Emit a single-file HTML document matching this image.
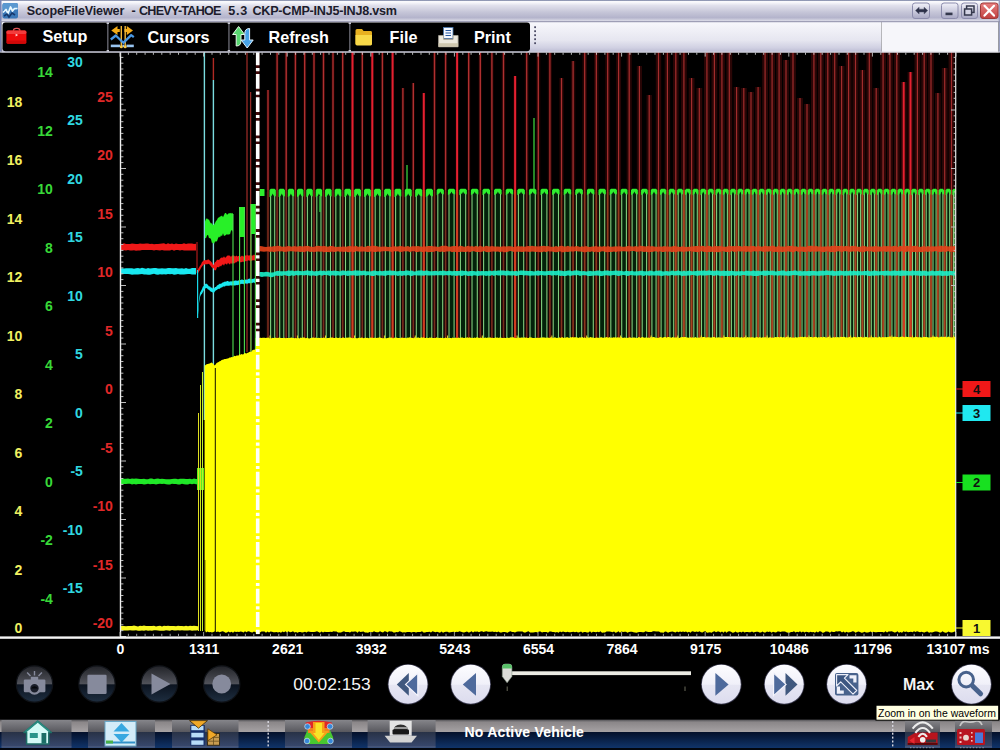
<!DOCTYPE html>
<html><head><meta charset="utf-8"><title>ScopeFileViewer</title>
<style>
html,body{margin:0;padding:0;background:#000;}
body{width:1000px;height:750px;overflow:hidden;position:relative;font-family:"Liberation Sans",sans-serif;}
svg{position:absolute;left:0;top:0;display:block}
text{font-family:"Liberation Sans",sans-serif;}
.b{font-weight:bold}
.ax{font-weight:bold;font-size:14px;text-anchor:end}
.tl{font-weight:bold;font-size:14px;fill:#fff;text-anchor:middle}
.tb{font-weight:bold;font-size:16.2px;fill:#fff}
.mk{font-weight:bold;font-size:13px;fill:#111;text-anchor:middle}
</style></head><body>
<svg width="1000" height="750" viewBox="0 0 1000 750">
<defs>
<linearGradient id="gTitle" x1="0" y1="0" x2="0" y2="1">
<stop offset="0" stop-color="#5c6890"/><stop offset="0.07" stop-color="#fdfdff"/><stop offset="0.25" stop-color="#e0e0ec"/><stop offset="0.55" stop-color="#c6c6d8"/><stop offset="0.8" stop-color="#b4b4cc"/><stop offset="0.9" stop-color="#ccccdc"/><stop offset="1" stop-color="#ececf4"/>
</linearGradient>
<linearGradient id="gTool" x1="0" y1="0" x2="0" y2="1">
<stop offset="0" stop-color="#f8f8fc"/><stop offset="0.6" stop-color="#e6e6f0"/><stop offset="0.85" stop-color="#d0d0e2"/><stop offset="1" stop-color="#babad2"/>
</linearGradient>
<linearGradient id="gBtn" x1="0" y1="0" x2="0" y2="1">
<stop offset="0" stop-color="#f2f2fa"/><stop offset="1" stop-color="#a8a8c4"/>
</linearGradient>
<linearGradient id="gClose" x1="0" y1="0" x2="0" y2="1">
<stop offset="0" stop-color="#e88080"/><stop offset="1" stop-color="#c04040"/>
</linearGradient>
<linearGradient id="gRound" x1="0" y1="0" x2="0" y2="1">
<stop offset="0" stop-color="#fdfdff"/><stop offset="0.5" stop-color="#f0f0f9"/><stop offset="0.52" stop-color="#e6e6f3"/><stop offset="1" stop-color="#dcdcee"/>
</linearGradient>
<linearGradient id="gDis" x1="0" y1="0" x2="0" y2="1">
<stop offset="0" stop-color="#222328"/><stop offset="0.5" stop-color="#50525a"/><stop offset="0.52" stop-color="#0c1420"/><stop offset="1" stop-color="#1e2e40"/>
</linearGradient>
<linearGradient id="gTaskTop" x1="0" y1="0" x2="0" y2="1">
<stop offset="0" stop-color="#505054"/><stop offset="0.2" stop-color="#8a8688"/><stop offset="1" stop-color="#a6a2a4"/>
</linearGradient>
<linearGradient id="gTaskBot" x1="0" y1="0" x2="0" y2="1">
<stop offset="0" stop-color="#04102a"/><stop offset="1" stop-color="#10346a"/>
</linearGradient>
<linearGradient id="gTaskBotB" x1="0" y1="0" x2="0" y2="1">
<stop offset="0" stop-color="#283246"/><stop offset="1" stop-color="#38486e"/>
</linearGradient>
<linearGradient id="gTaskTopD" x1="0" y1="0" x2="0" y2="1">
<stop offset="0" stop-color="#85858a"/><stop offset="1" stop-color="#58585e"/>
</linearGradient>
</defs>
<rect width="1000" height="750" fill="#000"/>

<g id="redspikes" stroke-linecap="butt">
<line x1="268.0" y1="90" x2="268.0" y2="190" stroke="#200303" stroke-width="3.2"/>
<line x1="277.1" y1="52" x2="277.1" y2="190" stroke="#200303" stroke-width="3.2"/>
<line x1="286.2" y1="52" x2="286.2" y2="190" stroke="#200303" stroke-width="3.2"/>
<line x1="295.4" y1="52" x2="295.4" y2="190" stroke="#200303" stroke-width="3.2"/>
<line x1="304.7" y1="52" x2="304.7" y2="190" stroke="#200303" stroke-width="3.2"/>
<line x1="314.0" y1="52" x2="314.0" y2="190" stroke="#200303" stroke-width="3.2"/>
<line x1="323.5" y1="52" x2="323.5" y2="190" stroke="#200303" stroke-width="3.2"/>
<line x1="333.0" y1="52" x2="333.0" y2="190" stroke="#200303" stroke-width="3.2"/>
<line x1="342.7" y1="52" x2="342.7" y2="190" stroke="#200303" stroke-width="3.2"/>
<line x1="352.5" y1="52" x2="352.5" y2="190" stroke="#200303" stroke-width="3.2"/>
<line x1="362.3" y1="52" x2="362.3" y2="190" stroke="#200303" stroke-width="3.2"/>
<line x1="372.3" y1="52" x2="372.3" y2="190" stroke="#200303" stroke-width="3.2"/>
<line x1="382.4" y1="52" x2="382.4" y2="190" stroke="#200303" stroke-width="3.2"/>
<line x1="392.6" y1="52" x2="392.6" y2="190" stroke="#200303" stroke-width="3.2"/>
<line x1="402.9" y1="88" x2="402.9" y2="190" stroke="#200303" stroke-width="3.2"/>
<line x1="413.3" y1="83" x2="413.3" y2="190" stroke="#200303" stroke-width="3.2"/>
<line x1="423.8" y1="93" x2="423.8" y2="190" stroke="#200303" stroke-width="3.2"/>
<line x1="434.5" y1="52" x2="434.5" y2="190" stroke="#200303" stroke-width="3.2"/>
<line x1="445.6" y1="52" x2="445.6" y2="190" stroke="#200303" stroke-width="3.2"/>
<line x1="457.1" y1="52" x2="457.1" y2="190" stroke="#200303" stroke-width="3.2"/>
<line x1="468.7" y1="52" x2="468.7" y2="190" stroke="#200303" stroke-width="3.2"/>
<line x1="480.3" y1="52" x2="480.3" y2="190" stroke="#200303" stroke-width="3.3215357361167204"/>
<line x1="491.9" y1="52" x2="491.9" y2="190" stroke="#200303" stroke-width="3.4586266452076297"/>
<line x1="503.5" y1="52" x2="503.5" y2="190" stroke="#210303" stroke-width="3.595717554298539"/>
<line x1="515.1" y1="76" x2="515.1" y2="190" stroke="#220303" stroke-width="3.7328084633894485"/>
<line x1="526.7" y1="52" x2="526.7" y2="190" stroke="#220303" stroke-width="3.869899372480358"/>
<line x1="538.3" y1="52" x2="538.3" y2="190" stroke="#230303" stroke-width="4.006990281571267"/>
<line x1="549.9" y1="52" x2="549.9" y2="190" stroke="#230404" stroke-width="4.144081190662177"/>
<line x1="561.5" y1="78" x2="561.5" y2="190" stroke="#240404" stroke-width="4.2811720997530855"/>
<line x1="573.1" y1="61" x2="573.1" y2="190" stroke="#240404" stroke-width="4.418263008843995"/>
<line x1="584.7" y1="52" x2="584.7" y2="190" stroke="#250404" stroke-width="4.555353917934904"/>
<line x1="596.3" y1="52" x2="596.3" y2="190" stroke="#250404" stroke-width="4.692444827025814"/>
<line x1="607.7" y1="52" x2="607.7" y2="190" stroke="#260404" stroke-width="4.826862267798338"/>
<line x1="618.6" y1="52" x2="618.6" y2="190" stroke="#260505" stroke-width="4.956440680703052"/>
<line x1="629.2" y1="52" x2="629.2" y2="190" stroke="#270505" stroke-width="5.081354270743197"/>
<line x1="639.4" y1="66" x2="639.4" y2="190" stroke="#270505" stroke-width="5.201770971541896"/>
<line x1="649.2" y1="95" x2="649.2" y2="190" stroke="#280505" stroke-width="5.317852671111842"/>
<line x1="658.5" y1="52" x2="658.5" y2="190" stroke="#280505" stroke-width="5.428232764828977"/>
<line x1="667.4" y1="52" x2="667.4" y2="190" stroke="#280505" stroke-width="5.533093853860256"/>
<line x1="675.8" y1="52" x2="675.8" y2="190" stroke="#290505" stroke-width="5.632711888439969"/>
<line x1="683.9" y1="52" x2="683.9" y2="190" stroke="#290505" stroke-width="5.7273490212906975"/>
<line x1="691.6" y1="78" x2="691.6" y2="190" stroke="#2a0606" stroke-width="5.800000000000001"/>
<line x1="699.3" y1="88" x2="699.3" y2="190" stroke="#2a0606" stroke-width="5.800000000000001"/>
<line x1="706.9" y1="52" x2="706.9" y2="190" stroke="#2a0606" stroke-width="5.800000000000001"/>
<line x1="714.4" y1="52" x2="714.4" y2="190" stroke="#2a0606" stroke-width="5.800000000000001"/>
<line x1="721.9" y1="52" x2="721.9" y2="190" stroke="#2a0606" stroke-width="5.800000000000001"/>
<line x1="729.3" y1="52" x2="729.3" y2="190" stroke="#2a0606" stroke-width="5.800000000000001"/>
<line x1="736.6" y1="87" x2="736.6" y2="190" stroke="#2a0606" stroke-width="5.800000000000001"/>
<line x1="743.8" y1="88" x2="743.8" y2="190" stroke="#2a0606" stroke-width="5.800000000000001"/>
<line x1="751.0" y1="92" x2="751.0" y2="190" stroke="#2a0606" stroke-width="5.800000000000001"/>
<line x1="758.1" y1="87" x2="758.1" y2="190" stroke="#2a0606" stroke-width="5.800000000000001"/>
<line x1="765.1" y1="52" x2="765.1" y2="190" stroke="#2a0606" stroke-width="5.800000000000001"/>
<line x1="772.1" y1="52" x2="772.1" y2="190" stroke="#2a0606" stroke-width="5.800000000000001"/>
<line x1="779.1" y1="52" x2="779.1" y2="190" stroke="#2a0606" stroke-width="5.800000000000001"/>
<line x1="786.0" y1="60" x2="786.0" y2="190" stroke="#2a0606" stroke-width="5.800000000000001"/>
<line x1="793.0" y1="52" x2="793.0" y2="190" stroke="#2a0606" stroke-width="5.800000000000001"/>
<line x1="800.0" y1="98" x2="800.0" y2="190" stroke="#2a0606" stroke-width="5.800000000000001"/>
<line x1="807.0" y1="104" x2="807.0" y2="190" stroke="#2a0606" stroke-width="5.800000000000001"/>
<line x1="813.9" y1="52" x2="813.9" y2="190" stroke="#2a0606" stroke-width="5.800000000000001"/>
<line x1="820.8" y1="52" x2="820.8" y2="190" stroke="#2a0606" stroke-width="5.800000000000001"/>
<line x1="827.8" y1="52" x2="827.8" y2="190" stroke="#2a0606" stroke-width="5.800000000000001"/>
<line x1="834.7" y1="52" x2="834.7" y2="190" stroke="#2a0606" stroke-width="5.800000000000001"/>
<line x1="841.6" y1="66" x2="841.6" y2="190" stroke="#2a0606" stroke-width="5.800000000000001"/>
<line x1="848.6" y1="52" x2="848.6" y2="190" stroke="#2a0606" stroke-width="5.800000000000001"/>
<line x1="855.5" y1="52" x2="855.5" y2="190" stroke="#2a0606" stroke-width="5.800000000000001"/>
<line x1="862.4" y1="70" x2="862.4" y2="190" stroke="#2a0606" stroke-width="5.800000000000001"/>
<line x1="869.3" y1="52" x2="869.3" y2="190" stroke="#2a0606" stroke-width="5.800000000000001"/>
<line x1="876.2" y1="88" x2="876.2" y2="190" stroke="#2a0606" stroke-width="5.800000000000001"/>
<line x1="883.1" y1="52" x2="883.1" y2="190" stroke="#2a0606" stroke-width="5.800000000000001"/>
<line x1="889.9" y1="52" x2="889.9" y2="190" stroke="#2a0606" stroke-width="5.800000000000001"/>
<line x1="896.8" y1="52" x2="896.8" y2="190" stroke="#2a0606" stroke-width="5.800000000000001"/>
<line x1="903.7" y1="82" x2="903.7" y2="190" stroke="#2a0606" stroke-width="5.800000000000001"/>
<line x1="910.5" y1="72" x2="910.5" y2="190" stroke="#2a0606" stroke-width="5.800000000000001"/>
<line x1="917.4" y1="52" x2="917.4" y2="190" stroke="#2a0606" stroke-width="5.800000000000001"/>
<line x1="924.2" y1="52" x2="924.2" y2="190" stroke="#2a0606" stroke-width="5.800000000000001"/>
<line x1="931.0" y1="52" x2="931.0" y2="190" stroke="#2a0606" stroke-width="5.800000000000001"/>
<line x1="937.9" y1="93" x2="937.9" y2="190" stroke="#2a0606" stroke-width="5.800000000000001"/>
<line x1="944.7" y1="68" x2="944.7" y2="190" stroke="#2a0606" stroke-width="5.800000000000001"/>
<line x1="951.5" y1="52" x2="951.5" y2="190" stroke="#2a0606" stroke-width="5.800000000000001"/>
<line x1="268.0" y1="90" x2="268.0" y2="190" stroke="#b03030" stroke-width="1.4"/>
<rect x="265.7" y="192" width="4.7" height="148" fill="#100604"/>
<line x1="268.0" y1="190" x2="268.0" y2="340" stroke="#782a1c" stroke-width="1.65"/>
<line x1="277.1" y1="52" x2="277.1" y2="190" stroke="#b03030" stroke-width="1.4"/>
<rect x="274.8" y="192" width="4.8" height="148" fill="#100604"/>
<line x1="277.1" y1="190" x2="277.1" y2="340" stroke="#782a1c" stroke-width="1.65"/>
<line x1="286.2" y1="52" x2="286.2" y2="190" stroke="#b03030" stroke-width="1.4"/>
<rect x="283.9" y="192" width="4.8" height="148" fill="#100604"/>
<line x1="286.2" y1="190" x2="286.2" y2="340" stroke="#782a1c" stroke-width="1.65"/>
<line x1="295.4" y1="52" x2="295.4" y2="190" stroke="#b03030" stroke-width="1.4"/>
<rect x="293.1" y="192" width="4.8" height="148" fill="#100604"/>
<line x1="295.4" y1="190" x2="295.4" y2="340" stroke="#782a1c" stroke-width="1.65"/>
<line x1="304.7" y1="52" x2="304.7" y2="190" stroke="#b03030" stroke-width="1.4"/>
<rect x="302.3" y="192" width="4.9" height="148" fill="#100604"/>
<line x1="304.7" y1="190" x2="304.7" y2="340" stroke="#782a1c" stroke-width="1.65"/>
<line x1="314.0" y1="52" x2="314.0" y2="190" stroke="#b03030" stroke-width="1.4"/>
<rect x="311.7" y="192" width="4.9" height="148" fill="#100604"/>
<line x1="314.0" y1="190" x2="314.0" y2="340" stroke="#782a1c" stroke-width="1.65"/>
<line x1="323.5" y1="52" x2="323.5" y2="190" stroke="#b03030" stroke-width="1.4"/>
<rect x="321.1" y="192" width="5.0" height="148" fill="#100604"/>
<line x1="323.5" y1="190" x2="323.5" y2="340" stroke="#782a1c" stroke-width="1.65"/>
<line x1="333.0" y1="52" x2="333.0" y2="190" stroke="#b03030" stroke-width="1.4"/>
<rect x="330.6" y="192" width="5.0" height="148" fill="#100604"/>
<line x1="333.0" y1="190" x2="333.0" y2="340" stroke="#782a1c" stroke-width="1.65"/>
<line x1="342.7" y1="52" x2="342.7" y2="190" stroke="#b03030" stroke-width="1.4"/>
<rect x="340.3" y="192" width="5.1" height="148" fill="#100604"/>
<line x1="342.7" y1="190" x2="342.7" y2="340" stroke="#782a1c" stroke-width="1.65"/>
<line x1="352.5" y1="52" x2="352.5" y2="190" stroke="#e42030" stroke-width="2.0"/>
<rect x="350.0" y="192" width="5.1" height="148" fill="#100604"/>
<line x1="352.5" y1="190" x2="352.5" y2="340" stroke="#d03c20" stroke-width="2.25"/>
<line x1="362.3" y1="52" x2="362.3" y2="190" stroke="#b03030" stroke-width="1.4"/>
<rect x="359.8" y="192" width="5.2" height="148" fill="#100604"/>
<line x1="362.3" y1="190" x2="362.3" y2="340" stroke="#782a1c" stroke-width="1.65"/>
<line x1="372.3" y1="52" x2="372.3" y2="190" stroke="#e42030" stroke-width="2.0"/>
<rect x="369.8" y="192" width="5.2" height="148" fill="#100604"/>
<line x1="372.3" y1="190" x2="372.3" y2="340" stroke="#d03c20" stroke-width="2.25"/>
<line x1="382.4" y1="52" x2="382.4" y2="190" stroke="#b03030" stroke-width="1.4"/>
<rect x="379.8" y="192" width="5.3" height="148" fill="#100604"/>
<line x1="382.4" y1="190" x2="382.4" y2="340" stroke="#782a1c" stroke-width="1.65"/>
<line x1="392.6" y1="52" x2="392.6" y2="190" stroke="#e42030" stroke-width="2.0"/>
<rect x="390.0" y="192" width="5.4" height="148" fill="#100604"/>
<line x1="392.6" y1="190" x2="392.6" y2="340" stroke="#d03c20" stroke-width="2.25"/>
<line x1="402.9" y1="88" x2="402.9" y2="190" stroke="#b03030" stroke-width="1.4"/>
<rect x="400.3" y="192" width="5.4" height="148" fill="#100604"/>
<line x1="402.9" y1="190" x2="402.9" y2="340" stroke="#782a1c" stroke-width="1.65"/>
<line x1="413.3" y1="83" x2="413.3" y2="190" stroke="#b03030" stroke-width="1.4"/>
<rect x="410.7" y="192" width="5.5" height="148" fill="#100604"/>
<line x1="413.3" y1="190" x2="413.3" y2="340" stroke="#782a1c" stroke-width="1.65"/>
<line x1="423.8" y1="93" x2="423.8" y2="190" stroke="#e42030" stroke-width="2.0"/>
<rect x="421.1" y="192" width="5.6" height="148" fill="#100604"/>
<line x1="423.8" y1="190" x2="423.8" y2="340" stroke="#d03c20" stroke-width="2.25"/>
<line x1="434.5" y1="52" x2="434.5" y2="190" stroke="#b03030" stroke-width="1.4"/>
<rect x="431.8" y="192" width="5.8" height="148" fill="#100604"/>
<line x1="434.5" y1="190" x2="434.5" y2="340" stroke="#782a1c" stroke-width="1.65"/>
<line x1="445.6" y1="52" x2="445.6" y2="190" stroke="#b03030" stroke-width="1.4"/>
<rect x="442.8" y="192" width="6.0" height="148" fill="#100604"/>
<line x1="445.6" y1="190" x2="445.6" y2="340" stroke="#782a1c" stroke-width="1.65"/>
<line x1="457.1" y1="52" x2="457.1" y2="190" stroke="#e42030" stroke-width="2.0"/>
<rect x="454.2" y="192" width="6.0" height="148" fill="#100604"/>
<line x1="457.1" y1="190" x2="457.1" y2="340" stroke="#d03c20" stroke-width="2.25"/>
<line x1="468.7" y1="52" x2="468.7" y2="190" stroke="#b03030" stroke-width="1.4"/>
<rect x="465.8" y="192" width="6.0" height="148" fill="#100604"/>
<line x1="468.7" y1="190" x2="468.7" y2="340" stroke="#782a1c" stroke-width="1.65"/>
<line x1="480.3" y1="52" x2="480.3" y2="190" stroke="#af3030" stroke-width="1.3906510972217907"/>
<rect x="477.4" y="192" width="6.0" height="148" fill="#100604"/>
<line x1="480.3" y1="190" x2="480.3" y2="340" stroke="#782a1c" stroke-width="1.64"/>
<line x1="491.9" y1="52" x2="491.9" y2="190" stroke="#ae3030" stroke-width="1.380105642676336"/>
<rect x="489.0" y="192" width="6.0" height="148" fill="#100604"/>
<line x1="491.9" y1="190" x2="491.9" y2="340" stroke="#782a1c" stroke-width="1.63"/>
<line x1="503.5" y1="52" x2="503.5" y2="190" stroke="#ad3030" stroke-width="1.3695601881308814"/>
<rect x="500.6" y="192" width="6.0" height="148" fill="#100604"/>
<line x1="503.5" y1="190" x2="503.5" y2="340" stroke="#782a1c" stroke-width="1.62"/>
<line x1="515.1" y1="76" x2="515.1" y2="190" stroke="#e42030" stroke-width="2.0"/>
<rect x="512.2" y="192" width="6.0" height="148" fill="#100604"/>
<line x1="515.1" y1="190" x2="515.1" y2="340" stroke="#d03c20" stroke-width="2.25"/>
<line x1="526.7" y1="52" x2="526.7" y2="190" stroke="#ab2f2f" stroke-width="1.3484692790399724"/>
<rect x="523.8" y="192" width="6.0" height="148" fill="#100604"/>
<line x1="526.7" y1="190" x2="526.7" y2="340" stroke="#7a2b1c" stroke-width="1.62"/>
<line x1="538.3" y1="52" x2="538.3" y2="190" stroke="#ab2f2f" stroke-width="1.3379238244945177"/>
<rect x="535.4" y="192" width="6.0" height="148" fill="#120704"/>
<line x1="538.3" y1="190" x2="538.3" y2="340" stroke="#7d2c1c" stroke-width="1.64"/>
<line x1="549.9" y1="52" x2="549.9" y2="190" stroke="#aa2f2f" stroke-width="1.3273783699490633"/>
<rect x="547.0" y="192" width="6.0" height="148" fill="#130704"/>
<line x1="549.9" y1="190" x2="549.9" y2="340" stroke="#802e1c" stroke-width="1.66"/>
<line x1="561.5" y1="78" x2="561.5" y2="190" stroke="#a92f2f" stroke-width="1.3168329154036087"/>
<rect x="558.6" y="192" width="6.0" height="148" fill="#150804"/>
<line x1="561.5" y1="190" x2="561.5" y2="340" stroke="#84301d" stroke-width="1.68"/>
<line x1="573.1" y1="61" x2="573.1" y2="190" stroke="#a82f2f" stroke-width="1.306287460858154"/>
<rect x="570.2" y="192" width="6.0" height="148" fill="#160904"/>
<line x1="573.1" y1="190" x2="573.1" y2="340" stroke="#87321d" stroke-width="1.71"/>
<line x1="584.7" y1="52" x2="584.7" y2="190" stroke="#a72e2e" stroke-width="1.2957420063126996"/>
<rect x="581.8" y="192" width="6.0" height="148" fill="#180a04"/>
<line x1="584.7" y1="190" x2="584.7" y2="340" stroke="#8b341d" stroke-width="1.73"/>
<line x1="596.3" y1="52" x2="596.3" y2="190" stroke="#a62e2e" stroke-width="1.285196551767245"/>
<rect x="593.4" y="192" width="5.9" height="148" fill="#190a04"/>
<line x1="596.3" y1="190" x2="596.3" y2="340" stroke="#8e361d" stroke-width="1.75"/>
<line x1="607.7" y1="52" x2="607.7" y2="190" stroke="#a52e2e" stroke-width="1.274856748630897"/>
<rect x="604.9" y="192" width="5.7" height="148" fill="#1a0b04"/>
<line x1="607.7" y1="190" x2="607.7" y2="340" stroke="#92381e" stroke-width="1.77"/>
<line x1="618.6" y1="52" x2="618.6" y2="190" stroke="#a52e2e" stroke-width="1.2648891784074574"/>
<rect x="616.0" y="192" width="5.5" height="148" fill="#1c0c04"/>
<line x1="618.6" y1="190" x2="618.6" y2="340" stroke="#953a1e" stroke-width="1.79"/>
<line x1="629.2" y1="52" x2="629.2" y2="190" stroke="#a42e2e" stroke-width="1.2552804407120617"/>
<rect x="626.6" y="192" width="5.3" height="148" fill="#1d0c04"/>
<line x1="629.2" y1="190" x2="629.2" y2="340" stroke="#983b1e" stroke-width="1.81"/>
<line x1="639.4" y1="66" x2="639.4" y2="190" stroke="#a32d2d" stroke-width="1.2460176175737003"/>
<rect x="636.9" y="192" width="5.1" height="148" fill="#1e0d04"/>
<line x1="639.4" y1="190" x2="639.4" y2="340" stroke="#9b3d1e" stroke-width="1.83"/>
<line x1="649.2" y1="95" x2="649.2" y2="190" stroke="#a22d2d" stroke-width="1.2370882560683198"/>
<rect x="646.9" y="192" width="4.9" height="148" fill="#200e04"/>
<line x1="649.2" y1="190" x2="649.2" y2="340" stroke="#9e3e1f" stroke-width="1.85"/>
<line x1="658.5" y1="52" x2="658.5" y2="190" stroke="#a22d2d" stroke-width="1.2285974796285402"/>
<rect x="656.3" y="192" width="4.6" height="148" fill="#210e04"/>
<line x1="658.5" y1="190" x2="658.5" y2="340" stroke="#a1401f" stroke-width="1.87"/>
<line x1="667.4" y1="52" x2="667.4" y2="190" stroke="#a12d2d" stroke-width="1.2205312420107495"/>
<rect x="665.3" y="192" width="4.4" height="148" fill="#220f04"/>
<line x1="667.4" y1="190" x2="667.4" y2="340" stroke="#a4411f" stroke-width="1.89"/>
<line x1="675.8" y1="52" x2="675.8" y2="190" stroke="#a12d2d" stroke-width="1.2128683162738483"/>
<rect x="673.8" y="192" width="4.2" height="148" fill="#230f04"/>
<line x1="675.8" y1="190" x2="675.8" y2="340" stroke="#a6431f" stroke-width="1.90"/>
<line x1="683.9" y1="52" x2="683.9" y2="190" stroke="#a02d2d" stroke-width="1.2055885368237924"/>
<rect x="681.9" y="192" width="4.0" height="148" fill="#241004"/>
<line x1="683.9" y1="190" x2="683.9" y2="340" stroke="#a84420" stroke-width="1.91"/>
<line x1="691.6" y1="78" x2="691.6" y2="190" stroke="#a02c2c" stroke-width="1.2"/>
<rect x="689.7" y="192" width="4.0" height="148" fill="#241004"/>
<line x1="691.6" y1="190" x2="691.6" y2="340" stroke="#a84420" stroke-width="1.90"/>
<line x1="699.3" y1="88" x2="699.3" y2="190" stroke="#a02c2c" stroke-width="1.2"/>
<rect x="697.4" y="192" width="4.0" height="148" fill="#241004"/>
<line x1="699.3" y1="190" x2="699.3" y2="340" stroke="#a84420" stroke-width="1.90"/>
<line x1="706.9" y1="52" x2="706.9" y2="190" stroke="#a02c2c" stroke-width="1.2"/>
<rect x="705.0" y="192" width="3.9" height="148" fill="#241004"/>
<line x1="706.9" y1="190" x2="706.9" y2="340" stroke="#a84420" stroke-width="1.90"/>
<line x1="714.4" y1="52" x2="714.4" y2="190" stroke="#a02c2c" stroke-width="1.2"/>
<rect x="712.6" y="192" width="3.9" height="148" fill="#241004"/>
<line x1="714.4" y1="190" x2="714.4" y2="340" stroke="#a84420" stroke-width="1.90"/>
<line x1="721.9" y1="52" x2="721.9" y2="190" stroke="#a02c2c" stroke-width="1.2"/>
<rect x="720.0" y="192" width="3.8" height="148" fill="#241004"/>
<line x1="721.9" y1="190" x2="721.9" y2="340" stroke="#a84420" stroke-width="1.90"/>
<line x1="729.3" y1="52" x2="729.3" y2="190" stroke="#a02c2c" stroke-width="1.2"/>
<rect x="727.4" y="192" width="3.8" height="148" fill="#241004"/>
<line x1="729.3" y1="190" x2="729.3" y2="340" stroke="#a84420" stroke-width="1.90"/>
<line x1="736.6" y1="87" x2="736.6" y2="190" stroke="#a02c2c" stroke-width="1.2"/>
<rect x="734.8" y="192" width="3.8" height="148" fill="#241004"/>
<line x1="736.6" y1="190" x2="736.6" y2="340" stroke="#a84420" stroke-width="1.90"/>
<line x1="743.8" y1="88" x2="743.8" y2="190" stroke="#a02c2c" stroke-width="1.2"/>
<rect x="742.0" y="192" width="3.7" height="148" fill="#241004"/>
<line x1="743.8" y1="190" x2="743.8" y2="340" stroke="#a84420" stroke-width="1.90"/>
<line x1="751.0" y1="92" x2="751.0" y2="190" stroke="#a02c2c" stroke-width="1.2"/>
<rect x="749.2" y="192" width="3.7" height="148" fill="#241004"/>
<line x1="751.0" y1="190" x2="751.0" y2="340" stroke="#a84420" stroke-width="1.90"/>
<line x1="758.1" y1="87" x2="758.1" y2="190" stroke="#a02c2c" stroke-width="1.2"/>
<rect x="756.3" y="192" width="3.7" height="148" fill="#241004"/>
<line x1="758.1" y1="190" x2="758.1" y2="340" stroke="#a84420" stroke-width="1.90"/>
<line x1="765.1" y1="52" x2="765.1" y2="190" stroke="#a02c2c" stroke-width="1.2"/>
<rect x="763.3" y="192" width="3.6" height="148" fill="#241004"/>
<line x1="765.1" y1="190" x2="765.1" y2="340" stroke="#a84420" stroke-width="1.90"/>
<line x1="772.1" y1="52" x2="772.1" y2="190" stroke="#a02c2c" stroke-width="1.2"/>
<rect x="770.3" y="192" width="3.6" height="148" fill="#241004"/>
<line x1="772.1" y1="190" x2="772.1" y2="340" stroke="#a84420" stroke-width="1.90"/>
<line x1="779.1" y1="52" x2="779.1" y2="190" stroke="#a02c2c" stroke-width="1.2"/>
<rect x="777.3" y="192" width="3.6" height="148" fill="#241004"/>
<line x1="779.1" y1="190" x2="779.1" y2="340" stroke="#a84420" stroke-width="1.90"/>
<line x1="786.0" y1="60" x2="786.0" y2="190" stroke="#a02c2c" stroke-width="1.2"/>
<rect x="784.3" y="192" width="3.6" height="148" fill="#241004"/>
<line x1="786.0" y1="190" x2="786.0" y2="340" stroke="#a84420" stroke-width="1.90"/>
<line x1="793.0" y1="52" x2="793.0" y2="190" stroke="#a02c2c" stroke-width="1.2"/>
<rect x="791.3" y="192" width="3.6" height="148" fill="#241004"/>
<line x1="793.0" y1="190" x2="793.0" y2="340" stroke="#a84420" stroke-width="1.90"/>
<line x1="800.0" y1="98" x2="800.0" y2="190" stroke="#a02c2c" stroke-width="1.2"/>
<rect x="798.3" y="192" width="3.6" height="148" fill="#241004"/>
<line x1="800.0" y1="190" x2="800.0" y2="340" stroke="#a84420" stroke-width="1.90"/>
<line x1="807.0" y1="104" x2="807.0" y2="190" stroke="#a02c2c" stroke-width="1.2"/>
<rect x="805.2" y="192" width="3.6" height="148" fill="#241004"/>
<line x1="807.0" y1="190" x2="807.0" y2="340" stroke="#a84420" stroke-width="1.90"/>
<line x1="813.9" y1="52" x2="813.9" y2="190" stroke="#a02c2c" stroke-width="1.2"/>
<rect x="812.2" y="192" width="3.6" height="148" fill="#241004"/>
<line x1="813.9" y1="190" x2="813.9" y2="340" stroke="#a84420" stroke-width="1.90"/>
<line x1="820.8" y1="52" x2="820.8" y2="190" stroke="#a02c2c" stroke-width="1.2"/>
<rect x="819.1" y="192" width="3.6" height="148" fill="#241004"/>
<line x1="820.8" y1="190" x2="820.8" y2="340" stroke="#a84420" stroke-width="1.90"/>
<line x1="827.8" y1="52" x2="827.8" y2="190" stroke="#a02c2c" stroke-width="1.2"/>
<rect x="826.1" y="192" width="3.6" height="148" fill="#241004"/>
<line x1="827.8" y1="190" x2="827.8" y2="340" stroke="#a84420" stroke-width="1.90"/>
<line x1="834.7" y1="52" x2="834.7" y2="190" stroke="#a02c2c" stroke-width="1.2"/>
<rect x="833.0" y="192" width="3.6" height="148" fill="#241004"/>
<line x1="834.7" y1="190" x2="834.7" y2="340" stroke="#a84420" stroke-width="1.90"/>
<line x1="841.6" y1="66" x2="841.6" y2="190" stroke="#a02c2c" stroke-width="1.2"/>
<rect x="839.9" y="192" width="3.6" height="148" fill="#241004"/>
<line x1="841.6" y1="190" x2="841.6" y2="340" stroke="#a84420" stroke-width="1.90"/>
<line x1="848.6" y1="52" x2="848.6" y2="190" stroke="#a02c2c" stroke-width="1.2"/>
<rect x="846.8" y="192" width="3.6" height="148" fill="#241004"/>
<line x1="848.6" y1="190" x2="848.6" y2="340" stroke="#a84420" stroke-width="1.90"/>
<line x1="855.5" y1="52" x2="855.5" y2="190" stroke="#a02c2c" stroke-width="1.2"/>
<rect x="853.7" y="192" width="3.6" height="148" fill="#241004"/>
<line x1="855.5" y1="190" x2="855.5" y2="340" stroke="#a84420" stroke-width="1.90"/>
<line x1="862.4" y1="70" x2="862.4" y2="190" stroke="#a02c2c" stroke-width="1.2"/>
<rect x="860.7" y="192" width="3.6" height="148" fill="#241004"/>
<line x1="862.4" y1="190" x2="862.4" y2="340" stroke="#a84420" stroke-width="1.90"/>
<line x1="869.3" y1="52" x2="869.3" y2="190" stroke="#a02c2c" stroke-width="1.2"/>
<rect x="867.6" y="192" width="3.6" height="148" fill="#241004"/>
<line x1="869.3" y1="190" x2="869.3" y2="340" stroke="#a84420" stroke-width="1.90"/>
<line x1="876.2" y1="88" x2="876.2" y2="190" stroke="#a02c2c" stroke-width="1.2"/>
<rect x="874.4" y="192" width="3.6" height="148" fill="#241004"/>
<line x1="876.2" y1="190" x2="876.2" y2="340" stroke="#a84420" stroke-width="1.90"/>
<line x1="883.1" y1="52" x2="883.1" y2="190" stroke="#a02c2c" stroke-width="1.2"/>
<rect x="881.3" y="192" width="3.6" height="148" fill="#241004"/>
<line x1="883.1" y1="190" x2="883.1" y2="340" stroke="#a84420" stroke-width="1.90"/>
<line x1="889.9" y1="52" x2="889.9" y2="190" stroke="#a02c2c" stroke-width="1.2"/>
<rect x="888.2" y="192" width="3.6" height="148" fill="#241004"/>
<line x1="889.9" y1="190" x2="889.9" y2="340" stroke="#a84420" stroke-width="1.90"/>
<line x1="896.8" y1="52" x2="896.8" y2="190" stroke="#a02c2c" stroke-width="1.2"/>
<rect x="895.1" y="192" width="3.6" height="148" fill="#241004"/>
<line x1="896.8" y1="190" x2="896.8" y2="340" stroke="#a84420" stroke-width="1.90"/>
<line x1="903.7" y1="82" x2="903.7" y2="190" stroke="#e42030" stroke-width="2.0"/>
<rect x="901.9" y="192" width="3.6" height="148" fill="#241004"/>
<line x1="903.7" y1="190" x2="903.7" y2="340" stroke="#d03c20" stroke-width="2.70"/>
<line x1="910.5" y1="72" x2="910.5" y2="190" stroke="#e42030" stroke-width="2.0"/>
<rect x="908.8" y="192" width="3.6" height="148" fill="#241004"/>
<line x1="910.5" y1="190" x2="910.5" y2="340" stroke="#d03c20" stroke-width="2.70"/>
<line x1="917.4" y1="52" x2="917.4" y2="190" stroke="#a02c2c" stroke-width="1.2"/>
<rect x="915.7" y="192" width="3.6" height="148" fill="#241004"/>
<line x1="917.4" y1="190" x2="917.4" y2="340" stroke="#a84420" stroke-width="1.90"/>
<line x1="924.2" y1="52" x2="924.2" y2="190" stroke="#a02c2c" stroke-width="1.2"/>
<rect x="922.5" y="192" width="3.6" height="148" fill="#241004"/>
<line x1="924.2" y1="190" x2="924.2" y2="340" stroke="#a84420" stroke-width="1.90"/>
<line x1="931.0" y1="52" x2="931.0" y2="190" stroke="#a02c2c" stroke-width="1.2"/>
<rect x="929.3" y="192" width="3.6" height="148" fill="#241004"/>
<line x1="931.0" y1="190" x2="931.0" y2="340" stroke="#a84420" stroke-width="1.90"/>
<line x1="937.9" y1="93" x2="937.9" y2="190" stroke="#a02c2c" stroke-width="1.2"/>
<rect x="936.2" y="192" width="3.5" height="148" fill="#241004"/>
<line x1="937.9" y1="190" x2="937.9" y2="340" stroke="#a84420" stroke-width="1.90"/>
<line x1="944.7" y1="68" x2="944.7" y2="190" stroke="#a02c2c" stroke-width="1.2"/>
<rect x="943.0" y="192" width="3.5" height="148" fill="#241004"/>
<line x1="944.7" y1="190" x2="944.7" y2="340" stroke="#a84420" stroke-width="1.90"/>
<line x1="951.5" y1="52" x2="951.5" y2="190" stroke="#a02c2c" stroke-width="1.2"/>
<rect x="949.8" y="192" width="3.5" height="148" fill="#241004"/>
<line x1="951.5" y1="190" x2="951.5" y2="340" stroke="#a84420" stroke-width="1.90"/>
<line x1="247" y1="52" x2="247" y2="352" stroke="#962a26" stroke-width="1.3"/>
<line x1="250.6" y1="92" x2="250.6" y2="352" stroke="#962a26" stroke-width="1.3"/>
</g>
<g id="greenfill">
<rect x="270.6" y="190" width="4.1" height="150" fill="#03220a"/>
<rect x="279.7" y="190" width="4.1" height="150" fill="#03220a"/>
<rect x="288.9" y="190" width="4.1" height="150" fill="#03220a"/>
<rect x="298.1" y="190" width="4.2" height="150" fill="#03220a"/>
<rect x="307.4" y="190" width="4.2" height="150" fill="#03220a"/>
<rect x="316.8" y="190" width="4.3" height="150" fill="#03220a"/>
<rect x="326.2" y="190" width="4.3" height="150" fill="#03220a"/>
<rect x="335.8" y="190" width="4.3" height="150" fill="#03220a"/>
<rect x="345.5" y="190" width="4.4" height="150" fill="#03220a"/>
<rect x="355.3" y="190" width="4.4" height="150" fill="#03220a"/>
<rect x="365.2" y="190" width="4.5" height="150" fill="#03220a"/>
<rect x="375.2" y="190" width="4.5" height="150" fill="#03220a"/>
<rect x="385.3" y="190" width="4.6" height="150" fill="#03220a"/>
<rect x="395.6" y="190" width="4.6" height="150" fill="#03220a"/>
<rect x="405.9" y="190" width="4.7" height="150" fill="#03220a"/>
<rect x="416.3" y="190" width="4.7" height="150" fill="#03220a"/>
<rect x="426.9" y="190" width="4.8" height="150" fill="#03220a"/>
<rect x="437.8" y="190" width="5.0" height="150" fill="#03220a"/>
<rect x="449.0" y="190" width="5.2" height="150" fill="#03220a"/>
<rect x="460.4" y="190" width="5.2" height="150" fill="#03220a"/>
<rect x="472.0" y="190" width="5.2" height="150" fill="#03220a"/>
<rect x="483.6" y="190" width="5.2" height="150" fill="#03220a"/>
<rect x="495.2" y="190" width="5.2" height="150" fill="#03220a"/>
<rect x="506.8" y="190" width="5.2" height="150" fill="#03220a"/>
<rect x="518.4" y="190" width="5.2" height="150" fill="#03220a"/>
<rect x="530.0" y="190" width="5.2" height="150" fill="#03220a"/>
<rect x="541.6" y="190" width="5.2" height="150" fill="#03220a"/>
<rect x="553.2" y="190" width="5.2" height="150" fill="#03220a"/>
<rect x="564.8" y="190" width="5.2" height="150" fill="#03220a"/>
<rect x="576.4" y="190" width="5.2" height="150" fill="#03220a"/>
<rect x="588.0" y="190" width="5.2" height="150" fill="#03220a"/>
<rect x="599.6" y="190" width="5.1" height="150" fill="#03220a"/>
<rect x="610.8" y="190" width="4.9" height="150" fill="#03220a"/>
<rect x="621.7" y="190" width="4.8" height="150" fill="#03220a"/>
<rect x="632.1" y="190" width="4.6" height="150" fill="#03220a"/>
<rect x="642.2" y="190" width="4.4" height="150" fill="#03220a"/>
<rect x="651.9" y="190" width="4.2" height="150" fill="#03220a"/>
<rect x="661.1" y="190" width="4.0" height="150" fill="#03220a"/>
<rect x="669.9" y="190" width="3.8" height="150" fill="#03220a"/>
<rect x="678.2" y="190" width="3.6" height="150" fill="#03220a"/>
<rect x="686.1" y="190" width="3.5" height="150" fill="#03220a"/>
<rect x="693.8" y="190" width="3.5" height="150" fill="#03220a"/>
<rect x="701.5" y="190" width="3.4" height="150" fill="#03220a"/>
<rect x="709.1" y="190" width="3.4" height="150" fill="#03220a"/>
<rect x="716.6" y="190" width="3.4" height="150" fill="#03220a"/>
<rect x="724.0" y="190" width="3.3" height="150" fill="#03220a"/>
<rect x="731.4" y="190" width="3.3" height="150" fill="#03220a"/>
<rect x="738.7" y="190" width="3.3" height="150" fill="#03220a"/>
<rect x="745.9" y="190" width="3.2" height="150" fill="#03220a"/>
<rect x="753.0" y="190" width="3.2" height="150" fill="#03220a"/>
<rect x="760.1" y="190" width="3.2" height="150" fill="#03220a"/>
<rect x="767.1" y="190" width="3.1" height="150" fill="#03220a"/>
<rect x="774.1" y="190" width="3.1" height="150" fill="#03220a"/>
<rect x="781.1" y="190" width="3.1" height="150" fill="#03220a"/>
<rect x="788.1" y="190" width="3.1" height="150" fill="#03220a"/>
<rect x="795.0" y="190" width="3.1" height="150" fill="#03220a"/>
<rect x="802.0" y="190" width="3.1" height="150" fill="#03220a"/>
<rect x="809.0" y="190" width="3.1" height="150" fill="#03220a"/>
<rect x="815.9" y="190" width="3.1" height="150" fill="#03220a"/>
<rect x="822.9" y="190" width="3.1" height="150" fill="#03220a"/>
<rect x="829.8" y="190" width="3.1" height="150" fill="#03220a"/>
<rect x="836.7" y="190" width="3.1" height="150" fill="#03220a"/>
<rect x="843.7" y="190" width="3.1" height="150" fill="#03220a"/>
<rect x="850.6" y="190" width="3.1" height="150" fill="#03220a"/>
<rect x="857.5" y="190" width="3.1" height="150" fill="#03220a"/>
<rect x="864.4" y="190" width="3.1" height="150" fill="#03220a"/>
<rect x="871.3" y="190" width="3.1" height="150" fill="#03220a"/>
<rect x="878.2" y="190" width="3.1" height="150" fill="#03220a"/>
<rect x="885.0" y="190" width="3.1" height="150" fill="#03220a"/>
<rect x="891.9" y="190" width="3.1" height="150" fill="#03220a"/>
<rect x="898.8" y="190" width="3.1" height="150" fill="#03220a"/>
<rect x="905.7" y="190" width="3.1" height="150" fill="#03220a"/>
<rect x="912.5" y="190" width="3.1" height="150" fill="#03220a"/>
<rect x="919.4" y="190" width="3.1" height="150" fill="#03220a"/>
<rect x="926.2" y="190" width="3.1" height="150" fill="#03220a"/>
<rect x="933.0" y="190" width="3.1" height="150" fill="#03220a"/>
<rect x="939.9" y="190" width="3.1" height="150" fill="#03220a"/>
<rect x="946.7" y="190" width="3.1" height="150" fill="#03220a"/>
<rect x="953.5" y="190" width="1.5" height="150" fill="#03220a"/>
</g>
<g id="green">
<line x1="270.6" y1="190" x2="270.6" y2="340" stroke="#90e48c" stroke-width="1.1" stroke-opacity="0.9"/>
<line x1="274.7" y1="190" x2="274.7" y2="340" stroke="#90e48c" stroke-width="1.1" stroke-opacity="0.9"/>
<path d="M269.5 197.3 V190.0 L270.8 188.8 H274.5 L275.8 190.0 V196.6 L273.9 195.8 L273.6 195.4 L272.7 193.6 L271.8 195.4 L271.4 195.8 Z" fill="#2ef02e"/>
<line x1="279.7" y1="190" x2="279.7" y2="340" stroke="#90e48c" stroke-width="1.1" stroke-opacity="0.9"/>
<line x1="283.8" y1="190" x2="283.8" y2="340" stroke="#90e48c" stroke-width="1.1" stroke-opacity="0.9"/>
<path d="M278.6 197.3 V190.0 L279.9 188.8 H283.6 L284.9 190.0 V196.6 L283.0 195.8 L282.7 195.4 L281.8 193.6 L280.9 195.4 L280.5 195.8 Z" fill="#2ef02e"/>
<line x1="288.9" y1="190" x2="288.9" y2="340" stroke="#90e48c" stroke-width="1.1" stroke-opacity="0.9"/>
<line x1="293.0" y1="190" x2="293.0" y2="340" stroke="#90e48c" stroke-width="1.1" stroke-opacity="0.9"/>
<path d="M287.8 197.3 V190.0 L289.1 188.8 H292.8 L294.1 190.0 V196.6 L292.2 195.8 L291.8 195.4 L290.9 193.6 L290.0 195.4 L289.7 195.8 Z" fill="#2ef02e"/>
<line x1="298.1" y1="190" x2="298.1" y2="340" stroke="#90e48c" stroke-width="1.1" stroke-opacity="0.9"/>
<line x1="302.3" y1="190" x2="302.3" y2="340" stroke="#90e48c" stroke-width="1.1" stroke-opacity="0.9"/>
<path d="M297.0 197.3 V190.0 L298.3 188.8 H302.1 L303.4 190.0 V196.6 L301.5 195.8 L301.1 195.4 L300.2 193.6 L299.3 195.4 L298.9 195.8 Z" fill="#2ef02e"/>
<line x1="307.4" y1="190" x2="307.4" y2="340" stroke="#90e48c" stroke-width="1.1" stroke-opacity="0.9"/>
<line x1="311.6" y1="190" x2="311.6" y2="340" stroke="#90e48c" stroke-width="1.1" stroke-opacity="0.9"/>
<path d="M306.3 197.3 V190.0 L307.6 188.8 H311.4 L312.7 190.0 V196.6 L310.8 195.8 L310.4 195.4 L309.5 193.6 L308.6 195.4 L308.2 195.8 Z" fill="#2ef02e"/>
<line x1="316.8" y1="190" x2="316.8" y2="340" stroke="#90e48c" stroke-width="1.1" stroke-opacity="0.9"/>
<line x1="321.0" y1="190" x2="321.0" y2="340" stroke="#90e48c" stroke-width="1.1" stroke-opacity="0.9"/>
<path d="M315.7 197.3 V190.0 L317.0 188.8 H320.8 L322.1 190.0 V196.6 L320.2 195.8 L319.8 195.4 L318.9 193.6 L318.0 195.4 L317.6 195.8 Z" fill="#2ef02e"/>
<line x1="326.2" y1="190" x2="326.2" y2="340" stroke="#90e48c" stroke-width="1.1" stroke-opacity="0.9"/>
<line x1="330.5" y1="190" x2="330.5" y2="340" stroke="#90e48c" stroke-width="1.1" stroke-opacity="0.9"/>
<path d="M325.1 197.3 V190.0 L326.4 188.8 H330.3 L331.6 190.0 V196.6 L329.7 195.8 L329.3 195.4 L328.4 193.6 L327.5 195.4 L327.0 195.8 Z" fill="#2ef02e"/>
<line x1="335.8" y1="190" x2="335.8" y2="340" stroke="#90e48c" stroke-width="1.1" stroke-opacity="0.9"/>
<line x1="340.2" y1="190" x2="340.2" y2="340" stroke="#90e48c" stroke-width="1.1" stroke-opacity="0.9"/>
<path d="M334.7 197.3 V190.0 L336.0 188.8 H340.0 L341.3 190.0 V196.6 L339.4 195.8 L338.9 195.4 L338.0 193.6 L337.1 195.4 L336.6 195.8 Z" fill="#2ef02e"/>
<line x1="345.5" y1="190" x2="345.5" y2="340" stroke="#90e48c" stroke-width="1.1" stroke-opacity="0.9"/>
<line x1="349.9" y1="190" x2="349.9" y2="340" stroke="#90e48c" stroke-width="1.1" stroke-opacity="0.9"/>
<path d="M344.4 197.3 V190.0 L345.7 188.8 H349.7 L351.0 190.0 V196.6 L349.1 195.8 L348.6 195.4 L347.7 193.6 L346.8 195.4 L346.3 195.8 Z" fill="#2ef02e"/>
<line x1="355.3" y1="190" x2="355.3" y2="340" stroke="#90e48c" stroke-width="1.1" stroke-opacity="0.9"/>
<line x1="359.8" y1="190" x2="359.8" y2="340" stroke="#90e48c" stroke-width="1.1" stroke-opacity="0.9"/>
<path d="M354.2 197.3 V190.0 L355.5 188.8 H359.6 L360.9 190.0 V196.6 L359.0 195.8 L358.4 195.4 L357.5 193.6 L356.6 195.4 L356.1 195.8 Z" fill="#2ef02e"/>
<line x1="365.2" y1="190" x2="365.2" y2="340" stroke="#90e48c" stroke-width="1.1" stroke-opacity="0.9"/>
<line x1="369.7" y1="190" x2="369.7" y2="340" stroke="#90e48c" stroke-width="1.1" stroke-opacity="0.9"/>
<path d="M364.1 197.3 V190.0 L365.4 188.8 H369.5 L370.8 190.0 V196.6 L368.9 195.8 L368.4 195.4 L367.5 193.6 L366.6 195.4 L366.0 195.8 Z" fill="#2ef02e"/>
<line x1="375.2" y1="190" x2="375.2" y2="340" stroke="#90e48c" stroke-width="1.1" stroke-opacity="0.9"/>
<line x1="379.8" y1="190" x2="379.8" y2="340" stroke="#90e48c" stroke-width="1.1" stroke-opacity="0.9"/>
<path d="M374.1 197.3 V190.0 L375.4 188.8 H379.6 L380.9 190.0 V196.6 L379.0 195.8 L378.4 195.4 L377.5 193.6 L376.6 195.4 L376.0 195.8 Z" fill="#2ef02e"/>
<line x1="385.3" y1="190" x2="385.3" y2="340" stroke="#90e48c" stroke-width="1.1" stroke-opacity="0.9"/>
<line x1="389.9" y1="190" x2="389.9" y2="340" stroke="#90e48c" stroke-width="1.1" stroke-opacity="0.9"/>
<path d="M384.2 197.3 V190.0 L385.5 188.8 H389.7 L391.0 190.0 V196.6 L389.1 195.8 L388.5 195.4 L387.6 193.6 L386.7 195.4 L386.1 195.8 Z" fill="#2ef02e"/>
<line x1="395.6" y1="190" x2="395.6" y2="340" stroke="#90e48c" stroke-width="1.1" stroke-opacity="0.9"/>
<line x1="400.2" y1="190" x2="400.2" y2="340" stroke="#90e48c" stroke-width="1.1" stroke-opacity="0.9"/>
<path d="M394.5 197.3 V190.0 L395.8 188.8 H400.0 L401.3 190.0 V196.6 L399.4 195.8 L398.8 195.4 L397.9 193.6 L397.0 195.4 L396.4 195.8 Z" fill="#2ef02e"/>
<line x1="405.9" y1="190" x2="405.9" y2="340" stroke="#90e48c" stroke-width="1.1" stroke-opacity="0.9"/>
<line x1="410.6" y1="190" x2="410.6" y2="340" stroke="#90e48c" stroke-width="1.1" stroke-opacity="0.9"/>
<path d="M404.8 197.3 V190.0 L406.1 188.8 H410.4 L411.7 190.0 V196.6 L409.8 195.8 L409.1 195.4 L408.2 193.6 L407.3 195.4 L406.7 195.8 Z" fill="#2ef02e"/>
<line x1="416.3" y1="190" x2="416.3" y2="340" stroke="#90e48c" stroke-width="1.1" stroke-opacity="0.9"/>
<line x1="421.1" y1="190" x2="421.1" y2="340" stroke="#90e48c" stroke-width="1.1" stroke-opacity="0.9"/>
<path d="M415.2 197.3 V190.0 L416.5 188.8 H420.9 L422.2 190.0 V196.6 L420.3 195.8 L419.6 195.4 L418.7 193.6 L417.8 195.4 L417.1 195.8 Z" fill="#2ef02e"/>
<line x1="426.9" y1="190" x2="426.9" y2="340" stroke="#90e48c" stroke-width="1.1" stroke-opacity="0.9"/>
<line x1="431.8" y1="190" x2="431.8" y2="340" stroke="#90e48c" stroke-width="1.1" stroke-opacity="0.9"/>
<path d="M425.8 197.3 V190.0 L427.1 188.8 H431.6 L432.9 190.0 V196.6 L431.0 195.8 L430.2 195.4 L429.3 193.6 L428.4 195.4 L427.7 195.8 Z" fill="#2ef02e"/>
<line x1="437.8" y1="190" x2="437.8" y2="340" stroke="#90e48c" stroke-width="1.1" stroke-opacity="0.9"/>
<line x1="442.7" y1="190" x2="442.7" y2="340" stroke="#90e48c" stroke-width="1.1" stroke-opacity="0.9"/>
<path d="M436.7 195.3 V190.0 L438.0 188.8 H442.5 L443.8 190.0 V194.6 L441.9 193.8 L441.2 193.4 L440.3 191.6 L439.4 193.4 L438.6 193.8 Z" fill="#2ef02e"/>
<line x1="449.0" y1="190" x2="449.0" y2="340" stroke="#90e48c" stroke-width="1.1" stroke-opacity="0.9"/>
<line x1="454.1" y1="190" x2="454.1" y2="340" stroke="#90e48c" stroke-width="1.1" stroke-opacity="0.9"/>
<path d="M447.9 195.3 V190.0 L449.2 188.8 H453.9 L455.2 190.0 V194.6 L453.3 193.8 L452.4 193.4 L451.5 191.6 L450.6 193.4 L449.8 193.8 Z" fill="#2ef02e"/>
<line x1="460.4" y1="190" x2="460.4" y2="340" stroke="#90e48c" stroke-width="1.1" stroke-opacity="0.9"/>
<line x1="465.7" y1="190" x2="465.7" y2="340" stroke="#90e48c" stroke-width="1.1" stroke-opacity="0.9"/>
<path d="M459.3 195.3 V190.0 L460.6 188.8 H465.5 L466.8 190.0 V194.6 L464.9 193.8 L464.0 193.4 L463.1 191.6 L462.2 193.4 L461.2 193.8 Z" fill="#2ef02e"/>
<line x1="472.0" y1="190" x2="472.0" y2="340" stroke="#90e48c" stroke-width="1.1" stroke-opacity="0.9"/>
<line x1="477.3" y1="190" x2="477.3" y2="340" stroke="#90e48c" stroke-width="1.1" stroke-opacity="0.9"/>
<path d="M470.9 195.3 V190.0 L472.2 188.8 H477.1 L478.4 190.0 V194.6 L476.5 193.8 L475.6 193.4 L474.7 191.6 L473.8 193.4 L472.8 193.8 Z" fill="#2ef02e"/>
<line x1="483.6" y1="190" x2="483.6" y2="340" stroke="#90e48c" stroke-width="1.1" stroke-opacity="0.9"/>
<line x1="488.9" y1="190" x2="488.9" y2="340" stroke="#90e48c" stroke-width="1.1" stroke-opacity="0.9"/>
<path d="M482.5 195.3 V190.0 L483.8 188.8 H488.7 L490.0 190.0 V194.6 L488.1 193.8 L487.2 193.4 L486.3 191.6 L485.4 193.4 L484.4 193.8 Z" fill="#2ef02e"/>
<line x1="495.2" y1="190" x2="495.2" y2="340" stroke="#90e48c" stroke-width="1.1" stroke-opacity="0.9"/>
<line x1="500.5" y1="190" x2="500.5" y2="340" stroke="#90e48c" stroke-width="1.1" stroke-opacity="0.9"/>
<path d="M494.1 195.3 V190.0 L495.4 188.8 H500.3 L501.6 190.0 V194.6 L499.7 193.8 L498.8 193.4 L497.9 191.6 L497.0 193.4 L496.0 193.8 Z" fill="#2ef02e"/>
<line x1="506.8" y1="190" x2="506.8" y2="340" stroke="#90e48c" stroke-width="1.1" stroke-opacity="0.9"/>
<line x1="512.1" y1="190" x2="512.1" y2="340" stroke="#90e48c" stroke-width="1.1" stroke-opacity="0.9"/>
<path d="M505.7 195.3 V190.0 L507.0 188.8 H511.9 L513.2 190.0 V194.6 L511.3 193.8 L510.4 193.4 L509.5 191.6 L508.6 193.4 L507.6 193.8 Z" fill="#2ef02e"/>
<line x1="518.4" y1="190" x2="518.4" y2="340" stroke="#90e48c" stroke-width="1.1" stroke-opacity="0.9"/>
<line x1="523.7" y1="190" x2="523.7" y2="340" stroke="#90e48c" stroke-width="1.1" stroke-opacity="0.9"/>
<path d="M517.3 195.3 V190.0 L518.6 188.8 H523.5 L524.8 190.0 V194.6 L522.9 193.8 L522.0 193.4 L521.1 191.6 L520.2 193.4 L519.2 193.8 Z" fill="#2ef02e"/>
<line x1="530.0" y1="190" x2="530.0" y2="340" stroke="#90e48c" stroke-width="1.1" stroke-opacity="0.9"/>
<line x1="535.3" y1="190" x2="535.3" y2="340" stroke="#90e48c" stroke-width="1.1" stroke-opacity="0.9"/>
<path d="M528.9 195.3 V190.0 L530.2 188.8 H535.1 L536.4 190.0 V194.6 L534.5 193.8 L533.6 193.4 L532.7 191.6 L531.8 193.4 L530.8 193.8 Z" fill="#2ef02e"/>
<line x1="541.6" y1="190" x2="541.6" y2="340" stroke="#90e48c" stroke-width="1.1" stroke-opacity="0.9"/>
<line x1="546.9" y1="190" x2="546.9" y2="340" stroke="#90e48c" stroke-width="1.1" stroke-opacity="0.9"/>
<path d="M540.5 195.3 V190.0 L541.8 188.8 H546.7 L548.0 190.0 V194.6 L546.1 193.8 L545.2 193.4 L544.3 191.6 L543.4 193.4 L542.4 193.8 Z" fill="#2ef02e"/>
<line x1="553.2" y1="190" x2="553.2" y2="340" stroke="#90e48c" stroke-width="1.1" stroke-opacity="0.9"/>
<line x1="558.5" y1="190" x2="558.5" y2="340" stroke="#90e48c" stroke-width="1.1" stroke-opacity="0.9"/>
<path d="M552.1 195.3 V190.0 L553.4 188.8 H558.3 L559.6 190.0 V194.6 L557.7 193.8 L556.8 193.4 L555.9 191.6 L555.0 193.4 L554.0 193.8 Z" fill="#2ef02e"/>
<line x1="564.8" y1="190" x2="564.8" y2="340" stroke="#90e48c" stroke-width="1.1" stroke-opacity="0.9"/>
<line x1="570.1" y1="190" x2="570.1" y2="340" stroke="#90e48c" stroke-width="1.1" stroke-opacity="0.9"/>
<path d="M563.7 195.3 V190.0 L565.0 188.8 H569.9 L571.2 190.0 V194.6 L569.3 193.8 L568.4 193.4 L567.5 191.6 L566.6 193.4 L565.6 193.8 Z" fill="#2ef02e"/>
<line x1="576.4" y1="190" x2="576.4" y2="340" stroke="#90e48c" stroke-width="1.1" stroke-opacity="0.9"/>
<line x1="581.7" y1="190" x2="581.7" y2="340" stroke="#90e48c" stroke-width="1.1" stroke-opacity="0.9"/>
<path d="M575.3 195.3 V190.0 L576.6 188.8 H581.5 L582.8 190.0 V194.6 L580.9 193.8 L580.0 193.4 L579.1 191.6 L578.2 193.4 L577.2 193.8 Z" fill="#2ef02e"/>
<line x1="588.0" y1="190" x2="588.0" y2="340" stroke="#90e48c" stroke-width="1.1" stroke-opacity="0.9"/>
<line x1="593.3" y1="190" x2="593.3" y2="340" stroke="#90e48c" stroke-width="1.1" stroke-opacity="0.9"/>
<path d="M586.9 195.3 V190.0 L588.2 188.8 H593.1 L594.4 190.0 V194.6 L592.5 193.8 L591.6 193.4 L590.7 191.6 L589.8 193.4 L588.8 193.8 Z" fill="#2ef02e"/>
<line x1="599.6" y1="190" x2="599.6" y2="340" stroke="#90e48c" stroke-width="1.1" stroke-opacity="0.9"/>
<line x1="604.7" y1="190" x2="604.7" y2="340" stroke="#90e48c" stroke-width="1.1" stroke-opacity="0.9"/>
<path d="M598.5 195.3 V190.0 L599.8 188.8 H604.5 L605.8 190.0 V194.6 L603.9 193.8 L603.0 193.4 L602.1 191.6 L601.2 193.4 L600.4 193.8 Z" fill="#2ef02e"/>
<line x1="610.8" y1="190" x2="610.8" y2="340" stroke="#90e48c" stroke-width="1.1" stroke-opacity="0.9"/>
<line x1="615.8" y1="190" x2="615.8" y2="340" stroke="#90e48c" stroke-width="1.1" stroke-opacity="0.9"/>
<path d="M609.7 195.3 V190.0 L611.0 188.8 H615.6 L616.9 190.0 V194.6 L615.0 193.8 L614.2 193.4 L613.3 191.6 L612.4 193.4 L611.6 193.8 Z" fill="#2ef02e"/>
<line x1="621.7" y1="190" x2="621.7" y2="340" stroke="#90e48c" stroke-width="1.1" stroke-opacity="0.9"/>
<line x1="626.4" y1="190" x2="626.4" y2="340" stroke="#90e48c" stroke-width="1.1" stroke-opacity="0.9"/>
<path d="M620.6 195.3 V190.0 L621.9 188.8 H626.2 L627.5 190.0 V194.6 L625.6 193.8 L625.0 193.4 L624.1 191.6 L623.2 193.4 L622.5 193.8 Z" fill="#2ef02e"/>
<line x1="632.1" y1="190" x2="632.1" y2="340" stroke="#90e48c" stroke-width="1.1" stroke-opacity="0.9"/>
<line x1="636.7" y1="190" x2="636.7" y2="340" stroke="#90e48c" stroke-width="1.1" stroke-opacity="0.9"/>
<path d="M631.0 195.3 V190.0 L632.3 188.8 H636.5 L637.8 190.0 V194.6 L635.9 193.8 L635.3 193.4 L634.4 191.6 L633.5 193.4 L632.9 193.8 Z" fill="#2ef02e"/>
<line x1="642.2" y1="190" x2="642.2" y2="340" stroke="#90e48c" stroke-width="1.1" stroke-opacity="0.9"/>
<line x1="646.6" y1="190" x2="646.6" y2="340" stroke="#90e48c" stroke-width="1.1" stroke-opacity="0.9"/>
<path d="M641.1 195.3 V190.0 L642.4 188.8 H646.4 L647.7 190.0 V194.6 L645.8 193.8 L645.3 193.4 L644.4 191.6 L643.5 193.4 L643.0 193.8 Z" fill="#2ef02e"/>
<line x1="651.9" y1="190" x2="651.9" y2="340" stroke="#90e48c" stroke-width="1.1" stroke-opacity="0.9"/>
<line x1="656.1" y1="190" x2="656.1" y2="340" stroke="#90e48c" stroke-width="1.1" stroke-opacity="0.9"/>
<path d="M650.8 195.3 V190.0 L652.1 188.8 H655.9 L657.2 190.0 V194.6 L655.3 193.8 L654.9 193.4 L654.0 191.6 L653.1 193.4 L652.7 193.8 Z" fill="#2ef02e"/>
<line x1="661.1" y1="190" x2="661.1" y2="340" stroke="#90e48c" stroke-width="1.1" stroke-opacity="0.9"/>
<line x1="665.1" y1="190" x2="665.1" y2="340" stroke="#90e48c" stroke-width="1.1" stroke-opacity="0.9"/>
<path d="M660.0 195.3 V190.0 L661.3 188.8 H664.9 L666.2 190.0 V194.6 L664.3 193.8 L664.0 193.4 L663.1 191.6 L662.2 193.4 L661.9 193.8 Z" fill="#2ef02e"/>
<line x1="669.9" y1="190" x2="669.9" y2="340" stroke="#90e48c" stroke-width="1.1" stroke-opacity="0.9"/>
<line x1="673.7" y1="190" x2="673.7" y2="340" stroke="#90e48c" stroke-width="1.1" stroke-opacity="0.9"/>
<path d="M668.8 195.3 V190.0 L670.1 188.8 H673.5 L674.8 190.0 V194.6 L672.9 193.8 L672.7 193.4 L671.8 191.6 L670.9 193.4 L670.7 193.8 Z" fill="#2ef02e"/>
<line x1="678.2" y1="190" x2="678.2" y2="340" stroke="#90e48c" stroke-width="1.1" stroke-opacity="0.9"/>
<line x1="681.8" y1="190" x2="681.8" y2="340" stroke="#90e48c" stroke-width="1.1" stroke-opacity="0.9"/>
<path d="M677.1 195.3 V190.0 L678.4 188.8 H681.6 L682.9 190.0 V194.6 L681.0 193.8 L680.9 193.4 L680.0 191.6 L679.1 193.4 L679.0 193.8 Z" fill="#2ef02e"/>
<line x1="686.1" y1="190" x2="686.1" y2="340" stroke="#90e48c" stroke-width="1.1" stroke-opacity="0.9"/>
<line x1="689.6" y1="190" x2="689.6" y2="340" stroke="#90e48c" stroke-width="1.1" stroke-opacity="0.9"/>
<path d="M685.0 195.3 V190.0 L686.3 188.8 H689.4 L690.7 190.0 V194.6 L688.8 193.8 L688.7 193.4 L687.8 191.6 L686.9 193.4 L686.9 193.8 Z" fill="#2ef02e"/>
<line x1="693.8" y1="190" x2="693.8" y2="340" stroke="#90e48c" stroke-width="1.1" stroke-opacity="0.9"/>
<line x1="697.3" y1="190" x2="697.3" y2="340" stroke="#90e48c" stroke-width="1.1" stroke-opacity="0.9"/>
<path d="M692.7 195.3 V190.0 L694.0 188.8 H697.1 L698.4 190.0 V194.6 L696.5 193.8 L696.5 193.4 L695.6 191.6 L694.7 193.4 L694.6 193.8 Z" fill="#2ef02e"/>
<line x1="701.5" y1="190" x2="701.5" y2="340" stroke="#90e48c" stroke-width="1.1" stroke-opacity="0.9"/>
<line x1="704.9" y1="190" x2="704.9" y2="340" stroke="#90e48c" stroke-width="1.1" stroke-opacity="0.9"/>
<path d="M700.4 195.3 V190.0 L701.7 188.8 H704.7 L706.0 190.0 V194.6 L704.1 193.8 L704.1 193.4 L703.2 191.6 L702.3 193.4 L702.3 193.8 Z" fill="#2ef02e"/>
<line x1="709.1" y1="190" x2="709.1" y2="340" stroke="#90e48c" stroke-width="1.1" stroke-opacity="0.9"/>
<line x1="712.5" y1="190" x2="712.5" y2="340" stroke="#90e48c" stroke-width="1.1" stroke-opacity="0.9"/>
<path d="M708.0 195.3 V190.0 L709.3 188.8 H712.3 L713.6 190.0 V194.6 L711.7 193.8 L711.7 193.4 L710.8 191.6 L709.9 193.4 L709.9 193.8 Z" fill="#2ef02e"/>
<line x1="716.6" y1="190" x2="716.6" y2="340" stroke="#90e48c" stroke-width="1.1" stroke-opacity="0.9"/>
<line x1="720.0" y1="190" x2="720.0" y2="340" stroke="#90e48c" stroke-width="1.1" stroke-opacity="0.9"/>
<path d="M715.5 195.3 V190.0 L716.8 188.8 H719.8 L721.1 190.0 V194.6 L719.2 193.8 L719.2 193.4 L718.3 191.6 L717.4 193.4 L717.4 193.8 Z" fill="#2ef02e"/>
<line x1="724.0" y1="190" x2="724.0" y2="340" stroke="#90e48c" stroke-width="1.1" stroke-opacity="0.9"/>
<line x1="727.4" y1="190" x2="727.4" y2="340" stroke="#90e48c" stroke-width="1.1" stroke-opacity="0.9"/>
<path d="M722.9 195.3 V190.0 L724.2 188.8 H727.2 L728.5 190.0 V194.6 L726.6 193.8 L726.6 193.4 L725.7 191.6 L724.8 193.4 L724.8 193.8 Z" fill="#2ef02e"/>
<line x1="731.4" y1="190" x2="731.4" y2="340" stroke="#90e48c" stroke-width="1.1" stroke-opacity="0.9"/>
<line x1="734.7" y1="190" x2="734.7" y2="340" stroke="#90e48c" stroke-width="1.1" stroke-opacity="0.9"/>
<path d="M730.3 195.3 V190.0 L731.6 188.8 H734.5 L735.8 190.0 V194.6 L733.9 193.8 L733.9 193.4 L733.0 191.6 L732.1 193.4 L732.2 193.8 Z" fill="#2ef02e"/>
<line x1="738.7" y1="190" x2="738.7" y2="340" stroke="#90e48c" stroke-width="1.1" stroke-opacity="0.9"/>
<line x1="741.9" y1="190" x2="741.9" y2="340" stroke="#90e48c" stroke-width="1.1" stroke-opacity="0.9"/>
<path d="M737.6 195.3 V190.0 L738.9 188.8 H741.7 L743.0 190.0 V194.6 L741.1 193.8 L741.2 193.4 L740.3 191.6 L739.4 193.4 L739.5 193.8 Z" fill="#2ef02e"/>
<line x1="745.9" y1="190" x2="745.9" y2="340" stroke="#90e48c" stroke-width="1.1" stroke-opacity="0.9"/>
<line x1="749.1" y1="190" x2="749.1" y2="340" stroke="#90e48c" stroke-width="1.1" stroke-opacity="0.9"/>
<path d="M744.8 195.3 V190.0 L746.1 188.8 H748.9 L750.2 190.0 V194.6 L748.3 193.8 L748.4 193.4 L747.5 191.6 L746.6 193.4 L746.7 193.8 Z" fill="#2ef02e"/>
<line x1="753.0" y1="190" x2="753.0" y2="340" stroke="#90e48c" stroke-width="1.1" stroke-opacity="0.9"/>
<line x1="756.2" y1="190" x2="756.2" y2="340" stroke="#90e48c" stroke-width="1.1" stroke-opacity="0.9"/>
<path d="M751.9 195.3 V190.0 L753.2 188.8 H756.0 L757.3 190.0 V194.6 L755.4 193.8 L755.5 193.4 L754.6 191.6 L753.7 193.4 L753.8 193.8 Z" fill="#2ef02e"/>
<line x1="760.1" y1="190" x2="760.1" y2="340" stroke="#90e48c" stroke-width="1.1" stroke-opacity="0.9"/>
<line x1="763.3" y1="190" x2="763.3" y2="340" stroke="#90e48c" stroke-width="1.1" stroke-opacity="0.9"/>
<path d="M759.0 195.3 V190.0 L760.3 188.8 H763.1 L764.4 190.0 V194.6 L762.5 193.8 L762.6 193.4 L761.7 191.6 L760.8 193.4 L760.9 193.8 Z" fill="#2ef02e"/>
<line x1="767.1" y1="190" x2="767.1" y2="340" stroke="#90e48c" stroke-width="1.1" stroke-opacity="0.9"/>
<line x1="770.3" y1="190" x2="770.3" y2="340" stroke="#90e48c" stroke-width="1.1" stroke-opacity="0.9"/>
<path d="M766.0 195.3 V190.0 L767.3 188.8 H770.1 L771.4 190.0 V194.6 L769.5 193.8 L769.6 193.4 L768.7 191.6 L767.8 193.4 L767.9 193.8 Z" fill="#2ef02e"/>
<line x1="774.1" y1="190" x2="774.1" y2="340" stroke="#90e48c" stroke-width="1.1" stroke-opacity="0.9"/>
<line x1="777.3" y1="190" x2="777.3" y2="340" stroke="#90e48c" stroke-width="1.1" stroke-opacity="0.9"/>
<path d="M773.0 195.3 V190.0 L774.3 188.8 H777.1 L778.4 190.0 V194.6 L776.5 193.8 L776.6 193.4 L775.7 191.6 L774.8 193.4 L774.9 193.8 Z" fill="#2ef02e"/>
<line x1="781.1" y1="190" x2="781.1" y2="340" stroke="#90e48c" stroke-width="1.1" stroke-opacity="0.9"/>
<line x1="784.2" y1="190" x2="784.2" y2="340" stroke="#90e48c" stroke-width="1.1" stroke-opacity="0.9"/>
<path d="M780.0 195.3 V190.0 L781.3 188.8 H784.0 L785.3 190.0 V194.6 L783.4 193.8 L783.6 193.4 L782.7 191.6 L781.8 193.4 L781.9 193.8 Z" fill="#2ef02e"/>
<line x1="788.1" y1="190" x2="788.1" y2="340" stroke="#90e48c" stroke-width="1.1" stroke-opacity="0.9"/>
<line x1="791.2" y1="190" x2="791.2" y2="340" stroke="#90e48c" stroke-width="1.1" stroke-opacity="0.9"/>
<path d="M787.0 195.3 V190.0 L788.3 188.8 H791.0 L792.3 190.0 V194.6 L790.4 193.8 L790.5 193.4 L789.6 191.6 L788.7 193.4 L788.9 193.8 Z" fill="#2ef02e"/>
<line x1="795.0" y1="190" x2="795.0" y2="340" stroke="#90e48c" stroke-width="1.1" stroke-opacity="0.9"/>
<line x1="798.2" y1="190" x2="798.2" y2="340" stroke="#90e48c" stroke-width="1.1" stroke-opacity="0.9"/>
<path d="M793.9 195.3 V190.0 L795.2 188.8 H798.0 L799.3 190.0 V194.6 L797.4 193.8 L797.5 193.4 L796.6 191.6 L795.7 193.4 L795.8 193.8 Z" fill="#2ef02e"/>
<line x1="802.0" y1="190" x2="802.0" y2="340" stroke="#90e48c" stroke-width="1.1" stroke-opacity="0.9"/>
<line x1="805.1" y1="190" x2="805.1" y2="340" stroke="#90e48c" stroke-width="1.1" stroke-opacity="0.9"/>
<path d="M800.9 195.3 V190.0 L802.2 188.8 H804.9 L806.2 190.0 V194.6 L804.3 193.8 L804.5 193.4 L803.6 191.6 L802.7 193.4 L802.8 193.8 Z" fill="#2ef02e"/>
<line x1="809.0" y1="190" x2="809.0" y2="340" stroke="#90e48c" stroke-width="1.1" stroke-opacity="0.9"/>
<line x1="812.1" y1="190" x2="812.1" y2="340" stroke="#90e48c" stroke-width="1.1" stroke-opacity="0.9"/>
<path d="M807.9 195.3 V190.0 L809.2 188.8 H811.9 L813.2 190.0 V194.6 L811.3 193.8 L811.4 193.4 L810.5 191.6 L809.6 193.4 L809.8 193.8 Z" fill="#2ef02e"/>
<line x1="815.9" y1="190" x2="815.9" y2="340" stroke="#90e48c" stroke-width="1.1" stroke-opacity="0.9"/>
<line x1="819.0" y1="190" x2="819.0" y2="340" stroke="#90e48c" stroke-width="1.1" stroke-opacity="0.9"/>
<path d="M814.8 195.3 V190.0 L816.1 188.8 H818.8 L820.1 190.0 V194.6 L818.2 193.8 L818.4 193.4 L817.5 191.6 L816.6 193.4 L816.7 193.8 Z" fill="#2ef02e"/>
<line x1="822.9" y1="190" x2="822.9" y2="340" stroke="#90e48c" stroke-width="1.1" stroke-opacity="0.9"/>
<line x1="826.0" y1="190" x2="826.0" y2="340" stroke="#90e48c" stroke-width="1.1" stroke-opacity="0.9"/>
<path d="M821.8 195.3 V190.0 L823.1 188.8 H825.8 L827.1 190.0 V194.6 L825.2 193.8 L825.3 193.4 L824.4 191.6 L823.5 193.4 L823.7 193.8 Z" fill="#2ef02e"/>
<line x1="829.8" y1="190" x2="829.8" y2="340" stroke="#90e48c" stroke-width="1.1" stroke-opacity="0.9"/>
<line x1="832.9" y1="190" x2="832.9" y2="340" stroke="#90e48c" stroke-width="1.1" stroke-opacity="0.9"/>
<path d="M828.7 195.3 V190.0 L830.0 188.8 H832.7 L834.0 190.0 V194.6 L832.1 193.8 L832.3 193.4 L831.4 191.6 L830.5 193.4 L830.6 193.8 Z" fill="#2ef02e"/>
<line x1="836.7" y1="190" x2="836.7" y2="340" stroke="#90e48c" stroke-width="1.1" stroke-opacity="0.9"/>
<line x1="839.8" y1="190" x2="839.8" y2="340" stroke="#90e48c" stroke-width="1.1" stroke-opacity="0.9"/>
<path d="M835.6 195.3 V190.0 L836.9 188.8 H839.6 L840.9 190.0 V194.6 L839.0 193.8 L839.2 193.4 L838.3 191.6 L837.4 193.4 L837.5 193.8 Z" fill="#2ef02e"/>
<line x1="843.7" y1="190" x2="843.7" y2="340" stroke="#90e48c" stroke-width="1.1" stroke-opacity="0.9"/>
<line x1="846.8" y1="190" x2="846.8" y2="340" stroke="#90e48c" stroke-width="1.1" stroke-opacity="0.9"/>
<path d="M842.6 195.3 V190.0 L843.9 188.8 H846.6 L847.9 190.0 V194.6 L846.0 193.8 L846.1 193.4 L845.2 191.6 L844.3 193.4 L844.5 193.8 Z" fill="#2ef02e"/>
<line x1="850.6" y1="190" x2="850.6" y2="340" stroke="#90e48c" stroke-width="1.1" stroke-opacity="0.9"/>
<line x1="853.7" y1="190" x2="853.7" y2="340" stroke="#90e48c" stroke-width="1.1" stroke-opacity="0.9"/>
<path d="M849.5 195.3 V190.0 L850.8 188.8 H853.5 L854.8 190.0 V194.6 L852.9 193.8 L853.0 193.4 L852.1 191.6 L851.2 193.4 L851.4 193.8 Z" fill="#2ef02e"/>
<line x1="857.5" y1="190" x2="857.5" y2="340" stroke="#90e48c" stroke-width="1.1" stroke-opacity="0.9"/>
<line x1="860.6" y1="190" x2="860.6" y2="340" stroke="#90e48c" stroke-width="1.1" stroke-opacity="0.9"/>
<path d="M856.4 195.3 V190.0 L857.7 188.8 H860.4 L861.7 190.0 V194.6 L859.8 193.8 L859.9 193.4 L859.0 191.6 L858.1 193.4 L858.3 193.8 Z" fill="#2ef02e"/>
<line x1="864.4" y1="190" x2="864.4" y2="340" stroke="#90e48c" stroke-width="1.1" stroke-opacity="0.9"/>
<line x1="867.5" y1="190" x2="867.5" y2="340" stroke="#90e48c" stroke-width="1.1" stroke-opacity="0.9"/>
<path d="M863.3 195.3 V190.0 L864.6 188.8 H867.3 L868.6 190.0 V194.6 L866.7 193.8 L866.8 193.4 L865.9 191.6 L865.0 193.4 L865.2 193.8 Z" fill="#2ef02e"/>
<line x1="871.3" y1="190" x2="871.3" y2="340" stroke="#90e48c" stroke-width="1.1" stroke-opacity="0.9"/>
<line x1="874.4" y1="190" x2="874.4" y2="340" stroke="#90e48c" stroke-width="1.1" stroke-opacity="0.9"/>
<path d="M870.2 195.3 V190.0 L871.5 188.8 H874.2 L875.5 190.0 V194.6 L873.6 193.8 L873.7 193.4 L872.8 191.6 L871.9 193.4 L872.1 193.8 Z" fill="#2ef02e"/>
<line x1="878.2" y1="190" x2="878.2" y2="340" stroke="#90e48c" stroke-width="1.1" stroke-opacity="0.9"/>
<line x1="881.3" y1="190" x2="881.3" y2="340" stroke="#90e48c" stroke-width="1.1" stroke-opacity="0.9"/>
<path d="M877.1 195.3 V190.0 L878.4 188.8 H881.1 L882.4 190.0 V194.6 L880.5 193.8 L880.6 193.4 L879.7 191.6 L878.8 193.4 L879.0 193.8 Z" fill="#2ef02e"/>
<line x1="885.0" y1="190" x2="885.0" y2="340" stroke="#90e48c" stroke-width="1.1" stroke-opacity="0.9"/>
<line x1="888.1" y1="190" x2="888.1" y2="340" stroke="#90e48c" stroke-width="1.1" stroke-opacity="0.9"/>
<path d="M883.9 195.3 V190.0 L885.2 188.8 H887.9 L889.2 190.0 V194.6 L887.3 193.8 L887.5 193.4 L886.6 191.6 L885.7 193.4 L885.8 193.8 Z" fill="#2ef02e"/>
<line x1="891.9" y1="190" x2="891.9" y2="340" stroke="#90e48c" stroke-width="1.1" stroke-opacity="0.9"/>
<line x1="895.0" y1="190" x2="895.0" y2="340" stroke="#90e48c" stroke-width="1.1" stroke-opacity="0.9"/>
<path d="M890.8 195.3 V190.0 L892.1 188.8 H894.8 L896.1 190.0 V194.6 L894.2 193.8 L894.4 193.4 L893.5 191.6 L892.6 193.4 L892.7 193.8 Z" fill="#2ef02e"/>
<line x1="898.8" y1="190" x2="898.8" y2="340" stroke="#90e48c" stroke-width="1.1" stroke-opacity="0.9"/>
<line x1="901.9" y1="190" x2="901.9" y2="340" stroke="#90e48c" stroke-width="1.1" stroke-opacity="0.9"/>
<path d="M897.7 195.3 V190.0 L899.0 188.8 H901.7 L903.0 190.0 V194.6 L901.1 193.8 L901.2 193.4 L900.3 191.6 L899.4 193.4 L899.6 193.8 Z" fill="#2ef02e"/>
<line x1="905.7" y1="190" x2="905.7" y2="340" stroke="#90e48c" stroke-width="1.1" stroke-opacity="0.9"/>
<line x1="908.7" y1="190" x2="908.7" y2="340" stroke="#90e48c" stroke-width="1.1" stroke-opacity="0.9"/>
<path d="M904.6 195.3 V190.0 L905.9 188.8 H908.5 L909.8 190.0 V194.6 L907.9 193.8 L908.1 193.4 L907.2 191.6 L906.3 193.4 L906.5 193.8 Z" fill="#2ef02e"/>
<line x1="912.5" y1="190" x2="912.5" y2="340" stroke="#90e48c" stroke-width="1.1" stroke-opacity="0.9"/>
<line x1="915.6" y1="190" x2="915.6" y2="340" stroke="#90e48c" stroke-width="1.1" stroke-opacity="0.9"/>
<path d="M911.4 195.3 V190.0 L912.7 188.8 H915.4 L916.7 190.0 V194.6 L914.8 193.8 L914.9 193.4 L914.0 191.6 L913.1 193.4 L913.3 193.8 Z" fill="#2ef02e"/>
<line x1="919.4" y1="190" x2="919.4" y2="340" stroke="#90e48c" stroke-width="1.1" stroke-opacity="0.9"/>
<line x1="922.4" y1="190" x2="922.4" y2="340" stroke="#90e48c" stroke-width="1.1" stroke-opacity="0.9"/>
<path d="M918.3 195.3 V190.0 L919.6 188.8 H922.2 L923.5 190.0 V194.6 L921.6 193.8 L921.8 193.4 L920.9 191.6 L920.0 193.4 L920.2 193.8 Z" fill="#2ef02e"/>
<line x1="926.2" y1="190" x2="926.2" y2="340" stroke="#90e48c" stroke-width="1.1" stroke-opacity="0.9"/>
<line x1="929.3" y1="190" x2="929.3" y2="340" stroke="#90e48c" stroke-width="1.1" stroke-opacity="0.9"/>
<path d="M925.1 195.3 V190.0 L926.4 188.8 H929.1 L930.4 190.0 V194.6 L928.5 193.8 L928.6 193.4 L927.7 191.6 L926.8 193.4 L927.0 193.8 Z" fill="#2ef02e"/>
<line x1="933.0" y1="190" x2="933.0" y2="340" stroke="#90e48c" stroke-width="1.1" stroke-opacity="0.9"/>
<line x1="936.1" y1="190" x2="936.1" y2="340" stroke="#90e48c" stroke-width="1.1" stroke-opacity="0.9"/>
<path d="M931.9 195.3 V190.0 L933.2 188.8 H935.9 L937.2 190.0 V194.6 L935.3 193.8 L935.5 193.4 L934.6 191.6 L933.7 193.4 L933.8 193.8 Z" fill="#2ef02e"/>
<line x1="939.9" y1="190" x2="939.9" y2="340" stroke="#90e48c" stroke-width="1.1" stroke-opacity="0.9"/>
<line x1="942.9" y1="190" x2="942.9" y2="340" stroke="#90e48c" stroke-width="1.1" stroke-opacity="0.9"/>
<path d="M938.8 195.3 V190.0 L940.1 188.8 H942.7 L944.0 190.0 V194.6 L942.1 193.8 L942.3 193.4 L941.4 191.6 L940.5 193.4 L940.7 193.8 Z" fill="#2ef02e"/>
<line x1="946.7" y1="190" x2="946.7" y2="340" stroke="#90e48c" stroke-width="1.1" stroke-opacity="0.9"/>
<line x1="949.7" y1="190" x2="949.7" y2="340" stroke="#90e48c" stroke-width="1.1" stroke-opacity="0.9"/>
<path d="M945.6 195.3 V190.0 L946.9 188.8 H949.5 L950.8 190.0 V194.6 L948.9 193.8 L949.1 193.4 L948.2 191.6 L947.3 193.4 L947.5 193.8 Z" fill="#2ef02e"/>
<line x1="953.5" y1="190" x2="953.5" y2="340" stroke="#90e48c" stroke-width="1.1" stroke-opacity="0.9"/>
<line x1="955.0" y1="190" x2="955.0" y2="340" stroke="#90e48c" stroke-width="1.1" stroke-opacity="0.9"/>
<path d="M952.4 195.3 V190.0 L953.7 188.8 H954.8 L956.1 190.0 V194.6 L954.2 193.8 L955.1 193.4 L954.2 191.6 L953.3 193.4 L954.3 193.8 Z" fill="#2ef02e"/>
</g>
<g opacity="0.9">
<polygon fill="#e6421a" points="258.0,246.5 260.0,246.1 262.0,246.3 264.0,246.8 266.0,246.9 268.0,246.8 270.0,246.4 272.0,246.8 274.0,246.1 276.0,246.2 278.0,245.7 280.0,245.9 282.0,246.7 284.0,246.5 286.0,246.7 288.0,246.1 290.0,246.2 292.0,246.8 294.0,246.1 296.0,246.5 298.0,246.4 300.0,245.9 302.0,246.6 304.0,246.3 306.0,246.0 308.0,245.7 310.0,246.4 312.0,246.7 314.0,246.9 316.0,246.0 318.0,245.8 320.0,246.1 322.0,246.2 324.0,245.9 326.0,246.3 328.0,246.8 330.0,246.1 332.0,245.9 334.0,246.4 336.0,246.9 338.0,246.7 340.0,246.8 342.0,246.7 344.0,246.4 346.0,246.8 348.0,246.2 350.0,245.9 352.0,246.6 354.0,246.5 356.0,245.8 358.0,246.7 360.0,246.6 362.0,246.2 364.0,246.9 366.0,246.5 368.0,245.8 370.0,246.3 372.0,246.1 374.0,245.8 376.0,245.9 378.0,246.4 380.0,246.8 382.0,246.8 384.0,246.6 386.0,246.5 388.0,246.9 390.0,246.8 392.0,246.9 394.0,246.2 396.0,246.6 398.0,246.5 400.0,245.9 402.0,246.3 404.0,246.8 406.0,246.5 408.0,245.9 410.0,246.9 412.0,246.3 414.0,246.2 416.0,246.3 418.0,245.9 420.0,246.6 422.0,246.7 424.0,246.3 426.0,246.5 428.0,245.9 430.0,245.9 432.0,245.9 434.0,246.6 436.0,246.5 438.0,246.9 440.0,246.6 442.0,245.8 444.0,245.8 446.0,245.8 448.0,246.6 450.0,246.7 452.0,246.2 454.0,245.9 456.0,246.1 458.0,246.8 460.0,245.8 462.0,246.0 464.0,246.7 466.0,246.5 468.0,245.7 470.0,246.4 472.0,246.0 474.0,246.7 476.0,245.8 478.0,246.7 480.0,245.7 482.0,246.5 484.0,246.7 486.0,245.7 488.0,246.3 490.0,246.4 492.0,245.9 494.0,246.6 496.0,246.6 498.0,246.6 500.0,246.7 502.0,246.5 504.0,246.2 506.0,246.4 508.0,246.3 510.0,246.3 512.0,246.4 514.0,246.9 516.0,246.7 518.0,246.0 520.0,246.5 522.0,246.2 524.0,246.8 526.0,246.6 528.0,246.0 530.0,246.2 532.0,245.8 534.0,246.2 536.0,246.3 538.0,246.4 540.0,246.3 542.0,246.1 544.0,245.8 546.0,246.2 548.0,245.9 550.0,246.8 552.0,246.8 554.0,246.8 556.0,246.0 558.0,246.7 560.0,246.1 562.0,245.8 564.0,246.6 566.0,246.4 568.0,245.7 570.0,246.7 572.0,246.3 574.0,246.7 576.0,246.0 578.0,246.2 580.0,246.9 582.0,246.2 584.0,246.8 586.0,246.0 588.0,246.8 590.0,246.9 592.0,246.6 594.0,246.4 596.0,245.9 598.0,246.7 600.0,246.2 602.0,246.8 604.0,246.1 606.0,246.8 608.0,246.1 610.0,246.8 612.0,246.8 614.0,246.4 616.0,246.2 618.0,246.6 620.0,246.3 622.0,246.8 624.0,246.8 626.0,246.5 628.0,246.0 630.0,246.3 632.0,246.5 634.0,246.6 636.0,246.0 638.0,246.7 640.0,245.8 642.0,245.9 644.0,246.3 646.0,246.4 648.0,246.1 650.0,246.5 652.0,246.1 654.0,246.4 656.0,246.8 658.0,246.8 660.0,246.6 662.0,246.8 664.0,245.9 666.0,246.6 668.0,246.5 670.0,246.7 672.0,246.6 674.0,245.7 676.0,246.6 678.0,246.5 680.0,246.9 682.0,246.3 684.0,246.7 686.0,246.9 688.0,246.8 690.0,246.8 692.0,246.5 694.0,246.2 696.0,246.0 698.0,246.0 700.0,246.4 702.0,245.7 704.0,246.0 706.0,246.8 708.0,245.8 710.0,246.0 712.0,246.7 714.0,246.3 716.0,245.9 718.0,246.2 720.0,246.1 722.0,246.6 724.0,246.7 726.0,246.8 728.0,246.2 730.0,246.1 732.0,246.3 734.0,245.9 736.0,246.3 738.0,246.1 740.0,246.0 742.0,246.8 744.0,246.0 746.0,246.0 748.0,246.3 750.0,246.3 752.0,246.0 754.0,246.1 756.0,246.7 758.0,246.0 760.0,246.2 762.0,246.8 764.0,246.1 766.0,246.1 768.0,246.3 770.0,246.3 772.0,245.8 774.0,245.7 776.0,246.9 778.0,245.9 780.0,246.4 782.0,246.6 784.0,246.6 786.0,246.7 788.0,245.8 790.0,245.9 792.0,245.8 794.0,246.6 796.0,246.3 798.0,246.9 800.0,246.4 802.0,246.7 804.0,246.5 806.0,246.9 808.0,245.9 810.0,245.8 812.0,245.8 814.0,246.5 816.0,245.7 818.0,246.5 820.0,246.6 822.0,246.8 824.0,246.6 826.0,246.6 828.0,246.3 830.0,246.5 832.0,245.8 834.0,246.1 836.0,245.8 838.0,246.0 840.0,246.0 842.0,246.0 844.0,246.6 846.0,245.8 848.0,246.3 850.0,246.5 852.0,245.7 854.0,246.1 856.0,246.2 858.0,246.7 860.0,246.7 862.0,246.3 864.0,245.8 866.0,246.4 868.0,246.7 870.0,246.5 872.0,246.6 874.0,246.2 876.0,246.0 878.0,246.4 880.0,246.4 882.0,246.8 884.0,245.7 886.0,246.3 888.0,245.9 890.0,246.6 892.0,246.4 894.0,245.8 896.0,245.9 898.0,246.9 900.0,245.8 902.0,246.2 904.0,246.4 906.0,245.9 908.0,245.7 910.0,246.8 912.0,246.3 914.0,245.8 916.0,246.1 918.0,246.4 920.0,246.9 922.0,246.6 924.0,246.1 926.0,246.7 928.0,246.1 930.0,246.8 932.0,246.3 934.0,246.4 936.0,246.2 938.0,246.5 940.0,245.7 942.0,245.8 944.0,246.6 946.0,245.7 948.0,246.5 950.0,246.3 952.0,246.4 954.0,246.1 956.0,246.6 956.0,251.1 954.0,252.2 952.0,251.4 950.0,251.9 948.0,251.1 946.0,251.9 944.0,251.4 942.0,251.7 940.0,251.9 938.0,251.7 936.0,251.1 934.0,251.4 932.0,251.8 930.0,251.2 928.0,251.9 926.0,251.4 924.0,251.5 922.0,252.2 920.0,252.0 918.0,251.8 916.0,252.0 914.0,252.0 912.0,251.9 910.0,251.3 908.0,251.4 906.0,252.1 904.0,252.2 902.0,251.1 900.0,251.7 898.0,252.0 896.0,251.1 894.0,252.1 892.0,251.6 890.0,251.4 888.0,251.4 886.0,251.9 884.0,251.3 882.0,251.4 880.0,251.5 878.0,251.7 876.0,251.6 874.0,252.2 872.0,251.4 870.0,251.2 868.0,251.2 866.0,251.3 864.0,252.3 862.0,251.4 860.0,252.2 858.0,251.3 856.0,251.6 854.0,251.5 852.0,251.4 850.0,252.0 848.0,251.5 846.0,251.3 844.0,251.2 842.0,251.9 840.0,251.6 838.0,251.2 836.0,251.8 834.0,252.2 832.0,252.1 830.0,252.2 828.0,251.3 826.0,251.4 824.0,252.2 822.0,252.1 820.0,251.2 818.0,251.6 816.0,251.8 814.0,251.6 812.0,251.4 810.0,252.0 808.0,251.2 806.0,252.0 804.0,252.1 802.0,251.5 800.0,251.5 798.0,251.7 796.0,251.1 794.0,252.2 792.0,251.9 790.0,251.7 788.0,251.3 786.0,251.7 784.0,251.8 782.0,252.2 780.0,251.4 778.0,252.3 776.0,251.7 774.0,252.2 772.0,251.3 770.0,251.2 768.0,251.7 766.0,251.4 764.0,251.9 762.0,251.4 760.0,251.1 758.0,251.5 756.0,251.4 754.0,251.2 752.0,251.8 750.0,251.9 748.0,251.6 746.0,252.3 744.0,251.3 742.0,251.4 740.0,251.4 738.0,251.2 736.0,251.7 734.0,252.0 732.0,251.1 730.0,251.9 728.0,251.9 726.0,252.1 724.0,251.5 722.0,251.1 720.0,251.9 718.0,252.2 716.0,252.1 714.0,252.1 712.0,251.7 710.0,252.1 708.0,251.9 706.0,252.1 704.0,251.9 702.0,251.3 700.0,251.5 698.0,252.2 696.0,251.9 694.0,251.7 692.0,251.4 690.0,251.1 688.0,251.6 686.0,251.4 684.0,251.7 682.0,251.7 680.0,251.6 678.0,251.5 676.0,252.3 674.0,251.8 672.0,252.3 670.0,251.6 668.0,251.7 666.0,251.4 664.0,251.9 662.0,252.1 660.0,251.3 658.0,252.0 656.0,251.3 654.0,251.5 652.0,251.9 650.0,252.1 648.0,252.3 646.0,251.7 644.0,252.1 642.0,251.6 640.0,251.2 638.0,251.7 636.0,251.8 634.0,251.1 632.0,251.1 630.0,251.3 628.0,251.4 626.0,251.5 624.0,251.3 622.0,251.3 620.0,251.4 618.0,251.3 616.0,252.2 614.0,251.5 612.0,252.1 610.0,252.1 608.0,252.1 606.0,252.2 604.0,251.6 602.0,251.2 600.0,251.9 598.0,252.2 596.0,251.4 594.0,252.2 592.0,251.3 590.0,252.0 588.0,251.4 586.0,252.3 584.0,252.3 582.0,251.7 580.0,251.5 578.0,251.6 576.0,251.1 574.0,251.5 572.0,251.5 570.0,251.6 568.0,252.1 566.0,251.7 564.0,252.2 562.0,252.3 560.0,251.3 558.0,252.0 556.0,252.2 554.0,251.9 552.0,251.4 550.0,251.6 548.0,251.3 546.0,252.2 544.0,251.4 542.0,252.2 540.0,252.2 538.0,251.7 536.0,251.9 534.0,251.7 532.0,251.6 530.0,252.0 528.0,251.7 526.0,251.4 524.0,251.8 522.0,252.0 520.0,251.7 518.0,251.8 516.0,251.7 514.0,252.1 512.0,251.3 510.0,251.1 508.0,251.7 506.0,252.2 504.0,252.2 502.0,251.6 500.0,252.2 498.0,251.6 496.0,251.8 494.0,251.5 492.0,251.4 490.0,252.1 488.0,252.2 486.0,251.9 484.0,251.1 482.0,251.8 480.0,251.9 478.0,252.1 476.0,252.1 474.0,251.3 472.0,251.3 470.0,252.2 468.0,251.6 466.0,252.1 464.0,252.0 462.0,251.7 460.0,252.0 458.0,251.9 456.0,252.1 454.0,251.7 452.0,252.2 450.0,251.3 448.0,251.4 446.0,251.5 444.0,252.3 442.0,251.6 440.0,251.9 438.0,251.4 436.0,251.1 434.0,251.7 432.0,252.0 430.0,252.1 428.0,252.3 426.0,251.4 424.0,252.0 422.0,252.0 420.0,251.5 418.0,251.9 416.0,252.3 414.0,251.1 412.0,251.3 410.0,252.2 408.0,251.3 406.0,251.4 404.0,251.2 402.0,251.7 400.0,252.3 398.0,251.2 396.0,251.5 394.0,251.3 392.0,252.1 390.0,251.5 388.0,251.3 386.0,251.2 384.0,251.3 382.0,251.2 380.0,251.9 378.0,251.6 376.0,252.1 374.0,252.0 372.0,251.2 370.0,251.8 368.0,251.9 366.0,251.8 364.0,251.6 362.0,251.4 360.0,251.7 358.0,251.4 356.0,251.3 354.0,252.2 352.0,251.6 350.0,252.1 348.0,252.2 346.0,251.6 344.0,252.1 342.0,251.4 340.0,252.0 338.0,251.2 336.0,251.7 334.0,251.9 332.0,251.4 330.0,252.3 328.0,251.9 326.0,251.9 324.0,252.2 322.0,251.6 320.0,251.8 318.0,251.5 316.0,251.8 314.0,251.9 312.0,251.7 310.0,252.0 308.0,251.2 306.0,251.4 304.0,252.2 302.0,251.8 300.0,251.9 298.0,251.5 296.0,251.8 294.0,251.6 292.0,251.3 290.0,251.2 288.0,251.5 286.0,251.8 284.0,252.1 282.0,251.2 280.0,251.4 278.0,251.2 276.0,251.6 274.0,252.2 272.0,251.4 270.0,252.1 268.0,251.2 266.0,251.6 264.0,251.7 262.0,251.5 260.0,251.2 258.0,251.3"/>
<polygon fill="#18f0c8" points="258.0,272.4 260.0,272.0 262.0,271.9 264.0,272.2 266.0,271.7 268.0,271.9 270.0,272.5 272.0,272.4 274.0,272.2 276.0,271.2 278.0,270.7 280.0,271.3 282.0,271.2 284.0,271.3 286.0,271.3 288.0,270.5 290.0,270.7 292.0,270.5 294.0,271.2 296.0,270.7 298.0,270.7 300.0,271.0 302.0,271.2 304.0,271.1 306.0,270.4 308.0,270.4 310.0,271.0 312.0,270.6 314.0,271.4 316.0,271.0 318.0,271.2 320.0,270.5 322.0,271.0 324.0,270.6 326.0,271.4 328.0,270.5 330.0,270.7 332.0,271.1 334.0,270.4 336.0,271.1 338.0,271.1 340.0,271.4 342.0,270.5 344.0,270.5 346.0,271.2 348.0,270.4 350.0,271.0 352.0,271.0 354.0,270.5 356.0,270.6 358.0,270.6 360.0,270.8 362.0,271.1 364.0,270.6 366.0,271.2 368.0,271.2 370.0,271.4 372.0,271.1 374.0,270.5 376.0,271.1 378.0,271.3 380.0,270.7 382.0,271.2 384.0,270.8 386.0,270.7 388.0,270.7 390.0,270.6 392.0,270.8 394.0,270.7 396.0,271.2 398.0,271.2 400.0,270.8 402.0,271.0 404.0,270.9 406.0,270.6 408.0,270.4 410.0,270.9 412.0,270.6 414.0,271.4 416.0,271.3 418.0,270.4 420.0,270.5 422.0,270.5 424.0,271.1 426.0,270.5 428.0,270.8 430.0,271.2 432.0,271.3 434.0,271.1 436.0,270.7 438.0,271.4 440.0,270.7 442.0,271.1 444.0,270.6 446.0,271.3 448.0,271.0 450.0,270.8 452.0,271.2 454.0,271.0 456.0,271.1 458.0,271.1 460.0,271.0 462.0,270.5 464.0,271.0 466.0,270.7 468.0,271.4 470.0,271.0 472.0,271.0 474.0,270.9 476.0,271.4 478.0,270.8 480.0,271.3 482.0,271.0 484.0,271.3 486.0,270.9 488.0,271.3 490.0,270.6 492.0,271.2 494.0,270.5 496.0,270.9 498.0,270.5 500.0,270.5 502.0,270.6 504.0,270.6 506.0,271.0 508.0,270.6 510.0,271.2 512.0,270.9 514.0,271.3 516.0,270.7 518.0,271.4 520.0,270.6 522.0,270.6 524.0,270.8 526.0,270.8 528.0,271.0 530.0,271.0 532.0,271.0 534.0,271.4 536.0,270.9 538.0,270.6 540.0,270.9 542.0,270.9 544.0,271.3 546.0,271.3 548.0,270.9 550.0,270.8 552.0,270.7 554.0,270.9 556.0,270.9 558.0,270.4 560.0,270.5 562.0,270.7 564.0,271.2 566.0,270.9 568.0,270.5 570.0,270.6 572.0,271.3 574.0,270.6 576.0,270.5 578.0,270.6 580.0,270.9 582.0,271.2 584.0,270.9 586.0,271.4 588.0,271.2 590.0,270.7 592.0,271.2 594.0,271.3 596.0,270.8 598.0,270.5 600.0,270.8 602.0,271.3 604.0,270.8 606.0,270.6 608.0,270.4 610.0,271.0 612.0,271.0 614.0,270.7 616.0,270.6 618.0,270.8 620.0,270.8 622.0,271.1 624.0,271.4 626.0,270.8 628.0,270.9 630.0,271.3 632.0,270.7 634.0,271.4 636.0,271.3 638.0,271.2 640.0,270.8 642.0,270.8 644.0,271.3 646.0,271.2 648.0,271.3 650.0,270.5 652.0,271.0 654.0,271.4 656.0,270.8 658.0,270.8 660.0,270.5 662.0,271.2 664.0,271.4 666.0,271.0 668.0,271.3 670.0,271.4 672.0,270.5 674.0,271.2 676.0,270.9 678.0,270.6 680.0,271.1 682.0,271.4 684.0,270.6 686.0,271.4 688.0,270.7 690.0,270.7 692.0,271.2 694.0,271.2 696.0,271.1 698.0,270.7 700.0,270.7 702.0,270.8 704.0,270.6 706.0,271.1 708.0,270.4 710.0,270.5 712.0,271.1 714.0,270.7 716.0,270.7 718.0,270.5 720.0,271.2 722.0,270.8 724.0,270.7 726.0,270.9 728.0,270.7 730.0,271.0 732.0,270.8 734.0,271.2 736.0,271.3 738.0,271.3 740.0,271.3 742.0,271.1 744.0,271.4 746.0,270.7 748.0,270.7 750.0,271.3 752.0,271.0 754.0,270.6 756.0,271.3 758.0,270.5 760.0,271.3 762.0,271.3 764.0,270.6 766.0,270.8 768.0,270.8 770.0,271.3 772.0,270.6 774.0,271.1 776.0,271.4 778.0,271.1 780.0,271.0 782.0,270.4 784.0,270.5 786.0,271.4 788.0,271.0 790.0,271.1 792.0,270.9 794.0,270.5 796.0,270.6 798.0,271.4 800.0,270.6 802.0,271.4 804.0,270.9 806.0,271.2 808.0,271.1 810.0,271.1 812.0,271.1 814.0,270.7 816.0,271.3 818.0,271.3 820.0,270.7 822.0,270.8 824.0,271.0 826.0,270.5 828.0,270.5 830.0,271.2 832.0,270.5 834.0,271.0 836.0,271.2 838.0,270.9 840.0,270.6 842.0,271.1 844.0,271.2 846.0,270.7 848.0,271.2 850.0,270.6 852.0,271.3 854.0,270.5 856.0,271.2 858.0,270.7 860.0,271.2 862.0,271.2 864.0,270.9 866.0,271.1 868.0,270.4 870.0,271.3 872.0,271.3 874.0,270.4 876.0,270.7 878.0,271.2 880.0,271.3 882.0,271.0 884.0,271.0 886.0,270.7 888.0,270.8 890.0,271.3 892.0,271.0 894.0,270.5 896.0,270.8 898.0,271.0 900.0,270.7 902.0,270.6 904.0,270.5 906.0,270.8 908.0,271.1 910.0,271.3 912.0,270.6 914.0,270.8 916.0,271.0 918.0,270.8 920.0,270.7 922.0,271.2 924.0,270.6 926.0,270.9 928.0,271.4 930.0,271.2 932.0,270.5 934.0,271.3 936.0,270.9 938.0,270.9 940.0,270.6 942.0,271.0 944.0,271.2 946.0,271.0 948.0,271.3 950.0,271.0 952.0,271.1 954.0,271.4 956.0,271.0 956.0,275.7 954.0,275.4 952.0,275.4 950.0,275.1 948.0,276.0 946.0,275.8 944.0,275.7 942.0,275.9 940.0,275.5 938.0,275.6 936.0,275.7 934.0,275.6 932.0,275.5 930.0,275.8 928.0,275.5 926.0,276.0 924.0,275.4 922.0,275.7 920.0,275.9 918.0,275.4 916.0,275.5 914.0,275.3 912.0,275.7 910.0,275.4 908.0,275.6 906.0,275.5 904.0,275.7 902.0,275.7 900.0,275.9 898.0,275.2 896.0,275.7 894.0,275.4 892.0,275.7 890.0,275.6 888.0,275.5 886.0,275.5 884.0,275.8 882.0,275.0 880.0,275.2 878.0,275.6 876.0,275.4 874.0,275.8 872.0,275.4 870.0,276.0 868.0,275.7 866.0,275.2 864.0,275.2 862.0,275.3 860.0,275.2 858.0,275.8 856.0,275.3 854.0,275.2 852.0,275.5 850.0,275.6 848.0,275.4 846.0,275.7 844.0,275.8 842.0,275.3 840.0,275.6 838.0,275.8 836.0,275.5 834.0,275.9 832.0,275.5 830.0,275.3 828.0,275.0 826.0,275.1 824.0,275.4 822.0,275.4 820.0,275.8 818.0,275.8 816.0,275.6 814.0,275.5 812.0,275.2 810.0,275.9 808.0,275.8 806.0,275.5 804.0,275.8 802.0,275.5 800.0,276.0 798.0,275.2 796.0,275.2 794.0,275.1 792.0,275.2 790.0,275.7 788.0,275.8 786.0,275.4 784.0,275.6 782.0,275.5 780.0,275.3 778.0,275.7 776.0,275.3 774.0,275.4 772.0,275.2 770.0,275.1 768.0,275.3 766.0,275.8 764.0,275.8 762.0,275.0 760.0,275.2 758.0,275.9 756.0,275.9 754.0,275.9 752.0,275.8 750.0,275.6 748.0,275.7 746.0,275.6 744.0,275.0 742.0,275.1 740.0,275.9 738.0,275.0 736.0,275.9 734.0,275.6 732.0,275.3 730.0,275.7 728.0,275.9 726.0,275.8 724.0,276.0 722.0,275.7 720.0,275.9 718.0,275.3 716.0,275.3 714.0,275.9 712.0,275.2 710.0,275.0 708.0,275.2 706.0,275.6 704.0,275.5 702.0,275.4 700.0,275.3 698.0,275.8 696.0,275.7 694.0,275.0 692.0,275.1 690.0,275.5 688.0,275.5 686.0,275.8 684.0,275.7 682.0,275.9 680.0,275.3 678.0,275.2 676.0,275.6 674.0,275.6 672.0,275.1 670.0,275.6 668.0,275.8 666.0,275.2 664.0,275.5 662.0,275.9 660.0,275.7 658.0,275.4 656.0,275.4 654.0,275.6 652.0,275.3 650.0,275.8 648.0,275.6 646.0,275.1 644.0,275.9 642.0,275.5 640.0,275.2 638.0,275.6 636.0,275.4 634.0,275.4 632.0,275.0 630.0,275.2 628.0,275.9 626.0,275.4 624.0,275.1 622.0,275.0 620.0,275.7 618.0,276.0 616.0,275.3 614.0,275.0 612.0,275.2 610.0,275.8 608.0,275.6 606.0,275.3 604.0,275.4 602.0,276.0 600.0,275.9 598.0,275.6 596.0,275.4 594.0,275.5 592.0,275.8 590.0,275.9 588.0,275.9 586.0,275.2 584.0,275.3 582.0,275.3 580.0,275.9 578.0,275.1 576.0,275.3 574.0,275.2 572.0,275.4 570.0,275.9 568.0,275.2 566.0,276.0 564.0,276.0 562.0,275.8 560.0,276.0 558.0,275.1 556.0,275.4 554.0,275.1 552.0,275.8 550.0,275.1 548.0,275.0 546.0,275.4 544.0,275.4 542.0,275.1 540.0,275.2 538.0,275.8 536.0,275.2 534.0,275.6 532.0,275.4 530.0,275.7 528.0,275.6 526.0,275.3 524.0,275.6 522.0,275.1 520.0,275.0 518.0,275.6 516.0,275.9 514.0,275.2 512.0,275.4 510.0,275.4 508.0,275.2 506.0,275.8 504.0,275.2 502.0,275.2 500.0,275.6 498.0,275.4 496.0,275.1 494.0,276.0 492.0,275.1 490.0,276.0 488.0,275.5 486.0,275.9 484.0,275.3 482.0,275.5 480.0,275.6 478.0,275.9 476.0,275.6 474.0,275.2 472.0,275.9 470.0,275.8 468.0,275.9 466.0,275.2 464.0,275.2 462.0,276.0 460.0,275.4 458.0,275.6 456.0,276.0 454.0,275.3 452.0,275.7 450.0,275.1 448.0,275.6 446.0,275.1 444.0,275.5 442.0,275.2 440.0,275.2 438.0,275.3 436.0,275.2 434.0,275.6 432.0,275.2 430.0,275.4 428.0,275.6 426.0,275.1 424.0,275.8 422.0,275.4 420.0,275.4 418.0,275.6 416.0,275.2 414.0,275.3 412.0,275.9 410.0,275.8 408.0,275.1 406.0,275.7 404.0,275.2 402.0,276.0 400.0,275.3 398.0,275.9 396.0,275.2 394.0,275.2 392.0,275.4 390.0,275.3 388.0,275.1 386.0,275.8 384.0,275.7 382.0,275.4 380.0,275.4 378.0,275.5 376.0,275.1 374.0,276.0 372.0,276.0 370.0,275.6 368.0,275.1 366.0,275.8 364.0,275.1 362.0,275.4 360.0,275.3 358.0,275.8 356.0,275.7 354.0,275.2 352.0,275.5 350.0,275.3 348.0,276.0 346.0,275.5 344.0,275.0 342.0,275.6 340.0,275.8 338.0,275.3 336.0,275.7 334.0,275.6 332.0,275.3 330.0,275.9 328.0,275.3 326.0,275.1 324.0,275.0 322.0,275.8 320.0,275.0 318.0,275.4 316.0,275.9 314.0,275.5 312.0,275.4 310.0,275.8 308.0,275.2 306.0,275.1 304.0,275.4 302.0,275.0 300.0,275.3 298.0,275.4 296.0,275.0 294.0,275.9 292.0,275.3 290.0,276.0 288.0,275.9 286.0,275.4 284.0,275.1 282.0,276.0 280.0,275.4 278.0,275.9 276.0,275.4 274.0,276.5 272.0,277.3 270.0,277.1 268.0,276.5 266.0,276.6 264.0,276.5 262.0,277.0 260.0,276.5 258.0,276.7"/>
</g>
<rect x="259.5" y="189" width="5" height="7" fill="#2ef02e"/>
<line x1="534" y1="118" x2="534" y2="190" stroke="#40e040" stroke-width="1.2"/>
<line x1="407" y1="165" x2="407" y2="190" stroke="#40e040" stroke-width="1.2"/>
<line x1="320" y1="196" x2="320" y2="212" stroke="#40e040" stroke-width="1.2"/>
<polygon fill="#f01818" points="120.0,243.9 122.0,244.0 124.0,243.3 126.0,244.0 128.0,243.9 130.0,244.1 132.0,243.4 134.0,243.8 136.0,244.0 138.0,243.9 140.0,243.4 142.0,243.8 144.0,243.7 146.0,243.4 148.0,243.4 150.0,243.9 152.0,243.8 154.0,244.2 156.0,244.0 158.0,243.9 160.0,243.8 162.0,243.6 164.0,243.3 166.0,244.2 168.0,243.3 170.0,244.1 172.0,243.6 174.0,244.2 176.0,243.6 178.0,244.1 180.0,244.0 182.0,243.9 184.0,243.3 186.0,244.1 188.0,243.6 190.0,243.6 192.0,243.5 194.0,244.1 196.0,243.7 196.0,250.5 194.0,250.4 192.0,250.6 190.0,250.6 188.0,250.5 186.0,250.6 184.0,250.5 182.0,249.9 180.0,250.5 178.0,249.9 176.0,250.0 174.0,250.7 172.0,249.8 170.0,250.6 168.0,250.5 166.0,250.6 164.0,250.6 162.0,250.1 160.0,250.4 158.0,250.2 156.0,250.0 154.0,250.5 152.0,249.9 150.0,250.0 148.0,250.0 146.0,250.1 144.0,249.9 142.0,250.0 140.0,250.6 138.0,250.4 136.0,250.7 134.0,250.3 132.0,250.4 130.0,250.5 128.0,250.0 126.0,250.6 124.0,250.3 122.0,250.5 120.0,250.0"/>
<polygon fill="#18e8f0" points="120.0,268.4 122.0,268.2 124.0,268.6 126.0,268.3 128.0,268.3 130.0,268.3 132.0,268.3 134.0,268.8 136.0,268.3 138.0,268.1 140.0,268.4 142.0,267.8 144.0,268.2 146.0,268.8 148.0,268.1 150.0,268.5 152.0,268.3 154.0,267.9 156.0,268.1 158.0,268.5 160.0,268.4 162.0,268.3 164.0,268.6 166.0,268.4 168.0,268.0 170.0,268.0 172.0,268.3 174.0,268.3 176.0,268.1 178.0,268.5 180.0,268.5 182.0,268.2 184.0,268.8 186.0,267.9 188.0,268.8 190.0,268.8 192.0,267.9 194.0,268.1 196.0,267.9 196.0,274.4 194.0,274.6 192.0,274.4 190.0,274.0 188.0,274.1 186.0,274.3 184.0,274.5 182.0,274.6 180.0,274.4 178.0,274.1 176.0,274.6 174.0,274.8 172.0,274.1 170.0,274.2 168.0,274.1 166.0,274.4 164.0,274.2 162.0,274.6 160.0,274.3 158.0,274.7 156.0,274.4 154.0,273.8 152.0,274.3 150.0,274.8 148.0,274.7 146.0,274.4 144.0,274.4 142.0,273.9 140.0,274.2 138.0,274.6 136.0,274.4 134.0,274.6 132.0,274.7 130.0,274.3 128.0,273.9 126.0,273.9 124.0,273.9 122.0,274.1 120.0,274.7"/>
<polygon fill="#20e828" points="120.0,478.8 122.0,478.7 124.0,478.7 126.0,478.7 128.0,478.6 130.0,479.1 132.0,478.6 134.0,478.7 136.0,478.6 138.0,478.8 140.0,479.0 142.0,479.0 144.0,478.7 146.0,479.2 148.0,479.2 150.0,478.6 152.0,478.5 154.0,479.2 156.0,478.8 158.0,478.5 160.0,478.9 162.0,478.7 164.0,479.1 166.0,479.2 168.0,479.2 170.0,479.2 172.0,479.1 174.0,478.7 176.0,478.7 178.0,479.2 180.0,478.7 182.0,478.7 184.0,478.7 186.0,478.9 188.0,479.0 190.0,478.7 192.0,479.2 194.0,478.6 196.0,479.0 198.0,479.1 198.0,484.4 196.0,484.3 194.0,483.8 192.0,484.3 190.0,483.8 188.0,484.5 186.0,484.5 184.0,484.3 182.0,483.8 180.0,484.4 178.0,484.4 176.0,483.9 174.0,483.9 172.0,483.8 170.0,484.4 168.0,484.5 166.0,484.3 164.0,483.8 162.0,483.9 160.0,483.8 158.0,484.1 156.0,484.5 154.0,484.1 152.0,484.1 150.0,484.2 148.0,483.8 146.0,484.2 144.0,484.5 142.0,484.1 140.0,484.1 138.0,484.0 136.0,484.4 134.0,484.0 132.0,484.5 130.0,483.8 128.0,483.8 126.0,484.1 124.0,483.9 122.0,484.2 120.0,484.3"/>
<polygon fill="#f8f820" points="120.0,626.0 122.0,626.1 124.0,626.0 126.0,626.3 128.0,626.1 130.0,625.9 132.0,626.1 134.0,625.6 136.0,625.9 138.0,626.4 140.0,625.8 142.0,626.1 144.0,625.6 146.0,625.9 148.0,626.1 150.0,626.1 152.0,625.9 154.0,625.8 156.0,626.4 158.0,626.1 160.0,625.7 162.0,626.4 164.0,625.8 166.0,625.9 168.0,625.7 170.0,625.9 172.0,626.1 174.0,626.0 176.0,626.2 178.0,625.7 180.0,625.9 182.0,626.0 184.0,626.2 186.0,625.8 188.0,626.3 190.0,625.8 192.0,625.9 194.0,625.7 196.0,626.0 198.0,626.2 198.0,630.2 196.0,630.5 194.0,630.4 192.0,630.7 190.0,630.2 188.0,630.6 186.0,630.4 184.0,630.6 182.0,630.2 180.0,630.5 178.0,630.2 176.0,630.6 174.0,630.6 172.0,630.1 170.0,630.7 168.0,630.6 166.0,630.2 164.0,630.7 162.0,630.7 160.0,630.7 158.0,630.5 156.0,630.2 154.0,630.2 152.0,630.7 150.0,630.5 148.0,630.7 146.0,630.2 144.0,630.7 142.0,630.5 140.0,630.7 138.0,630.8 136.0,630.2 134.0,630.6 132.0,630.6 130.0,630.3 128.0,630.5 126.0,630.6 124.0,630.5 122.0,630.5 120.0,630.0"/>
<line x1="204.4" y1="52" x2="204.4" y2="420" stroke="#7adce0" stroke-width="1.4"/>
<line x1="213.4" y1="80" x2="213.4" y2="420" stroke="#7adce0" stroke-width="1.4"/>
<line x1="213.4" y1="58" x2="213.4" y2="80" stroke="#b02a24" stroke-width="1.4"/>
<line x1="197" y1="242" x2="197" y2="273" stroke="#d02020" stroke-width="1"/>
<polygon fill="#f01818" points="198.0,269.1 199.0,267.4 200.0,265.7 201.0,264.4 202.0,262.0 203.0,261.2 204.0,260.3 205.0,260.2 206.0,260.0 207.0,260.2 208.0,259.2 209.0,259.8 210.0,260.7 211.0,261.5 212.0,262.7 213.0,264.2 214.0,265.0 214.0,268.7 213.0,267.9 212.0,267.7 211.0,266.5 210.0,265.1 209.0,264.0 208.0,263.8 207.0,264.5 206.0,263.9 205.0,264.5 204.0,264.6 203.0,265.3 202.0,266.6 201.0,267.9 200.0,270.0 199.0,271.6 198.0,273.3"/>
<polygon fill="#f01818" points="214.0,264.1 215.0,262.2 216.0,261.6 217.0,259.8 218.0,259.7 219.0,259.9 220.0,258.8 221.0,257.7 222.0,257.4 223.0,257.7 224.0,256.3 225.0,257.7 226.0,257.3 227.0,255.7 228.0,255.6 229.0,255.6 230.0,255.8 231.0,257.0 232.0,255.4 233.0,255.5 234.0,255.6 235.0,256.5 236.0,256.1 237.0,255.5 237.0,262.2 236.0,262.2 235.0,262.7 234.0,263.7 233.0,262.8 232.0,264.3 231.0,262.7 230.0,264.6 229.0,264.1 228.0,262.7 227.0,264.8 226.0,263.9 225.0,263.4 224.0,265.8 223.0,264.2 222.0,265.0 221.0,266.5 220.0,265.8 219.0,267.5 218.0,267.1 217.0,267.2 216.0,269.9 215.0,270.5 214.0,269.6"/>
<polygon fill="#f01818" points="237.0,256.8 238.0,256.1 239.0,255.9 240.0,256.8 241.0,256.4 242.0,255.4 243.0,256.4 244.0,256.3 245.0,255.2 246.0,255.7 247.0,255.1 248.0,255.2 249.0,255.7 250.0,254.9 251.0,255.6 252.0,255.4 253.0,255.4 254.0,254.4 255.0,255.3 256.0,255.0 257.0,255.2 257.0,261.0 256.0,260.9 255.0,260.4 254.0,260.2 253.0,260.2 252.0,260.5 251.0,261.3 250.0,260.9 249.0,260.3 248.0,260.5 247.0,261.1 246.0,261.0 245.0,261.5 244.0,262.0 243.0,261.4 242.0,262.1 241.0,262.2 240.0,262.3 239.0,261.4 238.0,261.2 237.0,261.5"/>
<line x1="197.600" y1="270" x2="197.600" y2="318" stroke="#18d8e8" stroke-width="1.200"/>
<polygon fill="#18e8f0" points="198.0,310.3 199.0,298.9 200.0,292.8 201.0,291.1 202.0,289.0 203.0,286.2 204.0,286.3 205.0,284.3 206.0,283.5 207.0,283.9 208.0,284.9 209.0,286.4 210.0,286.3 211.0,287.7 212.0,287.6 213.0,288.7 214.0,288.4 215.0,286.9 216.0,286.9 217.0,285.5 218.0,285.1 219.0,284.2 220.0,283.6 221.0,283.9 222.0,282.8 223.0,282.4 224.0,281.9 225.0,281.4 226.0,281.7 227.0,281.1 228.0,281.0 229.0,281.7 230.0,281.4 231.0,281.3 232.0,281.6 233.0,281.0 234.0,281.2 235.0,280.3 236.0,280.8 237.0,280.6 238.0,280.9 239.0,279.7 240.0,280.1 241.0,279.9 242.0,279.3 243.0,280.1 244.0,280.0 245.0,280.1 246.0,279.2 247.0,279.9 248.0,279.1 249.0,278.8 250.0,278.5 251.0,279.4 252.0,278.8 253.0,278.9 254.0,278.6 255.0,278.3 256.0,278.7 257.0,278.0 257.0,282.3 256.0,282.8 255.0,283.2 254.0,282.5 253.0,282.6 252.0,283.2 251.0,282.8 250.0,283.6 249.0,283.0 248.0,283.6 247.0,283.8 246.0,283.5 245.0,283.5 244.0,284.4 243.0,283.7 242.0,283.9 241.0,283.8 240.0,284.5 239.0,284.6 238.0,285.2 237.0,285.1 236.0,285.2 235.0,285.5 234.0,285.4 233.0,285.3 232.0,285.4 231.0,285.6 230.0,285.2 229.0,286.1 228.0,285.6 227.0,285.9 226.0,285.5 225.0,286.6 224.0,286.4 223.0,286.5 222.0,287.4 221.0,287.4 220.0,288.4 219.0,289.0 218.0,288.8 217.0,290.0 216.0,290.3 215.0,291.2 214.0,292.7 213.0,292.8 212.0,292.1 211.0,291.7 210.0,291.1 209.0,289.7 208.0,289.4 207.0,288.3 206.0,288.0 205.0,288.7 204.0,289.9 203.0,291.7 202.0,293.8 201.0,294.8 200.0,296.9 199.0,303.2 198.0,314.7"/>
<polygon fill="#28f028" points="205.0,221.5 206.0,218.9 207.0,218.3 208.0,219.6 209.0,219.6 210.0,221.9 211.0,223.6 212.0,223.3 213.0,225.2 214.0,224.7 215.0,223.1 216.0,221.0 217.0,220.0 218.0,217.7 219.0,217.6 220.0,216.6 221.0,216.2 222.0,215.5 223.0,217.2 224.0,215.1 225.0,213.1 226.0,212.9 227.0,214.7 228.0,213.9 229.0,213.0 230.0,213.5 231.0,212.7 232.0,213.8 233.0,212.7 233.0,232.0 232.0,230.1 231.0,230.8 230.0,234.5 229.0,234.0 228.0,234.9 227.0,234.0 226.0,235.0 225.0,235.5 224.0,236.1 223.0,233.3 222.0,236.3 221.0,235.3 220.0,237.6 219.0,236.5 218.0,238.2 217.0,241.2 216.0,241.5 215.0,241.5 214.0,244.1 213.0,242.4 212.0,243.2 211.0,239.3 210.0,238.1 209.0,238.2 208.0,234.8 207.0,235.4 206.0,238.3 205.0,238.1"/>
<line x1="233" y1="214" x2="233" y2="360" stroke="#50e050" stroke-width="1.1"/>
<rect x="239.4" y="207" width="5" height="30" fill="#28f028"/>
<line x1="239.6" y1="207" x2="239.6" y2="360" stroke="#50e050" stroke-width="1.1"/>
<line x1="244.4" y1="207" x2="244.4" y2="360" stroke="#50e050" stroke-width="1.1"/>
<rect x="251" y="204" width="4.5" height="30" fill="#28f028"/>
<line x1="251" y1="204" x2="251" y2="360" stroke="#50e050" stroke-width="1.1"/>
<line x1="255.4" y1="204" x2="255.4" y2="360" stroke="#50e050" stroke-width="1.1"/>
<rect x="197" y="468" width="7" height="22" fill="#58f020"/>
<polygon fill="#ffff00" points="204.6,365.7 205.6,364.9 206.6,364.2 207.6,364.1 208.6,363.7 209.6,363.4 210.6,363.0 211.6,362.6 212.6,363.3 213.6,364.3 214.6,365.5 215.6,364.5 216.6,362.9 217.6,362.6 218.6,362.0 219.6,361.2 220.6,361.1 221.6,359.9 222.6,359.8 223.6,359.4 224.6,359.0 225.6,358.9 226.6,358.7 227.6,358.5 228.6,358.3 229.6,357.6 230.6,357.5 231.6,356.9 232.6,357.3 233.6,356.6 234.6,355.8 235.6,356.2 236.6,355.6 237.6,355.4 238.6,355.4 239.6,354.3 240.6,354.8 241.6,354.0 242.6,354.5 243.6,354.3 244.6,353.1 245.6,353.3 246.6,353.4 247.6,352.8 248.6,352.4 249.6,351.7 250.6,352.0 251.6,351.4 252.6,349.9 253.6,349.7 254.6,349.8 255.6,349.1 256.6,347.6 257.6,338.2 258.6,338.2 259.6,337.7 260.6,337.7 261.6,338.0 262.6,337.8 263.6,337.8 264.6,337.7 265.6,338.0 266.6,337.7 267.6,337.8 268.6,337.6 269.6,338.4 270.6,337.6 271.6,338.5 272.6,337.7 273.6,337.9 274.6,338.0 275.6,337.5 276.6,337.9 277.6,338.1 278.6,337.7 279.6,337.6 280.6,337.9 281.6,338.1 282.6,338.0 283.6,338.0 284.6,337.7 285.6,338.2 286.6,338.1 287.6,337.9 288.6,338.1 289.6,338.1 290.6,337.7 291.6,337.6 292.6,338.0 293.6,338.0 294.6,338.3 295.6,338.1 296.6,338.3 297.6,337.9 298.6,337.9 299.6,338.4 300.6,337.5 301.6,338.1 302.6,337.6 303.6,337.6 304.6,337.5 305.6,338.2 306.6,338.0 307.6,337.5 308.6,338.4 309.6,338.4 310.6,337.9 311.6,337.9 312.6,337.5 313.6,337.6 314.6,337.9 315.6,337.4 316.6,337.9 317.6,337.9 318.6,337.7 319.6,338.0 320.6,338.1 321.6,337.8 322.6,338.1 323.6,337.5 324.6,337.7 325.6,337.9 326.6,338.3 327.6,338.0 328.6,338.0 329.6,337.8 330.6,337.8 331.6,337.5 332.6,337.4 333.6,337.9 334.6,338.0 335.6,337.8 336.6,337.4 337.6,338.0 338.6,337.9 339.6,337.6 340.6,338.2 341.6,338.1 342.6,337.4 343.6,337.6 344.6,337.9 345.6,338.3 346.6,337.5 347.6,337.7 348.6,337.6 349.6,337.4 350.6,337.5 351.6,337.9 352.6,338.2 353.6,338.1 354.6,337.9 355.6,337.9 356.6,338.2 357.6,338.2 358.6,337.7 359.6,337.8 360.6,338.0 361.6,337.4 362.6,337.7 363.6,338.3 364.6,337.9 365.6,337.6 366.6,338.0 367.6,337.7 368.6,338.3 369.6,338.0 370.6,337.5 371.6,337.8 372.6,337.7 373.6,338.1 374.6,337.8 375.6,337.8 376.6,338.1 377.6,337.7 378.6,337.8 379.6,337.3 380.6,337.8 381.6,337.9 382.6,338.2 383.6,338.2 384.6,337.6 385.6,338.2 386.6,338.2 387.6,338.1 388.6,337.8 389.6,337.5 390.6,337.7 391.6,337.5 392.6,338.2 393.6,338.3 394.6,337.5 395.6,338.0 396.6,337.6 397.6,337.9 398.6,338.1 399.6,338.0 400.6,338.2 401.6,337.4 402.6,337.7 403.6,337.9 404.6,337.8 405.6,337.9 406.6,338.2 407.6,337.4 408.6,337.7 409.6,337.3 410.6,337.8 411.6,337.7 412.6,338.0 413.6,338.2 414.6,337.3 415.6,337.4 416.6,338.0 417.6,337.4 418.6,337.5 419.6,338.0 420.6,337.7 421.6,337.3 422.6,337.8 423.6,337.3 424.6,338.0 425.6,337.9 426.6,337.5 427.6,338.0 428.6,337.9 429.6,337.4 430.6,337.8 431.6,337.5 432.6,338.0 433.6,338.1 434.6,337.9 435.6,338.1 436.6,337.3 437.6,338.0 438.6,337.7 439.6,338.1 440.6,337.7 441.6,337.9 442.6,337.8 443.6,338.2 444.6,338.1 445.6,337.4 446.6,337.9 447.6,338.0 448.6,338.0 449.6,337.9 450.6,338.0 451.6,338.2 452.6,337.6 453.6,337.9 454.6,338.1 455.6,337.5 456.6,338.1 457.6,337.9 458.6,337.4 459.6,338.1 460.6,337.8 461.6,337.4 462.6,337.4 463.6,338.0 464.6,337.9 465.6,337.5 466.6,337.8 467.6,337.2 468.6,338.0 469.6,337.2 470.6,337.7 471.6,338.0 472.6,337.7 473.6,338.1 474.6,337.5 475.6,337.9 476.6,337.3 477.6,337.6 478.6,337.8 479.6,337.9 480.6,337.6 481.6,338.0 482.6,337.3 483.6,338.1 484.6,337.7 485.6,337.6 486.6,337.9 487.6,337.4 488.6,337.8 489.6,337.5 490.6,337.6 491.6,337.9 492.6,337.8 493.6,338.1 494.6,338.0 495.6,337.3 496.6,337.8 497.6,337.5 498.6,338.0 499.6,337.6 500.6,337.8 501.6,337.7 502.6,337.9 503.6,338.1 504.6,337.8 505.6,337.9 506.6,338.0 507.6,337.4 508.6,337.9 509.6,337.7 510.6,337.2 511.6,337.4 512.6,337.3 513.6,337.3 514.6,338.0 515.6,337.9 516.6,338.1 517.6,337.5 518.6,337.5 519.6,337.8 520.6,337.7 521.6,337.5 522.6,337.4 523.6,337.9 524.6,337.3 525.6,337.8 526.6,337.5 527.6,337.9 528.6,338.0 529.6,337.2 530.6,337.4 531.6,337.4 532.6,338.1 533.6,338.1 534.6,337.9 535.6,337.9 536.6,337.8 537.6,337.7 538.6,338.1 539.6,337.8 540.6,337.5 541.6,337.9 542.6,337.3 543.6,337.5 544.6,337.4 545.6,337.8 546.6,337.7 547.6,337.4 548.6,337.7 549.6,338.1 550.6,337.2 551.6,337.3 552.6,337.8 553.6,338.0 554.6,337.2 555.6,337.5 556.6,338.0 557.6,337.8 558.6,338.0 559.6,337.3 560.6,337.9 561.6,337.2 562.6,337.3 563.6,338.0 564.6,337.4 565.6,337.7 566.6,337.3 567.6,337.2 568.6,337.8 569.6,338.0 570.6,337.1 571.6,337.6 572.6,337.1 573.6,337.4 574.6,337.3 575.6,337.2 576.6,337.4 577.6,337.6 578.6,338.0 579.6,337.3 580.6,337.6 581.6,337.5 582.6,337.1 583.6,337.9 584.6,337.3 585.6,338.0 586.6,337.3 587.6,337.2 588.6,337.8 589.6,337.5 590.6,337.1 591.6,337.4 592.6,337.5 593.6,337.8 594.6,338.0 595.6,337.7 596.6,337.6 597.6,337.8 598.6,337.7 599.6,337.9 600.6,337.3 601.6,337.3 602.6,337.8 603.6,337.8 604.6,337.5 605.6,337.6 606.6,337.1 607.6,337.6 608.6,337.7 609.6,337.1 610.6,337.9 611.6,337.4 612.6,337.7 613.6,337.2 614.6,337.4 615.6,337.2 616.6,337.8 617.6,337.3 618.6,337.4 619.6,337.5 620.6,337.2 621.6,337.1 622.6,337.9 623.6,337.7 624.6,337.6 625.6,337.8 626.6,337.9 627.6,337.7 628.6,337.8 629.6,337.3 630.6,337.5 631.6,337.9 632.6,337.6 633.6,337.5 634.6,337.6 635.6,337.8 636.6,337.9 637.6,337.9 638.6,337.0 639.6,337.2 640.6,337.9 641.6,337.2 642.6,337.0 643.6,337.4 644.6,337.8 645.6,337.5 646.6,337.5 647.6,337.8 648.6,337.4 649.6,337.9 650.6,337.0 651.6,337.3 652.6,337.3 653.6,337.0 654.6,337.3 655.6,337.7 656.6,337.7 657.6,337.8 658.6,337.9 659.6,337.2 660.6,337.1 661.6,337.6 662.6,337.7 663.6,337.3 664.6,337.1 665.6,337.0 666.6,337.7 667.6,337.1 668.6,337.1 669.6,337.2 670.6,337.6 671.6,337.7 672.6,337.1 673.6,337.6 674.6,337.5 675.6,337.4 676.6,337.5 677.6,337.1 678.6,337.7 679.6,337.9 680.6,337.3 681.6,337.3 682.6,337.1 683.6,337.2 684.6,337.0 685.6,336.9 686.6,337.4 687.6,337.4 688.6,337.7 689.6,337.6 690.6,337.3 691.6,337.8 692.6,337.2 693.6,337.7 694.6,337.4 695.6,336.9 696.6,337.8 697.6,337.8 698.6,337.4 699.6,337.7 700.6,337.1 701.6,337.9 702.6,337.0 703.6,337.0 704.6,337.1 705.6,337.4 706.6,337.6 707.6,337.2 708.6,337.3 709.6,337.4 710.6,337.5 711.6,337.4 712.6,337.2 713.6,337.0 714.6,336.9 715.6,337.7 716.6,337.5 717.6,337.4 718.6,337.3 719.6,337.5 720.6,337.6 721.6,337.8 722.6,337.5 723.6,337.4 724.6,336.9 725.6,336.9 726.6,337.0 727.6,336.9 728.6,336.9 729.6,337.2 730.6,337.0 731.6,337.8 732.6,337.1 733.6,337.2 734.6,337.5 735.6,337.2 736.6,336.9 737.6,337.3 738.6,337.2 739.6,337.5 740.6,337.5 741.6,336.9 742.6,337.8 743.6,337.6 744.6,337.1 745.6,337.4 746.6,337.7 747.6,337.1 748.6,337.4 749.6,337.2 750.6,337.4 751.6,337.3 752.6,337.2 753.6,337.4 754.6,337.7 755.6,337.6 756.6,336.9 757.6,337.2 758.6,337.7 759.6,336.9 760.6,337.5 761.6,337.7 762.6,337.2 763.6,337.5 764.6,337.3 765.6,337.2 766.6,337.5 767.6,337.2 768.6,337.7 769.6,337.3 770.6,337.2 771.6,337.7 772.6,337.4 773.6,337.7 774.6,337.3 775.6,336.9 776.6,337.2 777.6,337.0 778.6,337.0 779.6,337.6 780.6,336.8 781.6,337.0 782.6,337.6 783.6,336.9 784.6,337.4 785.6,337.6 786.6,336.8 787.6,337.2 788.6,337.0 789.6,337.6 790.6,337.0 791.6,337.7 792.6,337.5 793.6,337.4 794.6,337.7 795.6,337.1 796.6,337.5 797.6,337.4 798.6,337.0 799.6,337.3 800.6,336.8 801.6,337.1 802.6,336.8 803.6,337.2 804.6,336.8 805.6,336.8 806.6,337.5 807.6,337.0 808.6,337.4 809.6,336.9 810.6,337.0 811.6,336.9 812.6,337.6 813.6,337.3 814.6,337.0 815.6,336.8 816.6,337.0 817.6,337.7 818.6,337.1 819.6,337.6 820.6,337.1 821.6,336.9 822.6,337.6 823.6,336.8 824.6,337.0 825.6,337.4 826.6,337.5 827.6,337.2 828.6,336.8 829.6,337.1 830.6,337.6 831.6,337.7 832.6,337.6 833.6,336.9 834.6,337.5 835.6,337.1 836.6,337.4 837.6,337.0 838.6,337.3 839.6,337.5 840.6,336.8 841.6,337.1 842.6,337.0 843.6,336.9 844.6,336.7 845.6,337.6 846.6,337.3 847.6,337.5 848.6,337.2 849.6,336.8 850.6,336.9 851.6,337.6 852.6,337.5 853.6,336.8 854.6,337.0 855.6,337.3 856.6,337.2 857.6,337.5 858.6,336.8 859.6,337.2 860.6,336.8 861.6,337.0 862.6,337.6 863.6,337.3 864.6,337.4 865.6,336.7 866.6,337.0 867.6,337.6 868.6,337.5 869.6,337.3 870.6,337.2 871.6,337.0 872.6,337.2 873.6,337.3 874.6,337.6 875.6,337.0 876.6,337.3 877.6,337.6 878.6,337.2 879.6,336.6 880.6,337.6 881.6,337.5 882.6,336.9 883.6,337.3 884.6,337.3 885.6,337.1 886.6,337.3 887.6,337.0 888.6,337.1 889.6,336.6 890.6,336.6 891.6,337.6 892.6,337.0 893.6,336.8 894.6,336.7 895.6,336.8 896.6,337.0 897.6,336.9 898.6,337.2 899.6,337.3 900.6,336.8 901.6,336.7 902.6,336.6 903.6,336.9 904.6,337.3 905.6,336.8 906.6,336.8 907.6,337.1 908.6,336.9 909.6,337.2 910.6,337.0 911.6,337.2 912.6,337.5 913.6,337.2 914.6,337.2 915.6,336.6 916.6,337.1 917.6,337.2 918.6,337.3 919.6,337.3 920.6,337.2 921.6,337.4 922.6,337.5 923.6,336.7 924.6,337.1 925.6,337.1 926.6,337.0 927.6,337.2 928.6,337.4 929.6,337.5 930.6,337.2 931.6,337.2 932.6,336.8 933.6,337.0 934.6,336.6 935.6,337.2 936.6,336.6 937.6,336.9 938.6,337.4 939.6,337.3 940.6,336.9 941.6,336.5 942.6,337.2 943.6,336.7 944.6,337.1 945.6,336.6 946.6,337.4 947.6,337.0 948.6,336.6 949.6,337.2 950.6,337.3 951.6,337.5 952.6,337.3 953.6,337.2 954.6,336.8 955.6,337.3 956.0,337.5 956.0,631.8 954.5,631.5 953.0,632.2 951.5,632.6 950.0,632.2 948.5,631.5 947.0,632.4 945.5,632.7 944.0,632.2 942.5,631.3 941.0,632.5 939.5,632.6 938.0,631.7 936.5,631.4 935.0,631.5 933.5,632.1 932.0,632.6 930.5,632.2 929.0,632.7 927.5,631.5 926.0,631.7 924.5,632.4 923.0,632.2 921.5,631.8 920.0,632.3 918.5,631.7 917.0,631.3 915.5,631.9 914.0,631.3 912.5,632.2 911.0,631.7 909.5,632.0 908.0,632.2 906.5,631.6 905.0,631.9 903.5,631.2 902.0,632.7 900.5,632.1 899.0,632.8 897.5,631.3 896.0,632.2 894.5,632.4 893.0,631.7 891.5,631.3 890.0,631.4 888.5,631.4 887.0,632.4 885.5,631.3 884.0,632.5 882.5,631.9 881.0,632.1 879.5,632.1 878.0,632.1 876.5,632.3 875.0,632.2 873.5,631.7 872.0,632.4 870.5,631.6 869.0,632.3 867.5,632.4 866.0,632.4 864.5,631.7 863.0,632.4 861.5,632.8 860.0,631.9 858.5,631.6 857.0,632.0 855.5,632.7 854.0,631.4 852.5,631.2 851.0,632.0 849.5,632.2 848.0,632.4 846.5,631.8 845.0,632.8 843.5,631.6 842.0,632.4 840.5,631.3 839.0,631.2 837.5,631.4 836.0,631.3 834.5,632.0 833.0,632.1 831.5,631.5 830.0,632.7 828.5,631.8 827.0,631.4 825.5,631.5 824.0,632.4 822.5,632.7 821.0,631.5 819.5,631.2 818.0,632.4 816.5,631.6 815.0,632.8 813.5,632.0 812.0,632.2 810.5,631.8 809.0,632.5 807.5,631.9 806.0,631.7 804.5,632.6 803.0,631.4 801.5,632.4 800.0,631.3 798.5,632.2 797.0,631.8 795.5,632.6 794.0,631.3 792.5,632.1 791.0,631.9 789.5,632.7 788.0,632.7 786.5,632.2 785.0,631.6 783.5,631.6 782.0,631.6 780.5,631.9 779.0,631.6 777.5,631.5 776.0,632.4 774.5,632.2 773.0,631.7 771.5,632.8 770.0,631.5 768.5,632.1 767.0,631.5 765.5,632.6 764.0,632.6 762.5,631.6 761.0,632.4 759.5,632.5 758.0,631.7 756.5,631.7 755.0,632.0 753.5,632.6 752.0,631.5 750.5,632.3 749.0,632.2 747.5,631.9 746.0,632.1 744.5,632.6 743.0,631.5 741.5,632.6 740.0,631.8 738.5,632.4 737.0,632.6 735.5,631.5 734.0,632.6 732.5,632.8 731.0,631.7 729.5,631.2 728.0,631.4 726.5,632.8 725.0,631.2 723.5,632.7 722.0,631.4 720.5,632.4 719.0,631.4 717.5,631.5 716.0,632.3 714.5,631.3 713.0,631.7 711.5,632.7 710.0,632.3 708.5,632.6 707.0,632.8 705.5,631.3 704.0,631.6 702.5,632.5 701.0,632.3 699.5,631.3 698.0,632.0 696.5,631.6 695.0,631.9 693.5,631.4 692.0,631.2 690.5,632.8 689.0,631.7 687.5,632.6 686.0,631.4 684.5,632.0 683.0,631.4 681.5,631.9 680.0,631.5 678.5,632.3 677.0,631.4 675.5,632.4 674.0,632.0 672.5,631.4 671.0,631.8 669.5,632.0 668.0,632.7 666.5,631.8 665.0,631.5 663.5,632.7 662.0,632.6 660.5,632.4 659.0,631.6 657.5,631.5 656.0,631.6 654.5,631.3 653.0,631.3 651.5,632.0 650.0,631.9 648.5,632.1 647.0,631.8 645.5,631.2 644.0,632.3 642.5,632.2 641.0,632.1 639.5,632.1 638.0,632.3 636.5,632.8 635.0,632.6 633.5,632.3 632.0,631.8 630.5,631.7 629.0,631.9 627.5,632.8 626.0,631.8 624.5,631.8 623.0,631.9 621.5,631.4 620.0,632.8 618.5,631.2 617.0,632.2 615.5,632.7 614.0,631.6 612.5,632.2 611.0,631.8 609.5,631.6 608.0,631.5 606.5,631.4 605.0,632.5 603.5,632.5 602.0,632.7 600.5,631.3 599.0,632.3 597.5,631.7 596.0,632.2 594.5,632.1 593.0,631.7 591.5,632.8 590.0,631.2 588.5,632.4 587.0,632.6 585.5,632.0 584.0,632.1 582.5,632.8 581.0,631.6 579.5,632.2 578.0,632.4 576.5,631.8 575.0,632.3 573.5,631.8 572.0,632.0 570.5,632.2 569.0,632.3 567.5,631.7 566.0,632.2 564.5,632.1 563.0,631.6 561.5,632.2 560.0,631.6 558.5,632.7 557.0,632.0 555.5,632.4 554.0,632.0 552.5,632.0 551.0,631.6 549.5,631.4 548.0,632.7 546.5,632.0 545.0,632.0 543.5,632.0 542.0,632.5 540.5,631.6 539.0,631.5 537.5,632.5 536.0,631.9 534.5,632.2 533.0,632.5 531.5,632.6 530.0,632.6 528.5,631.3 527.0,631.8 525.5,632.5 524.0,632.5 522.5,631.4 521.0,631.4 519.5,631.6 518.0,631.4 516.5,631.8 515.0,632.5 513.5,632.0 512.0,631.9 510.5,631.3 509.0,631.8 507.5,632.8 506.0,632.3 504.5,631.9 503.0,632.0 501.5,632.5 500.0,632.4 498.5,631.4 497.0,632.3 495.5,631.8 494.0,632.0 492.5,631.6 491.0,631.8 489.5,631.7 488.0,631.8 486.5,631.2 485.0,631.5 483.5,632.1 482.0,631.3 480.5,631.5 479.0,632.3 477.5,631.6 476.0,631.7 474.5,631.6 473.0,632.5 471.5,631.3 470.0,632.2 468.5,632.6 467.0,631.5 465.5,631.9 464.0,632.5 462.5,632.2 461.0,631.8 459.5,631.3 458.0,631.9 456.5,631.8 455.0,632.3 453.5,631.7 452.0,631.9 450.5,632.2 449.0,632.5 447.5,631.8 446.0,631.8 444.5,632.1 443.0,632.7 441.5,631.5 440.0,632.8 438.5,632.3 437.0,631.8 435.5,632.3 434.0,631.7 432.5,631.3 431.0,632.4 429.5,631.8 428.0,632.0 426.5,632.0 425.0,632.6 423.5,632.4 422.0,631.2 420.5,632.1 419.0,631.9 417.5,631.9 416.0,632.5 414.5,631.9 413.0,632.0 411.5,632.6 410.0,631.9 408.5,632.0 407.0,632.0 405.5,632.5 404.0,632.3 402.5,632.4 401.0,631.8 399.5,631.3 398.0,632.3 396.5,632.1 395.0,632.4 393.5,632.4 392.0,631.4 390.5,631.6 389.0,631.3 387.5,632.5 386.0,631.4 384.5,631.3 383.0,632.4 381.5,632.1 380.0,631.3 378.5,632.3 377.0,632.3 375.5,632.0 374.0,631.3 372.5,632.3 371.0,631.9 369.5,632.1 368.0,632.8 366.5,632.5 365.0,632.6 363.5,631.4 362.0,631.7 360.5,632.0 359.0,631.2 357.5,632.8 356.0,631.6 354.5,631.6 353.0,631.7 351.5,631.6 350.0,632.6 348.5,632.1 347.0,632.0 345.5,631.9 344.0,631.3 342.5,631.7 341.0,632.6 339.5,632.5 338.0,632.6 336.5,631.6 335.0,631.5 333.5,631.3 332.0,632.1 330.5,631.8 329.0,631.9 327.5,632.0 326.0,632.1 324.5,631.8 323.0,632.5 321.5,631.5 320.0,632.7 318.5,632.1 317.0,631.3 315.5,631.7 314.0,632.1 312.5,631.9 311.0,632.1 309.5,631.7 308.0,631.6 306.5,632.5 305.0,631.7 303.5,632.3 302.0,632.5 300.5,632.1 299.0,631.9 297.5,632.7 296.0,631.9 294.5,632.6 293.0,631.3 291.5,631.9 290.0,632.2 288.5,631.3 287.0,632.6 285.5,631.3 284.0,632.2 282.5,631.5 281.0,632.7 279.5,632.1 278.0,632.5 276.5,632.0 275.0,632.3 273.5,632.3 272.0,631.7 270.5,631.5 269.0,632.5 267.5,631.4 266.0,632.7 264.5,631.5 263.0,631.4 261.5,631.4 260.0,632.5 258.5,632.7 257.0,631.9 255.5,632.3 254.0,631.6 252.5,632.6 251.0,632.3 249.5,631.4 248.0,631.3 246.5,632.3 245.0,631.3 243.5,632.5 242.0,631.7 240.5,631.6 239.0,632.1 237.5,631.7 236.0,632.1 234.5,631.4 233.0,632.7 231.5,631.7 230.0,632.5 228.5,631.4 227.0,632.5 225.5,632.8 224.0,631.8 222.5,631.3 221.0,631.8 219.5,632.2 218.0,631.6 216.5,632.1 215.0,631.3 213.5,631.9 212.0,632.4 210.5,631.9 209.0,632.3 207.5,631.4 206.0,632.5 204.6,630.0"/>
<line x1="198.5" y1="413" x2="198.5" y2="631" stroke="#e0e020" stroke-width="1"/>
<line x1="200.5" y1="385" x2="200.5" y2="631" stroke="#d0e820" stroke-width="1"/>
<line x1="202.5" y1="372" x2="202.5" y2="631" stroke="#c0f028" stroke-width="1"/>
<line x1="270.0" y1="335.5" x2="270.0" y2="339" stroke="#f0e020" stroke-width="1"/>
<line x1="297.4" y1="335.5" x2="297.4" y2="339" stroke="#f0e020" stroke-width="1"/>
<line x1="325.5" y1="335.5" x2="325.5" y2="339" stroke="#f0e020" stroke-width="1"/>
<line x1="354.5" y1="335.5" x2="354.5" y2="339" stroke="#f0e020" stroke-width="1"/>
<line x1="384.4" y1="335.5" x2="384.4" y2="339" stroke="#f0e020" stroke-width="1"/>
<line x1="415.3" y1="335.5" x2="415.3" y2="339" stroke="#f0e020" stroke-width="1"/>
<line x1="447.6" y1="335.5" x2="447.6" y2="339" stroke="#f0e020" stroke-width="1"/>
<line x1="482.3" y1="335.5" x2="482.3" y2="339" stroke="#f0e020" stroke-width="1"/>
<line x1="517.1" y1="335.5" x2="517.1" y2="339" stroke="#f0e020" stroke-width="1"/>
<line x1="551.9" y1="335.5" x2="551.9" y2="339" stroke="#f0e020" stroke-width="1"/>
<line x1="586.7" y1="335.5" x2="586.7" y2="339" stroke="#f0e020" stroke-width="1"/>
<line x1="620.6" y1="335.5" x2="620.6" y2="339" stroke="#f0e020" stroke-width="1"/>
<line x1="651.2" y1="335.5" x2="651.2" y2="339" stroke="#f0e020" stroke-width="1"/>
<line x1="677.8" y1="335.5" x2="677.8" y2="339" stroke="#f0e020" stroke-width="1"/>
<line x1="701.3" y1="335.5" x2="701.3" y2="339" stroke="#f0e020" stroke-width="1"/>
<line x1="723.9" y1="335.5" x2="723.9" y2="339" stroke="#f0e020" stroke-width="1"/>
<line x1="745.8" y1="335.5" x2="745.8" y2="339" stroke="#f0e020" stroke-width="1"/>
<line x1="767.1" y1="335.5" x2="767.1" y2="339" stroke="#f0e020" stroke-width="1"/>
<line x1="788.0" y1="335.5" x2="788.0" y2="339" stroke="#f0e020" stroke-width="1"/>
<line x1="809.0" y1="335.5" x2="809.0" y2="339" stroke="#f0e020" stroke-width="1"/>
<line x1="829.8" y1="335.5" x2="829.8" y2="339" stroke="#f0e020" stroke-width="1"/>
<line x1="850.6" y1="335.5" x2="850.6" y2="339" stroke="#f0e020" stroke-width="1"/>
<line x1="871.3" y1="335.5" x2="871.3" y2="339" stroke="#f0e020" stroke-width="1"/>
<line x1="891.9" y1="335.5" x2="891.9" y2="339" stroke="#f0e020" stroke-width="1"/>
<line x1="912.5" y1="335.5" x2="912.5" y2="339" stroke="#f0e020" stroke-width="1"/>
<line x1="933.0" y1="335.5" x2="933.0" y2="339" stroke="#f0e020" stroke-width="1"/>
<line x1="953.5" y1="335.5" x2="953.5" y2="339" stroke="#f0e020" stroke-width="1"/>
<line x1="215.3" y1="368" x2="215.3" y2="632" stroke="#101000" stroke-width="1"/>
<line x1="204.9" y1="560" x2="204.9" y2="632" stroke="#303000" stroke-width="0.8"/>
<line x1="257.700" y1="52" x2="257.700" y2="338" stroke="#400808" stroke-width="3.600"/>
<line x1="257.700" y1="338" x2="257.700" y2="634" stroke="#ffff00" stroke-width="3.800"/>
<line x1="257.700" y1="52" x2="257.700" y2="631" stroke="#ffffff" stroke-width="3.600" stroke-dasharray="14.800 2.800 3.200 2.600" stroke-dashoffset="1.500"/>
<rect x="256" y="630.500" width="3.600" height="3.600" fill="#fff"/>
<g stroke="#d8d8d8" stroke-width="1">
<line x1="120.5" y1="52" x2="120.5" y2="637" stroke="#f0f0f0" stroke-width="1.4"/>
<line x1="955.7" y1="52" x2="955.7" y2="637" stroke="#e8e8e8" stroke-width="1.2"/>
<line x1="121" y1="51.5" x2="126" y2="51.5" stroke="#bdbdbd"/>
<line x1="951" y1="51.5" x2="955" y2="51.5" stroke="#bdbdbd"/>
<line x1="121" y1="57.4" x2="123.4" y2="57.4" stroke="#bdbdbd"/>
<line x1="953.6" y1="57.4" x2="955" y2="57.4" stroke="#bdbdbd"/>
<line x1="121" y1="63.2" x2="123.4" y2="63.2" stroke="#bdbdbd"/>
<line x1="953.6" y1="63.2" x2="955" y2="63.2" stroke="#bdbdbd"/>
<line x1="121" y1="69.0" x2="123.4" y2="69.0" stroke="#bdbdbd"/>
<line x1="953.6" y1="69.0" x2="955" y2="69.0" stroke="#bdbdbd"/>
<line x1="121" y1="74.9" x2="123.4" y2="74.9" stroke="#bdbdbd"/>
<line x1="953.6" y1="74.9" x2="955" y2="74.9" stroke="#bdbdbd"/>
<line x1="121" y1="80.8" x2="123.4" y2="80.8" stroke="#bdbdbd"/>
<line x1="953.6" y1="80.8" x2="955" y2="80.8" stroke="#bdbdbd"/>
<line x1="121" y1="86.6" x2="123.4" y2="86.6" stroke="#bdbdbd"/>
<line x1="953.6" y1="86.6" x2="955" y2="86.6" stroke="#bdbdbd"/>
<line x1="121" y1="92.4" x2="123.4" y2="92.4" stroke="#bdbdbd"/>
<line x1="953.6" y1="92.4" x2="955" y2="92.4" stroke="#bdbdbd"/>
<line x1="121" y1="98.3" x2="123.4" y2="98.3" stroke="#bdbdbd"/>
<line x1="953.6" y1="98.3" x2="955" y2="98.3" stroke="#bdbdbd"/>
<line x1="121" y1="104.2" x2="123.4" y2="104.2" stroke="#bdbdbd"/>
<line x1="953.6" y1="104.2" x2="955" y2="104.2" stroke="#bdbdbd"/>
<line x1="121" y1="110.0" x2="126" y2="110.0" stroke="#bdbdbd"/>
<line x1="951" y1="110.0" x2="955" y2="110.0" stroke="#bdbdbd"/>
<line x1="121" y1="115.8" x2="123.4" y2="115.8" stroke="#bdbdbd"/>
<line x1="953.6" y1="115.8" x2="955" y2="115.8" stroke="#bdbdbd"/>
<line x1="121" y1="121.7" x2="123.4" y2="121.7" stroke="#bdbdbd"/>
<line x1="953.6" y1="121.7" x2="955" y2="121.7" stroke="#bdbdbd"/>
<line x1="121" y1="127.5" x2="123.4" y2="127.5" stroke="#bdbdbd"/>
<line x1="953.6" y1="127.5" x2="955" y2="127.5" stroke="#bdbdbd"/>
<line x1="121" y1="133.4" x2="123.4" y2="133.4" stroke="#bdbdbd"/>
<line x1="953.6" y1="133.4" x2="955" y2="133.4" stroke="#bdbdbd"/>
<line x1="121" y1="139.2" x2="123.4" y2="139.2" stroke="#bdbdbd"/>
<line x1="953.6" y1="139.2" x2="955" y2="139.2" stroke="#bdbdbd"/>
<line x1="121" y1="145.1" x2="123.4" y2="145.1" stroke="#bdbdbd"/>
<line x1="953.6" y1="145.1" x2="955" y2="145.1" stroke="#bdbdbd"/>
<line x1="121" y1="150.9" x2="123.4" y2="150.9" stroke="#bdbdbd"/>
<line x1="953.6" y1="150.9" x2="955" y2="150.9" stroke="#bdbdbd"/>
<line x1="121" y1="156.8" x2="123.4" y2="156.8" stroke="#bdbdbd"/>
<line x1="953.6" y1="156.8" x2="955" y2="156.8" stroke="#bdbdbd"/>
<line x1="121" y1="162.6" x2="123.4" y2="162.6" stroke="#bdbdbd"/>
<line x1="953.6" y1="162.6" x2="955" y2="162.6" stroke="#bdbdbd"/>
<line x1="121" y1="168.5" x2="126" y2="168.5" stroke="#bdbdbd"/>
<line x1="951" y1="168.5" x2="955" y2="168.5" stroke="#bdbdbd"/>
<line x1="121" y1="174.3" x2="123.4" y2="174.3" stroke="#bdbdbd"/>
<line x1="953.6" y1="174.3" x2="955" y2="174.3" stroke="#bdbdbd"/>
<line x1="121" y1="180.2" x2="123.4" y2="180.2" stroke="#bdbdbd"/>
<line x1="953.6" y1="180.2" x2="955" y2="180.2" stroke="#bdbdbd"/>
<line x1="121" y1="186.0" x2="123.4" y2="186.0" stroke="#bdbdbd"/>
<line x1="953.6" y1="186.0" x2="955" y2="186.0" stroke="#bdbdbd"/>
<line x1="121" y1="191.9" x2="123.4" y2="191.9" stroke="#bdbdbd"/>
<line x1="953.6" y1="191.9" x2="955" y2="191.9" stroke="#bdbdbd"/>
<line x1="121" y1="197.8" x2="123.4" y2="197.8" stroke="#bdbdbd"/>
<line x1="953.6" y1="197.8" x2="955" y2="197.8" stroke="#bdbdbd"/>
<line x1="121" y1="203.6" x2="123.4" y2="203.6" stroke="#bdbdbd"/>
<line x1="953.6" y1="203.6" x2="955" y2="203.6" stroke="#bdbdbd"/>
<line x1="121" y1="209.4" x2="123.4" y2="209.4" stroke="#bdbdbd"/>
<line x1="953.6" y1="209.4" x2="955" y2="209.4" stroke="#bdbdbd"/>
<line x1="121" y1="215.3" x2="123.4" y2="215.3" stroke="#bdbdbd"/>
<line x1="953.6" y1="215.3" x2="955" y2="215.3" stroke="#bdbdbd"/>
<line x1="121" y1="221.1" x2="123.4" y2="221.1" stroke="#bdbdbd"/>
<line x1="953.6" y1="221.1" x2="955" y2="221.1" stroke="#bdbdbd"/>
<line x1="121" y1="227.0" x2="126" y2="227.0" stroke="#bdbdbd"/>
<line x1="951" y1="227.0" x2="955" y2="227.0" stroke="#bdbdbd"/>
<line x1="121" y1="232.8" x2="123.4" y2="232.8" stroke="#bdbdbd"/>
<line x1="953.6" y1="232.8" x2="955" y2="232.8" stroke="#bdbdbd"/>
<line x1="121" y1="238.7" x2="123.4" y2="238.7" stroke="#bdbdbd"/>
<line x1="953.6" y1="238.7" x2="955" y2="238.7" stroke="#bdbdbd"/>
<line x1="121" y1="244.5" x2="123.4" y2="244.5" stroke="#bdbdbd"/>
<line x1="953.6" y1="244.5" x2="955" y2="244.5" stroke="#bdbdbd"/>
<line x1="121" y1="250.4" x2="123.4" y2="250.4" stroke="#bdbdbd"/>
<line x1="953.6" y1="250.4" x2="955" y2="250.4" stroke="#bdbdbd"/>
<line x1="121" y1="256.2" x2="123.4" y2="256.2" stroke="#bdbdbd"/>
<line x1="953.6" y1="256.2" x2="955" y2="256.2" stroke="#bdbdbd"/>
<line x1="121" y1="262.1" x2="123.4" y2="262.1" stroke="#bdbdbd"/>
<line x1="953.6" y1="262.1" x2="955" y2="262.1" stroke="#bdbdbd"/>
<line x1="121" y1="267.9" x2="123.4" y2="267.9" stroke="#bdbdbd"/>
<line x1="953.6" y1="267.9" x2="955" y2="267.9" stroke="#bdbdbd"/>
<line x1="121" y1="273.8" x2="123.4" y2="273.8" stroke="#bdbdbd"/>
<line x1="953.6" y1="273.8" x2="955" y2="273.8" stroke="#bdbdbd"/>
<line x1="121" y1="279.6" x2="123.4" y2="279.6" stroke="#bdbdbd"/>
<line x1="953.6" y1="279.6" x2="955" y2="279.6" stroke="#bdbdbd"/>
<line x1="121" y1="285.5" x2="126" y2="285.5" stroke="#bdbdbd"/>
<line x1="951" y1="285.5" x2="955" y2="285.5" stroke="#bdbdbd"/>
<line x1="121" y1="291.4" x2="123.4" y2="291.4" stroke="#bdbdbd"/>
<line x1="953.6" y1="291.4" x2="955" y2="291.4" stroke="#bdbdbd"/>
<line x1="121" y1="297.2" x2="123.4" y2="297.2" stroke="#bdbdbd"/>
<line x1="953.6" y1="297.2" x2="955" y2="297.2" stroke="#bdbdbd"/>
<line x1="121" y1="303.0" x2="123.4" y2="303.0" stroke="#bdbdbd"/>
<line x1="953.6" y1="303.0" x2="955" y2="303.0" stroke="#bdbdbd"/>
<line x1="121" y1="308.9" x2="123.4" y2="308.9" stroke="#bdbdbd"/>
<line x1="953.6" y1="308.9" x2="955" y2="308.9" stroke="#bdbdbd"/>
<line x1="121" y1="314.8" x2="123.4" y2="314.8" stroke="#bdbdbd"/>
<line x1="953.6" y1="314.8" x2="955" y2="314.8" stroke="#bdbdbd"/>
<line x1="121" y1="320.6" x2="123.4" y2="320.6" stroke="#bdbdbd"/>
<line x1="953.6" y1="320.6" x2="955" y2="320.6" stroke="#bdbdbd"/>
<line x1="121" y1="326.4" x2="123.4" y2="326.4" stroke="#bdbdbd"/>
<line x1="953.6" y1="326.4" x2="955" y2="326.4" stroke="#bdbdbd"/>
<line x1="121" y1="332.3" x2="123.4" y2="332.3" stroke="#bdbdbd"/>
<line x1="953.6" y1="332.3" x2="955" y2="332.3" stroke="#bdbdbd"/>
<line x1="121" y1="338.1" x2="123.4" y2="338.1" stroke="#bdbdbd"/>
<line x1="121" y1="344.0" x2="126" y2="344.0" stroke="#bdbdbd"/>
<line x1="121" y1="349.8" x2="123.4" y2="349.8" stroke="#bdbdbd"/>
<line x1="121" y1="355.7" x2="123.4" y2="355.7" stroke="#bdbdbd"/>
<line x1="121" y1="361.5" x2="123.4" y2="361.5" stroke="#bdbdbd"/>
<line x1="121" y1="367.4" x2="123.4" y2="367.4" stroke="#bdbdbd"/>
<line x1="121" y1="373.2" x2="123.4" y2="373.2" stroke="#bdbdbd"/>
<line x1="121" y1="379.1" x2="123.4" y2="379.1" stroke="#bdbdbd"/>
<line x1="121" y1="384.9" x2="123.4" y2="384.9" stroke="#bdbdbd"/>
<line x1="121" y1="390.8" x2="123.4" y2="390.8" stroke="#bdbdbd"/>
<line x1="121" y1="396.6" x2="123.4" y2="396.6" stroke="#bdbdbd"/>
<line x1="121" y1="402.5" x2="126" y2="402.5" stroke="#bdbdbd"/>
<line x1="121" y1="408.3" x2="123.4" y2="408.3" stroke="#bdbdbd"/>
<line x1="121" y1="414.2" x2="123.4" y2="414.2" stroke="#bdbdbd"/>
<line x1="121" y1="420.0" x2="123.4" y2="420.0" stroke="#bdbdbd"/>
<line x1="121" y1="425.9" x2="123.4" y2="425.9" stroke="#bdbdbd"/>
<line x1="121" y1="431.8" x2="123.4" y2="431.8" stroke="#bdbdbd"/>
<line x1="121" y1="437.6" x2="123.4" y2="437.6" stroke="#bdbdbd"/>
<line x1="121" y1="443.4" x2="123.4" y2="443.4" stroke="#bdbdbd"/>
<line x1="121" y1="449.3" x2="123.4" y2="449.3" stroke="#bdbdbd"/>
<line x1="121" y1="455.1" x2="123.4" y2="455.1" stroke="#bdbdbd"/>
<line x1="121" y1="461.0" x2="126" y2="461.0" stroke="#bdbdbd"/>
<line x1="121" y1="466.8" x2="123.4" y2="466.8" stroke="#bdbdbd"/>
<line x1="121" y1="472.7" x2="123.4" y2="472.7" stroke="#bdbdbd"/>
<line x1="121" y1="478.5" x2="123.4" y2="478.5" stroke="#bdbdbd"/>
<line x1="121" y1="484.4" x2="123.4" y2="484.4" stroke="#bdbdbd"/>
<line x1="121" y1="490.2" x2="123.4" y2="490.2" stroke="#bdbdbd"/>
<line x1="121" y1="496.1" x2="123.4" y2="496.1" stroke="#bdbdbd"/>
<line x1="121" y1="501.9" x2="123.4" y2="501.9" stroke="#bdbdbd"/>
<line x1="121" y1="507.8" x2="123.4" y2="507.8" stroke="#bdbdbd"/>
<line x1="121" y1="513.6" x2="123.4" y2="513.6" stroke="#bdbdbd"/>
<line x1="121" y1="519.5" x2="126" y2="519.5" stroke="#bdbdbd"/>
<line x1="121" y1="525.3" x2="123.4" y2="525.3" stroke="#bdbdbd"/>
<line x1="121" y1="531.2" x2="123.4" y2="531.2" stroke="#bdbdbd"/>
<line x1="121" y1="537.0" x2="123.4" y2="537.0" stroke="#bdbdbd"/>
<line x1="121" y1="542.9" x2="123.4" y2="542.9" stroke="#bdbdbd"/>
<line x1="121" y1="548.8" x2="123.4" y2="548.8" stroke="#bdbdbd"/>
<line x1="121" y1="554.6" x2="123.4" y2="554.6" stroke="#bdbdbd"/>
<line x1="121" y1="560.5" x2="123.4" y2="560.5" stroke="#bdbdbd"/>
<line x1="121" y1="566.3" x2="123.4" y2="566.3" stroke="#bdbdbd"/>
<line x1="121" y1="572.1" x2="123.4" y2="572.1" stroke="#bdbdbd"/>
<line x1="121" y1="578.0" x2="126" y2="578.0" stroke="#bdbdbd"/>
<line x1="121" y1="583.9" x2="123.4" y2="583.9" stroke="#bdbdbd"/>
<line x1="121" y1="589.7" x2="123.4" y2="589.7" stroke="#bdbdbd"/>
<line x1="121" y1="595.5" x2="123.4" y2="595.5" stroke="#bdbdbd"/>
<line x1="121" y1="601.4" x2="123.4" y2="601.4" stroke="#bdbdbd"/>
<line x1="121" y1="607.2" x2="123.4" y2="607.2" stroke="#bdbdbd"/>
<line x1="121" y1="613.1" x2="123.4" y2="613.1" stroke="#bdbdbd"/>
<line x1="121" y1="618.9" x2="123.4" y2="618.9" stroke="#bdbdbd"/>
<line x1="121" y1="624.8" x2="123.4" y2="624.8" stroke="#bdbdbd"/>
<line x1="121" y1="630.6" x2="123.4" y2="630.6" stroke="#bdbdbd"/>
<line x1="121" y1="636.5" x2="126" y2="636.5" stroke="#bdbdbd"/>
<line x1="120.0" y1="52.6" x2="120.0" y2="56.6" stroke="#c8c8c8" stroke-width="0.9"/>
<line x1="120.0" y1="632" x2="120.0" y2="636" stroke="#a8a8a8" stroke-width="0.9"/>
<line x1="128.4" y1="52.6" x2="128.4" y2="54.800000000000004" stroke="#c8c8c8" stroke-width="0.9"/>
<line x1="128.4" y1="633.8" x2="128.4" y2="636" stroke="#a8a8a8" stroke-width="0.9"/>
<line x1="136.7" y1="52.6" x2="136.7" y2="54.800000000000004" stroke="#c8c8c8" stroke-width="0.9"/>
<line x1="136.7" y1="633.8" x2="136.7" y2="636" stroke="#a8a8a8" stroke-width="0.9"/>
<line x1="145.1" y1="52.6" x2="145.1" y2="54.800000000000004" stroke="#c8c8c8" stroke-width="0.9"/>
<line x1="145.1" y1="633.8" x2="145.1" y2="636" stroke="#a8a8a8" stroke-width="0.9"/>
<line x1="153.4" y1="52.6" x2="153.4" y2="54.800000000000004" stroke="#c8c8c8" stroke-width="0.9"/>
<line x1="153.4" y1="633.8" x2="153.4" y2="636" stroke="#a8a8a8" stroke-width="0.9"/>
<line x1="161.8" y1="52.6" x2="161.8" y2="54.800000000000004" stroke="#c8c8c8" stroke-width="0.9"/>
<line x1="161.8" y1="633.8" x2="161.8" y2="636" stroke="#a8a8a8" stroke-width="0.9"/>
<line x1="170.2" y1="52.6" x2="170.2" y2="54.800000000000004" stroke="#c8c8c8" stroke-width="0.9"/>
<line x1="170.2" y1="633.8" x2="170.2" y2="636" stroke="#a8a8a8" stroke-width="0.9"/>
<line x1="178.5" y1="52.6" x2="178.5" y2="54.800000000000004" stroke="#c8c8c8" stroke-width="0.9"/>
<line x1="178.5" y1="633.8" x2="178.5" y2="636" stroke="#a8a8a8" stroke-width="0.9"/>
<line x1="186.9" y1="52.6" x2="186.9" y2="54.800000000000004" stroke="#c8c8c8" stroke-width="0.9"/>
<line x1="186.9" y1="633.8" x2="186.9" y2="636" stroke="#a8a8a8" stroke-width="0.9"/>
<line x1="195.2" y1="52.6" x2="195.2" y2="54.800000000000004" stroke="#c8c8c8" stroke-width="0.9"/>
<line x1="195.2" y1="633.8" x2="195.2" y2="636" stroke="#a8a8a8" stroke-width="0.9"/>
<line x1="203.6" y1="52.6" x2="203.6" y2="56.6" stroke="#c8c8c8" stroke-width="0.9"/>
<line x1="203.6" y1="632" x2="203.6" y2="636" stroke="#a8a8a8" stroke-width="0.9"/>
<line x1="212.0" y1="52.6" x2="212.0" y2="54.800000000000004" stroke="#c8c8c8" stroke-width="0.9"/>
<line x1="212.0" y1="633.8" x2="212.0" y2="636" stroke="#a8a8a8" stroke-width="0.9"/>
<line x1="220.3" y1="52.6" x2="220.3" y2="54.800000000000004" stroke="#c8c8c8" stroke-width="0.9"/>
<line x1="220.3" y1="633.8" x2="220.3" y2="636" stroke="#a8a8a8" stroke-width="0.9"/>
<line x1="228.7" y1="52.6" x2="228.7" y2="54.800000000000004" stroke="#c8c8c8" stroke-width="0.9"/>
<line x1="228.7" y1="633.8" x2="228.7" y2="636" stroke="#a8a8a8" stroke-width="0.9"/>
<line x1="237.0" y1="52.6" x2="237.0" y2="54.800000000000004" stroke="#c8c8c8" stroke-width="0.9"/>
<line x1="237.0" y1="633.8" x2="237.0" y2="636" stroke="#a8a8a8" stroke-width="0.9"/>
<line x1="245.4" y1="52.6" x2="245.4" y2="54.800000000000004" stroke="#c8c8c8" stroke-width="0.9"/>
<line x1="245.4" y1="633.8" x2="245.4" y2="636" stroke="#a8a8a8" stroke-width="0.9"/>
<line x1="253.8" y1="52.6" x2="253.8" y2="54.800000000000004" stroke="#c8c8c8" stroke-width="0.9"/>
<line x1="253.8" y1="633.8" x2="253.8" y2="636" stroke="#a8a8a8" stroke-width="0.9"/>
<line x1="262.1" y1="52.6" x2="262.1" y2="54.800000000000004" stroke="#c8c8c8" stroke-width="0.9"/>
<line x1="262.1" y1="633.8" x2="262.1" y2="636" stroke="#a8a8a8" stroke-width="0.9"/>
<line x1="270.5" y1="52.6" x2="270.5" y2="54.800000000000004" stroke="#c8c8c8" stroke-width="0.9"/>
<line x1="270.5" y1="633.8" x2="270.5" y2="636" stroke="#a8a8a8" stroke-width="0.9"/>
<line x1="278.8" y1="52.6" x2="278.8" y2="54.800000000000004" stroke="#c8c8c8" stroke-width="0.9"/>
<line x1="278.8" y1="633.8" x2="278.8" y2="636" stroke="#a8a8a8" stroke-width="0.9"/>
<line x1="287.2" y1="52.6" x2="287.2" y2="56.6" stroke="#c8c8c8" stroke-width="0.9"/>
<line x1="287.2" y1="632" x2="287.2" y2="636" stroke="#a8a8a8" stroke-width="0.9"/>
<line x1="295.6" y1="52.6" x2="295.6" y2="54.800000000000004" stroke="#c8c8c8" stroke-width="0.9"/>
<line x1="295.6" y1="633.8" x2="295.6" y2="636" stroke="#a8a8a8" stroke-width="0.9"/>
<line x1="303.9" y1="52.6" x2="303.9" y2="54.800000000000004" stroke="#c8c8c8" stroke-width="0.9"/>
<line x1="303.9" y1="633.8" x2="303.9" y2="636" stroke="#a8a8a8" stroke-width="0.9"/>
<line x1="312.3" y1="52.6" x2="312.3" y2="54.800000000000004" stroke="#c8c8c8" stroke-width="0.9"/>
<line x1="312.3" y1="633.8" x2="312.3" y2="636" stroke="#a8a8a8" stroke-width="0.9"/>
<line x1="320.6" y1="52.6" x2="320.6" y2="54.800000000000004" stroke="#c8c8c8" stroke-width="0.9"/>
<line x1="320.6" y1="633.8" x2="320.6" y2="636" stroke="#a8a8a8" stroke-width="0.9"/>
<line x1="329.0" y1="52.6" x2="329.0" y2="54.800000000000004" stroke="#c8c8c8" stroke-width="0.9"/>
<line x1="329.0" y1="633.8" x2="329.0" y2="636" stroke="#a8a8a8" stroke-width="0.9"/>
<line x1="337.4" y1="52.6" x2="337.4" y2="54.800000000000004" stroke="#c8c8c8" stroke-width="0.9"/>
<line x1="337.4" y1="633.8" x2="337.4" y2="636" stroke="#a8a8a8" stroke-width="0.9"/>
<line x1="345.7" y1="52.6" x2="345.7" y2="54.800000000000004" stroke="#c8c8c8" stroke-width="0.9"/>
<line x1="345.7" y1="633.8" x2="345.7" y2="636" stroke="#a8a8a8" stroke-width="0.9"/>
<line x1="354.1" y1="52.6" x2="354.1" y2="54.800000000000004" stroke="#c8c8c8" stroke-width="0.9"/>
<line x1="354.1" y1="633.8" x2="354.1" y2="636" stroke="#a8a8a8" stroke-width="0.9"/>
<line x1="362.4" y1="52.6" x2="362.4" y2="54.800000000000004" stroke="#c8c8c8" stroke-width="0.9"/>
<line x1="362.4" y1="633.8" x2="362.4" y2="636" stroke="#a8a8a8" stroke-width="0.9"/>
<line x1="370.8" y1="52.6" x2="370.8" y2="56.6" stroke="#c8c8c8" stroke-width="0.9"/>
<line x1="370.8" y1="632" x2="370.8" y2="636" stroke="#a8a8a8" stroke-width="0.9"/>
<line x1="379.2" y1="52.6" x2="379.2" y2="54.800000000000004" stroke="#c8c8c8" stroke-width="0.9"/>
<line x1="379.2" y1="633.8" x2="379.2" y2="636" stroke="#a8a8a8" stroke-width="0.9"/>
<line x1="387.5" y1="52.6" x2="387.5" y2="54.800000000000004" stroke="#c8c8c8" stroke-width="0.9"/>
<line x1="387.5" y1="633.8" x2="387.5" y2="636" stroke="#a8a8a8" stroke-width="0.9"/>
<line x1="395.9" y1="52.6" x2="395.9" y2="54.800000000000004" stroke="#c8c8c8" stroke-width="0.9"/>
<line x1="395.9" y1="633.8" x2="395.9" y2="636" stroke="#a8a8a8" stroke-width="0.9"/>
<line x1="404.2" y1="52.6" x2="404.2" y2="54.800000000000004" stroke="#c8c8c8" stroke-width="0.9"/>
<line x1="404.2" y1="633.8" x2="404.2" y2="636" stroke="#a8a8a8" stroke-width="0.9"/>
<line x1="412.6" y1="52.6" x2="412.6" y2="54.800000000000004" stroke="#c8c8c8" stroke-width="0.9"/>
<line x1="412.6" y1="633.8" x2="412.6" y2="636" stroke="#a8a8a8" stroke-width="0.9"/>
<line x1="421.0" y1="52.6" x2="421.0" y2="54.800000000000004" stroke="#c8c8c8" stroke-width="0.9"/>
<line x1="421.0" y1="633.8" x2="421.0" y2="636" stroke="#a8a8a8" stroke-width="0.9"/>
<line x1="429.3" y1="52.6" x2="429.3" y2="54.800000000000004" stroke="#c8c8c8" stroke-width="0.9"/>
<line x1="429.3" y1="633.8" x2="429.3" y2="636" stroke="#a8a8a8" stroke-width="0.9"/>
<line x1="437.7" y1="52.6" x2="437.7" y2="54.800000000000004" stroke="#c8c8c8" stroke-width="0.9"/>
<line x1="437.7" y1="633.8" x2="437.7" y2="636" stroke="#a8a8a8" stroke-width="0.9"/>
<line x1="446.0" y1="52.6" x2="446.0" y2="54.800000000000004" stroke="#c8c8c8" stroke-width="0.9"/>
<line x1="446.0" y1="633.8" x2="446.0" y2="636" stroke="#a8a8a8" stroke-width="0.9"/>
<line x1="454.4" y1="52.6" x2="454.4" y2="56.6" stroke="#c8c8c8" stroke-width="0.9"/>
<line x1="454.4" y1="632" x2="454.4" y2="636" stroke="#a8a8a8" stroke-width="0.9"/>
<line x1="462.8" y1="52.6" x2="462.8" y2="54.800000000000004" stroke="#c8c8c8" stroke-width="0.9"/>
<line x1="462.8" y1="633.8" x2="462.8" y2="636" stroke="#a8a8a8" stroke-width="0.9"/>
<line x1="471.1" y1="52.6" x2="471.1" y2="54.800000000000004" stroke="#c8c8c8" stroke-width="0.9"/>
<line x1="471.1" y1="633.8" x2="471.1" y2="636" stroke="#a8a8a8" stroke-width="0.9"/>
<line x1="479.5" y1="52.6" x2="479.5" y2="54.800000000000004" stroke="#c8c8c8" stroke-width="0.9"/>
<line x1="479.5" y1="633.8" x2="479.5" y2="636" stroke="#a8a8a8" stroke-width="0.9"/>
<line x1="487.8" y1="52.6" x2="487.8" y2="54.800000000000004" stroke="#c8c8c8" stroke-width="0.9"/>
<line x1="487.8" y1="633.8" x2="487.8" y2="636" stroke="#a8a8a8" stroke-width="0.9"/>
<line x1="496.2" y1="52.6" x2="496.2" y2="54.800000000000004" stroke="#c8c8c8" stroke-width="0.9"/>
<line x1="496.2" y1="633.8" x2="496.2" y2="636" stroke="#a8a8a8" stroke-width="0.9"/>
<line x1="504.6" y1="52.6" x2="504.6" y2="54.800000000000004" stroke="#c8c8c8" stroke-width="0.9"/>
<line x1="504.6" y1="633.8" x2="504.6" y2="636" stroke="#a8a8a8" stroke-width="0.9"/>
<line x1="512.9" y1="52.6" x2="512.9" y2="54.800000000000004" stroke="#c8c8c8" stroke-width="0.9"/>
<line x1="512.9" y1="633.8" x2="512.9" y2="636" stroke="#a8a8a8" stroke-width="0.9"/>
<line x1="521.3" y1="52.6" x2="521.3" y2="54.800000000000004" stroke="#c8c8c8" stroke-width="0.9"/>
<line x1="521.3" y1="633.8" x2="521.3" y2="636" stroke="#a8a8a8" stroke-width="0.9"/>
<line x1="529.6" y1="52.6" x2="529.6" y2="54.800000000000004" stroke="#c8c8c8" stroke-width="0.9"/>
<line x1="529.6" y1="633.8" x2="529.6" y2="636" stroke="#a8a8a8" stroke-width="0.9"/>
<line x1="538.0" y1="52.6" x2="538.0" y2="56.6" stroke="#c8c8c8" stroke-width="0.9"/>
<line x1="538.0" y1="632" x2="538.0" y2="636" stroke="#a8a8a8" stroke-width="0.9"/>
<line x1="546.4" y1="52.6" x2="546.4" y2="54.800000000000004" stroke="#c8c8c8" stroke-width="0.9"/>
<line x1="546.4" y1="633.8" x2="546.4" y2="636" stroke="#a8a8a8" stroke-width="0.9"/>
<line x1="554.7" y1="52.6" x2="554.7" y2="54.800000000000004" stroke="#c8c8c8" stroke-width="0.9"/>
<line x1="554.7" y1="633.8" x2="554.7" y2="636" stroke="#a8a8a8" stroke-width="0.9"/>
<line x1="563.1" y1="52.6" x2="563.1" y2="54.800000000000004" stroke="#c8c8c8" stroke-width="0.9"/>
<line x1="563.1" y1="633.8" x2="563.1" y2="636" stroke="#a8a8a8" stroke-width="0.9"/>
<line x1="571.4" y1="52.6" x2="571.4" y2="54.800000000000004" stroke="#c8c8c8" stroke-width="0.9"/>
<line x1="571.4" y1="633.8" x2="571.4" y2="636" stroke="#a8a8a8" stroke-width="0.9"/>
<line x1="579.8" y1="52.6" x2="579.8" y2="54.800000000000004" stroke="#c8c8c8" stroke-width="0.9"/>
<line x1="579.8" y1="633.8" x2="579.8" y2="636" stroke="#a8a8a8" stroke-width="0.9"/>
<line x1="588.2" y1="52.6" x2="588.2" y2="54.800000000000004" stroke="#c8c8c8" stroke-width="0.9"/>
<line x1="588.2" y1="633.8" x2="588.2" y2="636" stroke="#a8a8a8" stroke-width="0.9"/>
<line x1="596.5" y1="52.6" x2="596.5" y2="54.800000000000004" stroke="#c8c8c8" stroke-width="0.9"/>
<line x1="596.5" y1="633.8" x2="596.5" y2="636" stroke="#a8a8a8" stroke-width="0.9"/>
<line x1="604.9" y1="52.6" x2="604.9" y2="54.800000000000004" stroke="#c8c8c8" stroke-width="0.9"/>
<line x1="604.9" y1="633.8" x2="604.9" y2="636" stroke="#a8a8a8" stroke-width="0.9"/>
<line x1="613.2" y1="52.6" x2="613.2" y2="54.800000000000004" stroke="#c8c8c8" stroke-width="0.9"/>
<line x1="613.2" y1="633.8" x2="613.2" y2="636" stroke="#a8a8a8" stroke-width="0.9"/>
<line x1="621.6" y1="52.6" x2="621.6" y2="56.6" stroke="#c8c8c8" stroke-width="0.9"/>
<line x1="621.6" y1="632" x2="621.6" y2="636" stroke="#a8a8a8" stroke-width="0.9"/>
<line x1="630.0" y1="52.6" x2="630.0" y2="54.800000000000004" stroke="#c8c8c8" stroke-width="0.9"/>
<line x1="630.0" y1="633.8" x2="630.0" y2="636" stroke="#a8a8a8" stroke-width="0.9"/>
<line x1="638.3" y1="52.6" x2="638.3" y2="54.800000000000004" stroke="#c8c8c8" stroke-width="0.9"/>
<line x1="638.3" y1="633.8" x2="638.3" y2="636" stroke="#a8a8a8" stroke-width="0.9"/>
<line x1="646.7" y1="52.6" x2="646.7" y2="54.800000000000004" stroke="#c8c8c8" stroke-width="0.9"/>
<line x1="646.7" y1="633.8" x2="646.7" y2="636" stroke="#a8a8a8" stroke-width="0.9"/>
<line x1="655.0" y1="52.6" x2="655.0" y2="54.800000000000004" stroke="#c8c8c8" stroke-width="0.9"/>
<line x1="655.0" y1="633.8" x2="655.0" y2="636" stroke="#a8a8a8" stroke-width="0.9"/>
<line x1="663.4" y1="52.6" x2="663.4" y2="54.800000000000004" stroke="#c8c8c8" stroke-width="0.9"/>
<line x1="663.4" y1="633.8" x2="663.4" y2="636" stroke="#a8a8a8" stroke-width="0.9"/>
<line x1="671.8" y1="52.6" x2="671.8" y2="54.800000000000004" stroke="#c8c8c8" stroke-width="0.9"/>
<line x1="671.8" y1="633.8" x2="671.8" y2="636" stroke="#a8a8a8" stroke-width="0.9"/>
<line x1="680.1" y1="52.6" x2="680.1" y2="54.800000000000004" stroke="#c8c8c8" stroke-width="0.9"/>
<line x1="680.1" y1="633.8" x2="680.1" y2="636" stroke="#a8a8a8" stroke-width="0.9"/>
<line x1="688.5" y1="52.6" x2="688.5" y2="54.800000000000004" stroke="#c8c8c8" stroke-width="0.9"/>
<line x1="688.5" y1="633.8" x2="688.5" y2="636" stroke="#a8a8a8" stroke-width="0.9"/>
<line x1="696.8" y1="52.6" x2="696.8" y2="54.800000000000004" stroke="#c8c8c8" stroke-width="0.9"/>
<line x1="696.8" y1="633.8" x2="696.8" y2="636" stroke="#a8a8a8" stroke-width="0.9"/>
<line x1="705.2" y1="52.6" x2="705.2" y2="56.6" stroke="#c8c8c8" stroke-width="0.9"/>
<line x1="705.2" y1="632" x2="705.2" y2="636" stroke="#a8a8a8" stroke-width="0.9"/>
<line x1="713.6" y1="52.6" x2="713.6" y2="54.800000000000004" stroke="#c8c8c8" stroke-width="0.9"/>
<line x1="713.6" y1="633.8" x2="713.6" y2="636" stroke="#a8a8a8" stroke-width="0.9"/>
<line x1="721.9" y1="52.6" x2="721.9" y2="54.800000000000004" stroke="#c8c8c8" stroke-width="0.9"/>
<line x1="721.9" y1="633.8" x2="721.9" y2="636" stroke="#a8a8a8" stroke-width="0.9"/>
<line x1="730.3" y1="52.6" x2="730.3" y2="54.800000000000004" stroke="#c8c8c8" stroke-width="0.9"/>
<line x1="730.3" y1="633.8" x2="730.3" y2="636" stroke="#a8a8a8" stroke-width="0.9"/>
<line x1="738.6" y1="52.6" x2="738.6" y2="54.800000000000004" stroke="#c8c8c8" stroke-width="0.9"/>
<line x1="738.6" y1="633.8" x2="738.6" y2="636" stroke="#a8a8a8" stroke-width="0.9"/>
<line x1="747.0" y1="52.6" x2="747.0" y2="54.800000000000004" stroke="#c8c8c8" stroke-width="0.9"/>
<line x1="747.0" y1="633.8" x2="747.0" y2="636" stroke="#a8a8a8" stroke-width="0.9"/>
<line x1="755.4" y1="52.6" x2="755.4" y2="54.800000000000004" stroke="#c8c8c8" stroke-width="0.9"/>
<line x1="755.4" y1="633.8" x2="755.4" y2="636" stroke="#a8a8a8" stroke-width="0.9"/>
<line x1="763.7" y1="52.6" x2="763.7" y2="54.800000000000004" stroke="#c8c8c8" stroke-width="0.9"/>
<line x1="763.7" y1="633.8" x2="763.7" y2="636" stroke="#a8a8a8" stroke-width="0.9"/>
<line x1="772.1" y1="52.6" x2="772.1" y2="54.800000000000004" stroke="#c8c8c8" stroke-width="0.9"/>
<line x1="772.1" y1="633.8" x2="772.1" y2="636" stroke="#a8a8a8" stroke-width="0.9"/>
<line x1="780.4" y1="52.6" x2="780.4" y2="54.800000000000004" stroke="#c8c8c8" stroke-width="0.9"/>
<line x1="780.4" y1="633.8" x2="780.4" y2="636" stroke="#a8a8a8" stroke-width="0.9"/>
<line x1="788.8" y1="52.6" x2="788.8" y2="56.6" stroke="#c8c8c8" stroke-width="0.9"/>
<line x1="788.8" y1="632" x2="788.8" y2="636" stroke="#a8a8a8" stroke-width="0.9"/>
<line x1="797.2" y1="52.6" x2="797.2" y2="54.800000000000004" stroke="#c8c8c8" stroke-width="0.9"/>
<line x1="797.2" y1="633.8" x2="797.2" y2="636" stroke="#a8a8a8" stroke-width="0.9"/>
<line x1="805.5" y1="52.6" x2="805.5" y2="54.800000000000004" stroke="#c8c8c8" stroke-width="0.9"/>
<line x1="805.5" y1="633.8" x2="805.5" y2="636" stroke="#a8a8a8" stroke-width="0.9"/>
<line x1="813.9" y1="52.6" x2="813.9" y2="54.800000000000004" stroke="#c8c8c8" stroke-width="0.9"/>
<line x1="813.9" y1="633.8" x2="813.9" y2="636" stroke="#a8a8a8" stroke-width="0.9"/>
<line x1="822.2" y1="52.6" x2="822.2" y2="54.800000000000004" stroke="#c8c8c8" stroke-width="0.9"/>
<line x1="822.2" y1="633.8" x2="822.2" y2="636" stroke="#a8a8a8" stroke-width="0.9"/>
<line x1="830.6" y1="52.6" x2="830.6" y2="54.800000000000004" stroke="#c8c8c8" stroke-width="0.9"/>
<line x1="830.6" y1="633.8" x2="830.6" y2="636" stroke="#a8a8a8" stroke-width="0.9"/>
<line x1="839.0" y1="52.6" x2="839.0" y2="54.800000000000004" stroke="#c8c8c8" stroke-width="0.9"/>
<line x1="839.0" y1="633.8" x2="839.0" y2="636" stroke="#a8a8a8" stroke-width="0.9"/>
<line x1="847.3" y1="52.6" x2="847.3" y2="54.800000000000004" stroke="#c8c8c8" stroke-width="0.9"/>
<line x1="847.3" y1="633.8" x2="847.3" y2="636" stroke="#a8a8a8" stroke-width="0.9"/>
<line x1="855.7" y1="52.6" x2="855.7" y2="54.800000000000004" stroke="#c8c8c8" stroke-width="0.9"/>
<line x1="855.7" y1="633.8" x2="855.7" y2="636" stroke="#a8a8a8" stroke-width="0.9"/>
<line x1="864.0" y1="52.6" x2="864.0" y2="54.800000000000004" stroke="#c8c8c8" stroke-width="0.9"/>
<line x1="864.0" y1="633.8" x2="864.0" y2="636" stroke="#a8a8a8" stroke-width="0.9"/>
<line x1="872.4" y1="52.6" x2="872.4" y2="56.6" stroke="#c8c8c8" stroke-width="0.9"/>
<line x1="872.4" y1="632" x2="872.4" y2="636" stroke="#a8a8a8" stroke-width="0.9"/>
<line x1="880.8" y1="52.6" x2="880.8" y2="54.800000000000004" stroke="#c8c8c8" stroke-width="0.9"/>
<line x1="880.8" y1="633.8" x2="880.8" y2="636" stroke="#a8a8a8" stroke-width="0.9"/>
<line x1="889.1" y1="52.6" x2="889.1" y2="54.800000000000004" stroke="#c8c8c8" stroke-width="0.9"/>
<line x1="889.1" y1="633.8" x2="889.1" y2="636" stroke="#a8a8a8" stroke-width="0.9"/>
<line x1="897.5" y1="52.6" x2="897.5" y2="54.800000000000004" stroke="#c8c8c8" stroke-width="0.9"/>
<line x1="897.5" y1="633.8" x2="897.5" y2="636" stroke="#a8a8a8" stroke-width="0.9"/>
<line x1="905.8" y1="52.6" x2="905.8" y2="54.800000000000004" stroke="#c8c8c8" stroke-width="0.9"/>
<line x1="905.8" y1="633.8" x2="905.8" y2="636" stroke="#a8a8a8" stroke-width="0.9"/>
<line x1="914.2" y1="52.6" x2="914.2" y2="54.800000000000004" stroke="#c8c8c8" stroke-width="0.9"/>
<line x1="914.2" y1="633.8" x2="914.2" y2="636" stroke="#a8a8a8" stroke-width="0.9"/>
<line x1="922.6" y1="52.6" x2="922.6" y2="54.800000000000004" stroke="#c8c8c8" stroke-width="0.9"/>
<line x1="922.6" y1="633.8" x2="922.6" y2="636" stroke="#a8a8a8" stroke-width="0.9"/>
<line x1="930.9" y1="52.6" x2="930.9" y2="54.800000000000004" stroke="#c8c8c8" stroke-width="0.9"/>
<line x1="930.9" y1="633.8" x2="930.9" y2="636" stroke="#a8a8a8" stroke-width="0.9"/>
<line x1="939.3" y1="52.6" x2="939.3" y2="54.800000000000004" stroke="#c8c8c8" stroke-width="0.9"/>
<line x1="939.3" y1="633.8" x2="939.3" y2="636" stroke="#a8a8a8" stroke-width="0.9"/>
<line x1="947.6" y1="52.6" x2="947.6" y2="54.800000000000004" stroke="#c8c8c8" stroke-width="0.9"/>
<line x1="947.6" y1="633.8" x2="947.6" y2="636" stroke="#a8a8a8" stroke-width="0.9"/>
<line x1="956.0" y1="52.6" x2="956.0" y2="56.6" stroke="#c8c8c8" stroke-width="0.9"/>
<line x1="956.0" y1="632" x2="956.0" y2="636" stroke="#a8a8a8" stroke-width="0.9"/>
</g>
<rect x="0" y="636.4" width="1000" height="2.4" fill="#f4f4f4"/>
<text class="ax" x="22.3" y="106.5" fill="#f0f060">18</text>
<text class="ax" x="22.3" y="165.0" fill="#f0f060">16</text>
<text class="ax" x="22.3" y="223.5" fill="#f0f060">14</text>
<text class="ax" x="22.3" y="282.0" fill="#f0f060">12</text>
<text class="ax" x="22.3" y="340.5" fill="#f0f060">10</text>
<text class="ax" x="22.3" y="399.0" fill="#f0f060">8</text>
<text class="ax" x="22.3" y="457.5" fill="#f0f060">6</text>
<text class="ax" x="22.3" y="516.0" fill="#f0f060">4</text>
<text class="ax" x="22.3" y="574.5" fill="#f0f060">2</text>
<text class="ax" x="22.3" y="633.0" fill="#f0f060">0</text>
<text class="ax" x="52.9" y="77.4" fill="#38d838">14</text>
<text class="ax" x="52.9" y="135.9" fill="#38d838">12</text>
<text class="ax" x="52.9" y="194.4" fill="#38d838">10</text>
<text class="ax" x="52.9" y="252.9" fill="#38d838">8</text>
<text class="ax" x="52.9" y="311.4" fill="#38d838">6</text>
<text class="ax" x="52.9" y="369.9" fill="#38d838">4</text>
<text class="ax" x="52.9" y="428.4" fill="#38d838">2</text>
<text class="ax" x="52.9" y="486.9" fill="#38d838">0</text>
<text class="ax" x="52.9" y="545.4" fill="#38d838">-2</text>
<text class="ax" x="52.9" y="603.9" fill="#38d838">-4</text>
<text class="ax" x="82.9" y="66.5" fill="#30d8e0">30</text>
<text class="ax" x="82.9" y="125.0" fill="#30d8e0">25</text>
<text class="ax" x="82.9" y="183.5" fill="#30d8e0">20</text>
<text class="ax" x="82.9" y="242.0" fill="#30d8e0">15</text>
<text class="ax" x="82.9" y="300.5" fill="#30d8e0">10</text>
<text class="ax" x="82.9" y="359.0" fill="#30d8e0">5</text>
<text class="ax" x="82.9" y="417.5" fill="#30d8e0">0</text>
<text class="ax" x="82.9" y="476.0" fill="#30d8e0">-5</text>
<text class="ax" x="82.9" y="534.5" fill="#30d8e0">-10</text>
<text class="ax" x="82.9" y="593.0" fill="#30d8e0">-15</text>
<text class="ax" x="112.9" y="101.6" fill="#e02828">25</text>
<text class="ax" x="112.9" y="160.1" fill="#e02828">20</text>
<text class="ax" x="112.9" y="218.6" fill="#e02828">15</text>
<text class="ax" x="112.9" y="277.1" fill="#e02828">10</text>
<text class="ax" x="112.9" y="335.6" fill="#e02828">5</text>
<text class="ax" x="112.9" y="394.1" fill="#e02828">0</text>
<text class="ax" x="112.9" y="452.6" fill="#e02828">-5</text>
<text class="ax" x="112.9" y="511.1" fill="#e02828">-10</text>
<text class="ax" x="112.9" y="569.6" fill="#e02828">-15</text>
<text class="ax" x="112.9" y="628.1" fill="#e02828">-20</text>
<line x1="956" y1="389" x2="963" y2="389" stroke="#f01818" stroke-width="1"/>
<rect x="962.5" y="381" width="28" height="16" fill="#f01818"/>
<text class="mk" x="976.5" y="393.8">4</text>
<line x1="956" y1="413" x2="963" y2="413" stroke="#20e8f0" stroke-width="1"/>
<rect x="962.5" y="405" width="28" height="16" fill="#20e8f0"/>
<text class="mk" x="976.5" y="417.8">3</text>
<line x1="956" y1="482.5" x2="963" y2="482.5" stroke="#18e020" stroke-width="1"/>
<rect x="962.5" y="474.5" width="28" height="16" fill="#18e020"/>
<text class="mk" x="976.5" y="487.3">2</text>
<line x1="956" y1="628" x2="963" y2="628" stroke="#f8f830" stroke-width="1"/>
<rect x="962.5" y="620" width="28" height="16" fill="#f8f830"/>
<text class="mk" x="976.5" y="632.8">1</text>
<text class="tl" x="120.5" y="653.6">0</text>
<text class="tl" x="204.1" y="653.6">1311</text>
<text class="tl" x="287.7" y="653.6">2621</text>
<text class="tl" x="371.3" y="653.6">3932</text>
<text class="tl" x="454.9" y="653.6">5243</text>
<text class="tl" x="538.5" y="653.6">6554</text>
<text class="tl" x="622.1" y="653.6">7864</text>
<text class="tl" x="705.7" y="653.6">9175</text>
<text class="tl" x="789.3" y="653.6">10486</text>
<text class="tl" x="872.9" y="653.6">11796</text>
<text class="tl" x="958" y="653.6">13107 ms</text><rect x="0" y="0" width="1000" height="22" fill="url(#gTitle)"/>
<rect x="0" y="0" width="1.5" height="52" fill="#7884b4"/>
<rect x="998.6" y="0" width="1.4" height="52" fill="#9aa0c0"/>
<g><rect x="2.5" y="3" width="15.5" height="15.5" rx="2" fill="#3a78b8"/><rect x="2.5" y="3" width="15.5" height="7" rx="2" fill="#5a98d0"/><polyline points="3,12.5 6,9.5 8,13.5 10.5,7 12.5,11 14.5,8.5 17.5,8.5" fill="none" stroke="#e8f8ff" stroke-width="1.7" stroke-linejoin="round"/><polyline points="4,16 7,14 9,17 12,13 15,15" fill="none" stroke="#16386c" stroke-width="1.6"/></g>
<text x="26.8" y="15.2" class="b" font-size="12.6px" fill="#1c1c2c" textLength="97.5" lengthAdjust="spacing">ScopeFileViewer</text>
<text x="131.6" y="15.2" class="b" font-size="12.6px" fill="#1c1c2c" textLength="4.0" lengthAdjust="spacing">-</text>
<text x="139" y="15.2" class="b" font-size="12.6px" fill="#1c1c2c" textLength="82.5" lengthAdjust="spacing">CHEVY-TAHOE</text>
<text x="228.2" y="15.2" class="b" font-size="12.6px" fill="#1c1c2c" textLength="19.1" lengthAdjust="spacing">5.3</text>
<text x="252.4" y="15.2" class="b" font-size="12.6px" fill="#1c1c2c" textLength="144.6" lengthAdjust="spacing">CKP-CMP-INJ5-INJ8.vsm</text>
<rect x="912.5" y="3" width="17" height="15.5" rx="2.5" fill="url(#gBtn)" stroke="#8c8cac" stroke-width="1"/>
<path d="M915.5 10.6 l3.6-3.4 v2 h5 v-2 l3.6 3.4 l-3.6 3.4 v-2 h-5 v2 z" fill="#2c3048" stroke="#50546c" stroke-width="0.5"/>
<rect x="941.5" y="3" width="16.5" height="15.5" rx="2.5" fill="url(#gBtn)" stroke="#8c8cac" stroke-width="1"/>
<rect x="945.5" y="12.6" width="7" height="2.6" fill="#34384c"/>
<rect x="961.5" y="3" width="16" height="15.5" rx="2.5" fill="url(#gBtn)" stroke="#8c8cac" stroke-width="1"/>
<rect x="966.6" y="6" width="7.4" height="6.4" fill="none" stroke="#34384c" stroke-width="1.5"/><rect x="964.6" y="9" width="7" height="6" fill="#d4d4e4" stroke="#34384c" stroke-width="1.5"/>
<rect x="980.5" y="3" width="17.5" height="15.5" rx="2.5" fill="url(#gClose)" stroke="#a03838" stroke-width="1"/>
<path d="M984.5 5.8 l9.5 9.8 M994 5.8 l-9.5 9.8" stroke="#fff" stroke-width="2.2" stroke-linecap="round"/>
<rect x="1.5" y="22" width="880" height="30.4" fill="url(#gTool)"/>
<rect x="881.5" y="22" width="117" height="30.4" fill="#f6f6fa"/>
<rect x="0" y="21.2" width="1000" height="1" fill="#8e8ea8"/>
<rect x="0" y="51.6" width="1000" height="1" fill="#d8d8e0"/>
<rect x="2.5" y="22.6" width="527.5" height="28.6" rx="3" fill="#000"/>
<rect x="107.3" y="23" width="1.1" height="28" fill="#80808c"/>
<rect x="106.6" y="22.4" width="2.4" height="1.6" fill="#c8c8d4"/><rect x="106.6" y="50" width="2.4" height="1.6" fill="#c8c8d4"/>
<rect x="228.4" y="23" width="1.1" height="28" fill="#80808c"/>
<rect x="227.70000000000002" y="22.4" width="2.4" height="1.6" fill="#c8c8d4"/><rect x="227.70000000000002" y="50" width="2.4" height="1.6" fill="#c8c8d4"/>
<rect x="349.3" y="23" width="1.1" height="28" fill="#80808c"/>
<rect x="348.6" y="22.4" width="2.4" height="1.6" fill="#c8c8d4"/><rect x="348.6" y="50" width="2.4" height="1.6" fill="#c8c8d4"/>
<text class="tb" x="42.5" y="42.4">Setup</text>
<text class="tb" x="147.5" y="42.6">Cursors</text>
<text class="tb" x="268.5" y="42.6">Refresh</text>
<text class="tb" x="389.5" y="42.6">File</text>
<text class="tb" x="474" y="42.6">Print</text>
<rect x="534.200" y="26.3" width="1.800" height="1.800" fill="#4a4a64"/>
<rect x="534.200" y="30.3" width="1.800" height="1.800" fill="#4a4a64"/>
<rect x="534.200" y="34.3" width="1.800" height="1.800" fill="#4a4a64"/>
<rect x="534.200" y="38.3" width="1.800" height="1.800" fill="#4a4a64"/>
<rect x="534.200" y="42.3" width="1.800" height="1.800" fill="#4a4a64"/>
<g><path d="M13.400 31 q0-2.700 2.800-2.700 h1 q2.800 0 2.800 2.700" fill="none" stroke="#e05858" stroke-width="1.200"/><rect x="6.400" y="30.400" width="20" height="13.400" rx="1.600" fill="#ee0c0c"/><rect x="6.400" y="30.400" width="20" height="3.600" rx="1.600" fill="#f43c3c"/><rect x="7" y="40.500" width="18.800" height="3.300" rx="1.200" fill="#d00808"/><path d="M15.600 33.800 l2.600 1.300 l-2.600 1.300 z" fill="#ffe0e0"/></g>
<g><path d="M111.300 30.500 l6.200-4.600 v3 h2.300 v3.200 h-2.300 v3 z" fill="#f4ac18"/><path d="M133 30.500 l-6.200-4.600 v3 h-2.300 v3.200 h2.300 v3 z" fill="#f4ac18"/><line x1="121.300" y1="26" x2="121.300" y2="47" stroke="#f0b838" stroke-width="1.400"/><line x1="125.200" y1="26" x2="125.200" y2="47" stroke="#f0b838" stroke-width="1.400"/><polyline points="110.800,39.500 115.800,35.500 123.300,42.800 131.200,35.200 133.800,37.200" fill="none" stroke="#4a98e4" stroke-width="2.300" stroke-linejoin="round"/><rect x="110.800" y="44.600" width="9.300" height="2.600" fill="#98c4f0"/><rect x="126.400" y="44.600" width="7.400" height="2.600" fill="#98c4f0"/><rect x="122.300" y="44.600" width="1.900" height="2.600" fill="#98c4f0"/><circle cx="121.300" cy="46.800" r="1.500" fill="#f4c848"/><circle cx="125.200" cy="46.800" r="1.500" fill="#f4c848"/></g>
<g stroke-linejoin="round"><path d="M236.200 46 v-11.500 h-3.600 l6-8 l6 8 h-3.600 v6.500 q0 5 -4.800 5 z" fill="#58d870" stroke="#e4fbe8" stroke-width="1"/><path d="M249.600 28.500 v11.500 h3.600 l-6 8 l-6-8 h3.600 v-6.500 q0-5 4.800-5 z" fill="#48a4e8" stroke="#e0f2ff" stroke-width="1"/></g>
<g><path d="M355.5 30.5 q0-1.5 1.5-1.5 h5 l1.6 2 h7 q1.4 0 1.4 1.4 v11 q0 1.4 -1.4 1.4 h-13.6 q-1.5 0 -1.5-1.4 z" fill="#e8b020"/><path d="M355.5 35 h16.5 v9 q0 1.4 -1.4 1.4 h-13.6 q-1.5 0 -1.5-1.4 z" fill="#f8d848"/></g>
<g><rect x="443.5" y="27.5" width="9.5" height="11" fill="#f4f8ff" stroke="#4878b0" stroke-width="0.8"/><line x1="445.5" y1="30.5" x2="451" y2="30.5" stroke="#2858a0" stroke-width="1"/><line x1="445.5" y1="33" x2="451" y2="33" stroke="#2858a0" stroke-width="1"/><line x1="445.5" y1="35.5" x2="451" y2="35.5" stroke="#2858a0" stroke-width="1"/><path d="M438.600 35.500 h5 v3.800 h9.500 v-3.800 h5 v11.300 h-19.500 z" fill="#ece8dc" stroke="#a8a498" stroke-width="0.800"/><rect x="438.600" y="43.200" width="19.500" height="3.600" fill="#cfc7ae"/></g>
<circle cx="34.5" cy="684" r="18.200" fill="url(#gDis)" stroke="#101318" stroke-width="1.200"/>
<circle cx="97" cy="684" r="18.200" fill="url(#gDis)" stroke="#101318" stroke-width="1.200"/>
<circle cx="159.3" cy="684" r="18.200" fill="url(#gDis)" stroke="#101318" stroke-width="1.200"/>
<circle cx="221.7" cy="684" r="18.200" fill="url(#gDis)" stroke="#101318" stroke-width="1.200"/>
<g fill="#868a9c"><rect x="23.800" y="679.500" width="21.600" height="12.700" rx="1.200"/><rect x="30.800" y="676.800" width="7.400" height="3.500"/><circle cx="34.500" cy="688.200" r="5.400" fill="#1a1e2a" stroke="#868a9c" stroke-width="2.400"/><path d="M31 688.500 q3.500-4.500 7 0 z" fill="#05070c"/><path d="M34.500 675.500 v-4.500 M30.500 676 l-3.400-3.600 M38.500 676 l3.400-3.600" stroke="#868a9c" stroke-width="1.400" fill="none"/></g>
<rect x="87.400" y="674.800" width="19.200" height="19.200" rx="1.200" fill="#868a9c"/>
<path d="M151.500 673.500 l19 10.500 l-19 10.500 z" fill="#868a9c"/>
<circle cx="221.700" cy="684" r="9.400" fill="#868a9c"/>
<text x="293.300" y="690.400" font-size="17.400px" fill="#f6f6f6">00:02:153</text>
<text x="903" y="690.3" font-size="16px" class="b" fill="#f4f4f4">Max</text>
<circle cx="408" cy="684.3" r="20.300" fill="#8080b0" opacity="0.45"/>
<circle cx="408" cy="684.3" r="19.500" fill="url(#gRound)"/>
<circle cx="470.7" cy="684.3" r="20.300" fill="#8080b0" opacity="0.45"/>
<circle cx="470.7" cy="684.3" r="19.500" fill="url(#gRound)"/>
<circle cx="721.3" cy="684.3" r="20.300" fill="#8080b0" opacity="0.45"/>
<circle cx="721.3" cy="684.3" r="19.500" fill="url(#gRound)"/>
<circle cx="784.2" cy="684.3" r="20.300" fill="#8080b0" opacity="0.45"/>
<circle cx="784.2" cy="684.3" r="19.500" fill="url(#gRound)"/>
<circle cx="846.6" cy="684.3" r="20.300" fill="#8080b0" opacity="0.45"/>
<circle cx="846.6" cy="684.3" r="19.500" fill="url(#gRound)"/>
<circle cx="971.4" cy="684.3" r="20.300" fill="#8080b0" opacity="0.45"/>
<circle cx="971.4" cy="684.3" r="19.500" fill="url(#gRound)"/>
<path d="M396.8 684.4 L408.8 673.1 V695.6999999999999 Z" fill="#40587e"/>
<path d="M405.6 684.4 L417.8 673.1 V695.6999999999999 Z" fill="#4e6a9c" stroke="#f4f4fc" stroke-width="1.200"/>
<path d="M462.8 684.4 L476 673.1 V695.6999999999999 Z" fill="#4e6a9c"/>
<path d="M728.6 684.4 L715.4 673.1 V695.6999999999999 Z" fill="#4e6a9c"/>
<path d="M786 684.4 L773.6 673.1 V695.6999999999999 Z" fill="#4e6a9c"/>
<path d="M797.5 684.4 L785.5 673.1 V695.6999999999999 Z" fill="#40587e"/>
<path d="M786 684.4 L773.6 673.1 V695.6999999999999 Z" fill="#4e6a9c" stroke="#f4f4fc" stroke-width="1.200"/>
<g><rect x="835" y="673" width="23.400" height="22.500" rx="2" fill="#48628c"/><path d="M849.500 675.200 h7 v7.300 h-3.200 v-4 h-3.800 z" fill="#eef0fa"/><path d="M836.800 686.500 h3.200 v4 h3.800 v3.200 h-7 z" fill="#eef0fa"/><path d="M836.600 674.600 h11.400 l-3.600 3.600 l12.300 12.300 l-3.700 3.700 l-12.300-12.300 l-4.100 4.100 z" fill="#3c5680" stroke="#eef0fa" stroke-width="1.100" stroke-linejoin="round"/></g>
<g fill="none" stroke="#48628c"><circle cx="966.200" cy="679.600" r="7.300" stroke-width="3"/><line x1="972.600" y1="686" x2="980.600" y2="693.800" stroke-width="5" stroke-linecap="round"/></g>
<rect x="503" y="671.3" width="188" height="3.8" fill="#ecece4"/>
<path d="M502.3 667 q0-3 3-3 h3.6 q3 0 3 3 v9.5 l-4.8 6.3 l-4.8-6.3 z" fill="#dcdcd8" stroke="#8a9a8a" stroke-width="0.6"/>
<path d="M502.3 667 q0-3 3-3 h3.6 q3 0 3 3 v1.6 h-9.6 z" fill="#58c068"/>
<line x1="507.2" y1="686.5" x2="507.2" y2="691" stroke="#6a6a5a" stroke-width="1"/><line x1="685" y1="686.5" x2="685" y2="691" stroke="#6a6a5a" stroke-width="1"/>
<rect x="0" y="719.6" width="1000" height="12.4" fill="url(#gTaskTop)"/>
<rect x="0" y="732" width="1000" height="16" fill="url(#gTaskBot)"/>
<rect x="0" y="748" width="1000" height="2" fill="#02060e"/>
<rect x="1.5" y="720" width="70.0" height="12" fill="url(#gTaskTopD)"/>
<rect x="1.5" y="732" width="70.0" height="15" fill="url(#gTaskBotB)"/>
<rect x="1.5" y="746.6" width="70.0" height="1" fill="#5a6888"/>
<rect x="88" y="720" width="67" height="12" fill="url(#gTaskTopD)"/>
<rect x="88" y="732" width="67" height="15" fill="url(#gTaskBotB)"/>
<rect x="88" y="746.6" width="67" height="1" fill="#5a6888"/>
<rect x="172" y="720" width="66.5" height="12" fill="url(#gTaskTopD)"/>
<rect x="172" y="732" width="66.5" height="15" fill="url(#gTaskBotB)"/>
<rect x="172" y="746.6" width="66.5" height="1" fill="#5a6888"/>
<rect x="285" y="720" width="67" height="12" fill="url(#gTaskTopD)"/>
<rect x="285" y="732" width="67" height="15" fill="url(#gTaskBotB)"/>
<rect x="285" y="746.6" width="67" height="1" fill="#5a6888"/>
<rect x="367.6" y="720" width="68.0" height="12" fill="url(#gTaskTopD)"/>
<rect x="367.6" y="732" width="68.0" height="15" fill="url(#gTaskBotB)"/>
<rect x="367.6" y="746.6" width="68.0" height="1" fill="#5a6888"/>
<rect x="905" y="720" width="35" height="12" fill="url(#gTaskTopD)"/>
<rect x="905" y="732" width="35" height="15" fill="url(#gTaskBotB)"/>
<rect x="905" y="746.6" width="35" height="1" fill="#5a6888"/>
<rect x="955" y="720" width="37" height="12" fill="url(#gTaskTopD)"/>
<rect x="955" y="732" width="37" height="15" fill="url(#gTaskBotB)"/>
<rect x="955" y="746.6" width="37" height="1" fill="#5a6888"/>
<rect x="267.5" y="721.0" width="1.4" height="2" fill="#d8d8e0"/>
<rect x="267.5" y="724.9" width="1.4" height="2" fill="#d8d8e0"/>
<rect x="267.5" y="728.8" width="1.4" height="2" fill="#d8d8e0"/>
<rect x="267.5" y="732.7" width="1.4" height="2" fill="#d8d8e0"/>
<rect x="267.5" y="736.6" width="1.4" height="2" fill="#d8d8e0"/>
<rect x="267.5" y="740.5" width="1.4" height="2" fill="#d8d8e0"/>
<rect x="267.5" y="744.4" width="1.4" height="2" fill="#d8d8e0"/>
<rect x="892" y="721.0" width="1.4" height="2" fill="#d8d8e0"/>
<rect x="892" y="724.9" width="1.4" height="2" fill="#d8d8e0"/>
<rect x="892" y="728.8" width="1.4" height="2" fill="#d8d8e0"/>
<rect x="892" y="732.7" width="1.4" height="2" fill="#d8d8e0"/>
<rect x="892" y="736.6" width="1.4" height="2" fill="#d8d8e0"/>
<rect x="892" y="740.5" width="1.4" height="2" fill="#d8d8e0"/>
<rect x="892" y="744.4" width="1.4" height="2" fill="#d8d8e0"/>
<g><path d="M24 732.500 l13.700-11.400 l13.700 11.400 l-2.600 0 v11.600 h-22.200 v-11.600 z" fill="#d4faf6" stroke="#1c6e66" stroke-width="1.500" stroke-linejoin="round"/><path d="M25.500 731.800 l12.200-10.200 l12.200 10.200" fill="none" stroke="#2a8a80" stroke-width="1.800"/><rect x="29.800" y="733" width="8" height="5" fill="#2a948a"/><rect x="41.500" y="733" width="4.800" height="10.600" fill="#1c6e66"/></g>
<g><rect x="105" y="721.5" width="31" height="24.5" fill="#d4ecf8" stroke="#68a8c8" stroke-width="1"/><path d="M113.5 731.5 l8-8.5 l8 8.5 z" fill="#38a8e0"/><path d="M113.5 734 l8 8.5 l8-8.5 z" fill="#38a8e0"/><rect x="106" y="741.5" width="29" height="2" fill="#3090c8"/><rect x="106" y="740.5" width="7" height="3" fill="#48b048"/></g>
<g><rect x="190.3" y="725" width="14.5" height="20.5" fill="#16306c"/><rect x="191.3" y="725.8" width="12.2" height="4.4" fill="#b8dcf8"/><rect x="191.3" y="732.8" width="12.2" height="4.6" fill="#b8dcf8"/><rect x="191.3" y="740.4" width="12.2" height="4.4" fill="#b8dcf8"/><path d="M189.5 720.6 h18 l-9 7.6 z" fill="#f0a828" stroke="#3a2808" stroke-width="0.8"/><rect x="207.5" y="733.6" width="12" height="11.6" fill="#c89c50" stroke="#2a2008" stroke-width="0.8"/><path d="M207.5 737.4 h12 M207.5 741.2 h12 M213.500 733.600 v11.600" stroke="#6a5020" stroke-width="0.8"/><path d="M207.8 728.800 l9.200 6 l-9.200 6 z" fill="#f0a828" stroke="#5a3808" stroke-width="0.8"/></g>
<g><path d="M305.500 722.500 q13-3.500 26.500 0 l-2.500 8 h-21.500 z" fill="#e02828"/><path d="M307.500 730 h22.500 l3 7 q1.500 7 -4 7 h-20.500 q-5.500 0 -4-7 z" fill="#48c830"/><rect x="308" y="728" width="21.500" height="5" fill="#f08020"/><path d="M313 722 h11.500 v9 h4.500 l-10.200 11.500 l-10.200-11.500 h4.400 z" fill="#f8a018"/><path d="M315.500 723 h6.500 v10 h2.500 l-5.700 7 l-5.700-7 h2.400 z" fill="#f8e428"/><circle cx="307.500" cy="726.500" r="2.800" fill="#3888d8" stroke="#e8f0f8" stroke-width="0.600"/><circle cx="330" cy="726.500" r="2.800" fill="#3888d8" stroke="#e8f0f8" stroke-width="0.600"/><circle cx="307" cy="741" r="2.800" fill="#3888d8" stroke="#e8f0f8" stroke-width="0.600"/><circle cx="330.500" cy="741" r="2.800" fill="#3888d8" stroke="#e8f0f8" stroke-width="0.600"/></g>
<g><rect x="389.700" y="720.800" width="22" height="15" fill="#e4e4e4"/><path d="M393.500 731 q0-6.500 7.200-6.500 q7.200 0 7.200 6.500 z" fill="#303030"/><rect x="392.500" y="729.500" width="16.500" height="5" rx="1" fill="#181818"/><rect x="394" y="727" width="13.500" height="2" fill="#9a9a9a"/><path d="M384.600 735.800 h32.400 l-5.500 6.800 h-21.400 z" fill="#d4d4d4"/></g>
<text x="464.500" y="736.600" class="b" font-size="14px" fill="#fff" letter-spacing="0.2">No Active Vehicle</text>
<g><path d="M907.700 737 l8-4.500 h21.900 v12.400 h-29.900 z" fill="#b8141c"/><rect x="907.700" y="743" width="29.900" height="1.900" fill="#58080c"/><path d="M912.600 728.600 q10.100-12.500 20.200 0 M915.400 732.800 q7.300-9.500 14.600 0 M918.400 736.800 q4.300-6 8.600 0" fill="none" stroke="#ececec" stroke-width="2.100"/><circle cx="922.700" cy="739.800" r="2.800" fill="#f0f0f0"/><rect x="926" y="739.500" width="10" height="3" fill="#30383c"/><path d="M909.500 740.500 l5-3.500 v7 z" fill="#e82830"/></g>
<g><path d="M960 726 q2-5 6-4.500 q5 1.500 10-0.500 q4-1 6 4" fill="none" stroke="#c8c8c8" stroke-width="1.800"/><rect x="957" y="729" width="28" height="16" rx="1.500" fill="#b81420"/><rect x="975" y="732.500" width="8" height="10.500" fill="#4a78d8"/><circle cx="966" cy="737.700" r="2.900" fill="#e8d8d0"/><rect x="959.500" y="732" width="2" height="2" fill="#f0c0c0"/><rect x="959.500" y="736.500" width="2" height="2" fill="#f0c0c0"/><rect x="959.500" y="741" width="2" height="2" fill="#f0c0c0"/><rect x="971" y="732" width="1.600" height="1.600" fill="#f0c0c0"/><rect x="971" y="736" width="1.600" height="1.600" fill="#f0c0c0"/><rect x="971" y="740" width="1.600" height="1.600" fill="#f0c0c0"/></g>
<rect x="910.0" y="747.200" width="1.400" height="1" fill="#9098a8"/>
<rect x="913.2" y="747.200" width="1.400" height="1" fill="#9098a8"/>
<rect x="916.4" y="747.200" width="1.400" height="1" fill="#9098a8"/>
<rect x="919.6" y="747.200" width="1.400" height="1" fill="#9098a8"/>
<rect x="922.8" y="747.200" width="1.400" height="1" fill="#9098a8"/>
<rect x="926.0" y="747.200" width="1.400" height="1" fill="#9098a8"/>
<rect x="929.2" y="747.200" width="1.400" height="1" fill="#9098a8"/>
<rect x="932.4" y="747.200" width="1.400" height="1" fill="#9098a8"/>
<rect x="960.0" y="747.200" width="1.400" height="1" fill="#9098a8"/>
<rect x="963.2" y="747.200" width="1.400" height="1" fill="#9098a8"/>
<rect x="966.4" y="747.200" width="1.400" height="1" fill="#9098a8"/>
<rect x="969.6" y="747.200" width="1.400" height="1" fill="#9098a8"/>
<rect x="972.8" y="747.200" width="1.400" height="1" fill="#9098a8"/>
<rect x="976.0" y="747.200" width="1.400" height="1" fill="#9098a8"/>
<rect x="979.2" y="747.200" width="1.400" height="1" fill="#9098a8"/>
<rect x="982.4" y="747.200" width="1.400" height="1" fill="#9098a8"/>
<rect x="876" y="705.200" width="122.700" height="15" fill="#ffffe1" stroke="#000" stroke-width="1"/>
<text x="878" y="717" font-size="11px" fill="#000" font-family="'DejaVu Sans','Liberation Sans',sans-serif" textLength="118" lengthAdjust="spacingAndGlyphs">Zoom in on the waveform</text></svg></body></html>
